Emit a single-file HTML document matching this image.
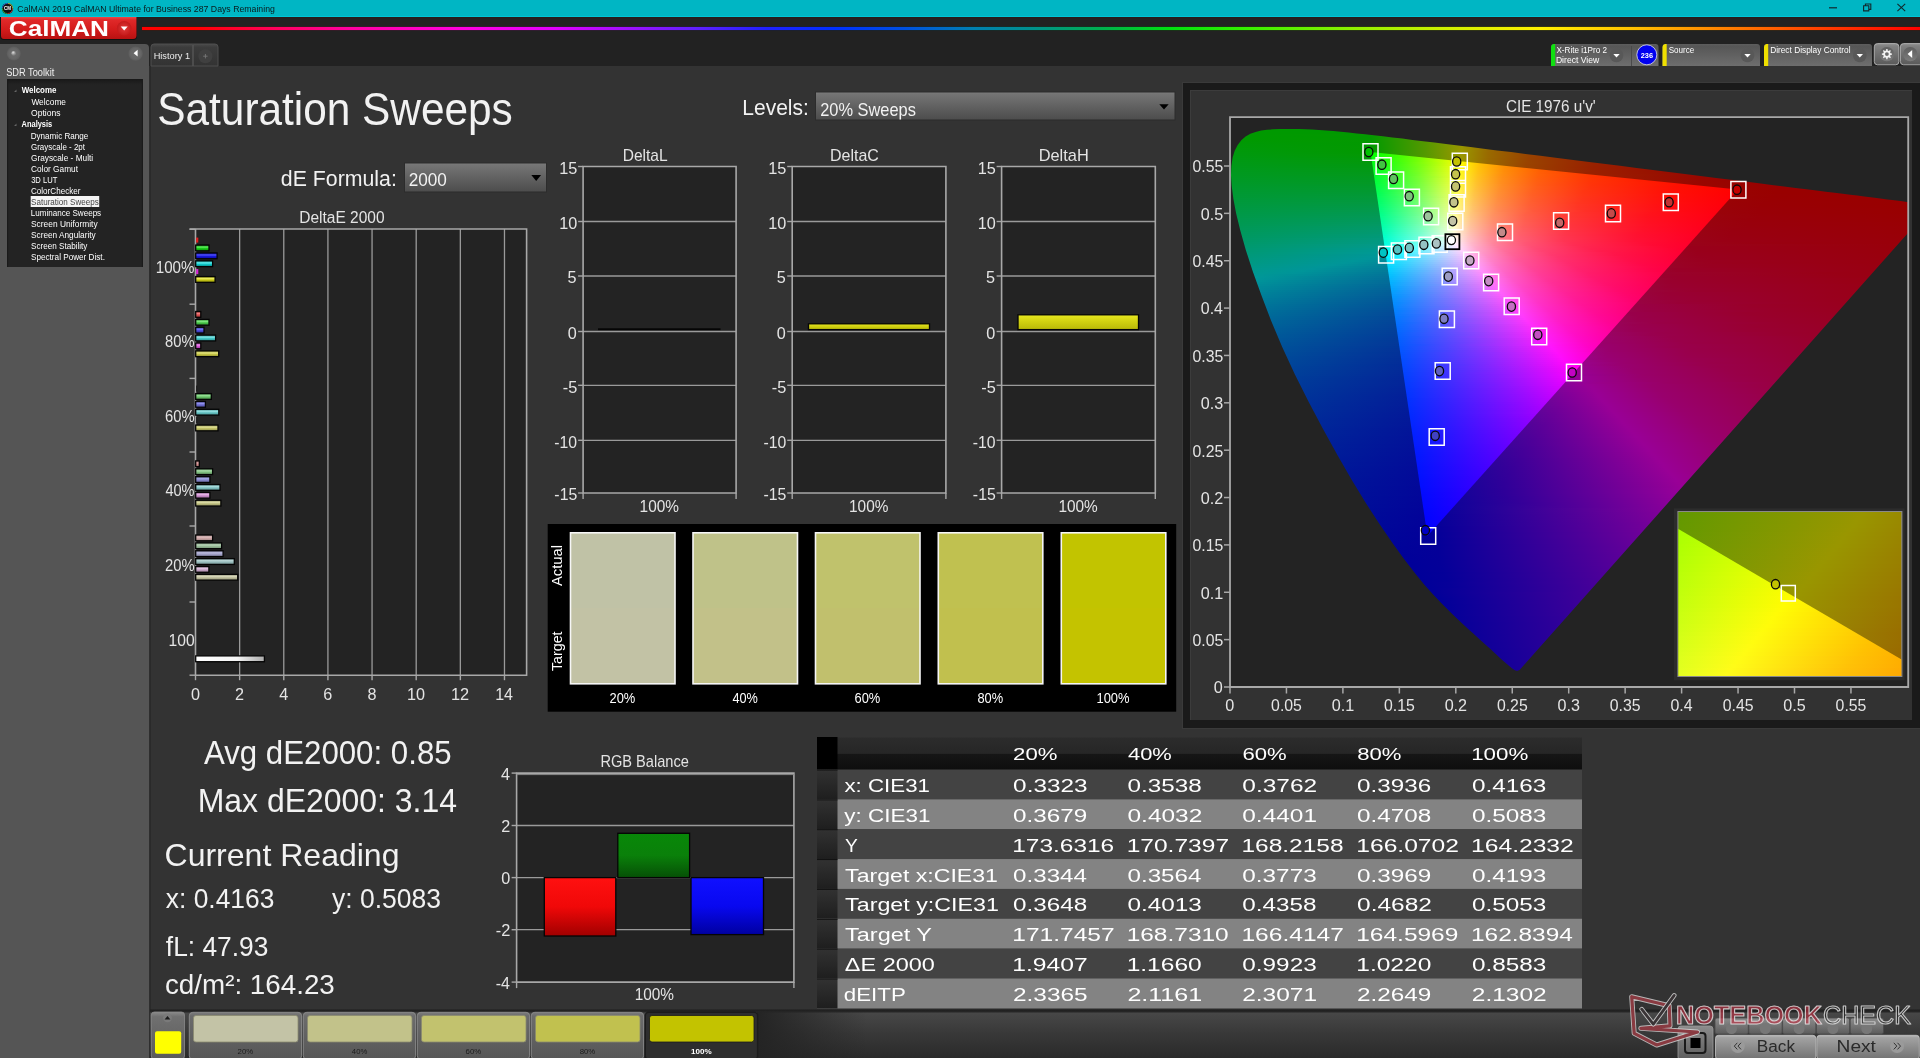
<!DOCTYPE html>
<html lang="en"><head><meta charset="utf-8"><title>CalMAN 2019 - Saturation Sweeps</title>
<style>html,body{margin:0;padding:0;background:#333;overflow:hidden}svg{display:block;will-change:transform}text{font-family:'Liberation Sans',sans-serif;white-space:pre}</style></head>
<body>
<svg width="1920" height="1058" viewBox="0 0 1920 1058">
<defs>
<linearGradient id="rb"><stop offset="0" stop-color="#ff0000"/><stop offset="0.03" stop-color="#ff0000"/><stop offset="0.077" stop-color="#ff0060"/><stop offset="0.116" stop-color="#ff00a0"/><stop offset="0.181" stop-color="#ff00e0"/><stop offset="0.233" stop-color="#e000ff"/><stop offset="0.273" stop-color="#a010ff"/><stop offset="0.312" stop-color="#6020ff"/><stop offset="0.351" stop-color="#2020ff"/><stop offset="0.39" stop-color="#0030ff"/><stop offset="0.429" stop-color="#0050e0"/><stop offset="0.468" stop-color="#0080b0"/><stop offset="0.499" stop-color="#009090"/><stop offset="0.539" stop-color="#00b050"/><stop offset="0.578" stop-color="#00e010"/><stop offset="0.617" stop-color="#30f000"/><stop offset="0.682" stop-color="#90f000"/><stop offset="0.734" stop-color="#d0f000"/><stop offset="0.786" stop-color="#fff000"/><stop offset="0.839" stop-color="#ffc000"/><stop offset="0.89" stop-color="#ff8000"/><stop offset="0.943" stop-color="#ff4000"/><stop offset="1" stop-color="#ff0000"/></linearGradient>
<linearGradient id="cb" x1="0" y1="0" x2="0" y2="1"><stop offset="0" stop-color="#e84a4a"/><stop offset="0.12" stop-color="#e02a2a"/><stop offset="0.55" stop-color="#d41c1c"/><stop offset="1" stop-color="#b81212"/></linearGradient>
<radialGradient id="cbd"><stop offset="0" stop-color="#e23a3a"/><stop offset="1" stop-color="#c41a1a"/></radialGradient>
<radialGradient id="lb"><stop offset="0" stop-color="#6c6c6c"/><stop offset=".7" stop-color="#676767"/><stop offset="1" stop-color="#5c5c5c"/></radialGradient>
<radialGradient id="lbk" cx=".4" cy=".35"><stop offset="0" stop-color="#ddd"/><stop offset="1" stop-color="#888"/></radialGradient>
<linearGradient id="tb" x1="0" y1="0" x2="0" y2="1"><stop offset="0" stop-color="#181818"/><stop offset="0.03" stop-color="#232323"/><stop offset="1" stop-color="#232323"/></linearGradient>
<linearGradient id="ht" x1="0" y1="0" x2="0" y2="1"><stop offset="0" stop-color="#4a4a4a"/><stop offset="0.15" stop-color="#3c3c3c"/><stop offset="1" stop-color="#333"/></linearGradient>
<linearGradient id="tt" x1="0" y1="0" x2="0" y2="1"><stop offset="0" stop-color="#5e5e5e"/><stop offset="0.1" stop-color="#565656"/><stop offset="1" stop-color="#6e6e6e"/></linearGradient>
<radialGradient id="dd"><stop offset="0" stop-color="#555"/><stop offset="1" stop-color="#5f5f5f"/></radialGradient>
<linearGradient id="gb" x1="0" y1="0" x2="0" y2="1"><stop offset="0" stop-color="#909090"/><stop offset="0.12" stop-color="#808080"/><stop offset="1" stop-color="#5a5a5a"/></linearGradient>
<linearGradient id="gc" x1="0" y1="0" x2="0" y2="1"><stop offset="0" stop-color="#5e5e5e"/><stop offset="1" stop-color="#7c7c7c"/></linearGradient>
<linearGradient id="dd1" x1="0" y1="0" x2="0" y2="1"><stop offset="0" stop-color="#7c7c7c"/><stop offset="0.08" stop-color="#747474"/><stop offset="1" stop-color="#4c4c4c"/></linearGradient>
<clipPath id="lvc"><rect x="816" y="92" width="358" height="27.5"/></clipPath>
<linearGradient id="bg0" x1="0" y1="0" x2="0" y2="1"><stop offset="0" stop-color="#0a8a0a"/><stop offset="0.35" stop-color="#60f060"/><stop offset="0.6" stop-color="#18c818"/><stop offset="1" stop-color="#0a8a0a"/></linearGradient>
<linearGradient id="bg1" x1="0" y1="0" x2="0" y2="1"><stop offset="0" stop-color="#0808a0"/><stop offset="0.35" stop-color="#5050ff"/><stop offset="0.6" stop-color="#1818d8"/><stop offset="1" stop-color="#0808a0"/></linearGradient>
<linearGradient id="bg2" x1="0" y1="0" x2="0" y2="1"><stop offset="0" stop-color="#089090"/><stop offset="0.35" stop-color="#60f0f0"/><stop offset="0.6" stop-color="#10c8c8"/><stop offset="1" stop-color="#089090"/></linearGradient>
<linearGradient id="bg3" x1="0" y1="0" x2="0" y2="1"><stop offset="0" stop-color="#8a8a08"/><stop offset="0.35" stop-color="#f0f060"/><stop offset="0.6" stop-color="#c8c818"/><stop offset="1" stop-color="#8a8a08"/></linearGradient>
<linearGradient id="bg4" x1="0" y1="0" x2="0" y2="1"><stop offset="0" stop-color="#a03838"/><stop offset="0.35" stop-color="#f48181"/><stop offset="0.6" stop-color="#d94f4f"/><stop offset="1" stop-color="#a03838"/></linearGradient>
<linearGradient id="bg5" x1="0" y1="0" x2="0" y2="1"><stop offset="0" stop-color="#308c30"/><stop offset="0.35" stop-color="#80e780"/><stop offset="0.6" stop-color="#45c445"/><stop offset="1" stop-color="#308c30"/></linearGradient>
<linearGradient id="bg6" x1="0" y1="0" x2="0" y2="1"><stop offset="0" stop-color="#3232a0"/><stop offset="0.35" stop-color="#7676f4"/><stop offset="0.6" stop-color="#4848d2"/><stop offset="1" stop-color="#3232a0"/></linearGradient>
<linearGradient id="bg7" x1="0" y1="0" x2="0" y2="1"><stop offset="0" stop-color="#309191"/><stop offset="0.35" stop-color="#80e7e7"/><stop offset="0.6" stop-color="#3fc4c4"/><stop offset="1" stop-color="#309191"/></linearGradient>
<linearGradient id="bg8" x1="0" y1="0" x2="0" y2="1"><stop offset="0" stop-color="#913591"/><stop offset="0.35" stop-color="#f48df4"/><stop offset="0.6" stop-color="#d253d2"/><stop offset="1" stop-color="#913591"/></linearGradient>
<linearGradient id="bg9" x1="0" y1="0" x2="0" y2="1"><stop offset="0" stop-color="#8c8c2f"/><stop offset="0.35" stop-color="#e7e780"/><stop offset="0.6" stop-color="#c4c445"/><stop offset="1" stop-color="#8c8c2f"/></linearGradient>
<linearGradient id="bg10" x1="0" y1="0" x2="0" y2="1"><stop offset="0" stop-color="#4b8e4b"/><stop offset="0.35" stop-color="#96e196"/><stop offset="0.6" stop-color="#65c065"/><stop offset="1" stop-color="#4b8e4b"/></linearGradient>
<linearGradient id="bg11" x1="0" y1="0" x2="0" y2="1"><stop offset="0" stop-color="#5151a0"/><stop offset="0.35" stop-color="#9191ec"/><stop offset="0.6" stop-color="#6a6acd"/><stop offset="1" stop-color="#5151a0"/></linearGradient>
<linearGradient id="bg12" x1="0" y1="0" x2="0" y2="1"><stop offset="0" stop-color="#4c9393"/><stop offset="0.35" stop-color="#96e1e1"/><stop offset="0.6" stop-color="#61c0c0"/><stop offset="1" stop-color="#4c9393"/></linearGradient>
<linearGradient id="bg13" x1="0" y1="0" x2="0" y2="1"><stop offset="0" stop-color="#8e8e4a"/><stop offset="0.35" stop-color="#e1e196"/><stop offset="0.6" stop-color="#c0c065"/><stop offset="1" stop-color="#8e8e4a"/></linearGradient>
<linearGradient id="bg14" x1="0" y1="0" x2="0" y2="1"><stop offset="0" stop-color="#9f6c6c"/><stop offset="0.35" stop-color="#e5acac"/><stop offset="0.6" stop-color="#d08b8b"/><stop offset="1" stop-color="#9f6c6c"/></linearGradient>
<linearGradient id="bg15" x1="0" y1="0" x2="0" y2="1"><stop offset="0" stop-color="#618f61"/><stop offset="0.35" stop-color="#a8dca8"/><stop offset="0.6" stop-color="#7ebe7e"/><stop offset="1" stop-color="#618f61"/></linearGradient>
<linearGradient id="bg16" x1="0" y1="0" x2="0" y2="1"><stop offset="0" stop-color="#69699f"/><stop offset="0.35" stop-color="#a6a6e5"/><stop offset="0.6" stop-color="#8585ca"/><stop offset="1" stop-color="#69699f"/></linearGradient>
<linearGradient id="bg17" x1="0" y1="0" x2="0" y2="1"><stop offset="0" stop-color="#629393"/><stop offset="0.35" stop-color="#a8dcdc"/><stop offset="0.6" stop-color="#7cbebe"/><stop offset="1" stop-color="#629393"/></linearGradient>
<linearGradient id="bg18" x1="0" y1="0" x2="0" y2="1"><stop offset="0" stop-color="#936593"/><stop offset="0.35" stop-color="#e5b2e5"/><stop offset="0.6" stop-color="#ca8bca"/><stop offset="1" stop-color="#936593"/></linearGradient>
<linearGradient id="bg19" x1="0" y1="0" x2="0" y2="1"><stop offset="0" stop-color="#8f8f60"/><stop offset="0.35" stop-color="#dcdca8"/><stop offset="0.6" stop-color="#bebe7e"/><stop offset="1" stop-color="#8f8f60"/></linearGradient>
<linearGradient id="bg20" x1="0" y1="0" x2="0" y2="1"><stop offset="0" stop-color="#9f8383"/><stop offset="0.35" stop-color="#dfbfbf"/><stop offset="0.6" stop-color="#cca6a6"/><stop offset="1" stop-color="#9f8383"/></linearGradient>
<linearGradient id="bg21" x1="0" y1="0" x2="0" y2="1"><stop offset="0" stop-color="#769076"/><stop offset="0.35" stop-color="#bad7ba"/><stop offset="0.6" stop-color="#98bb98"/><stop offset="1" stop-color="#769076"/></linearGradient>
<linearGradient id="bg22" x1="0" y1="0" x2="0" y2="1"><stop offset="0" stop-color="#81819f"/><stop offset="0.35" stop-color="#bcbcdf"/><stop offset="0.6" stop-color="#a0a0c6"/><stop offset="1" stop-color="#81819f"/></linearGradient>
<linearGradient id="bg23" x1="0" y1="0" x2="0" y2="1"><stop offset="0" stop-color="#799494"/><stop offset="0.35" stop-color="#bad7d7"/><stop offset="0.6" stop-color="#96bbbb"/><stop offset="1" stop-color="#799494"/></linearGradient>
<linearGradient id="bg24" x1="0" y1="0" x2="0" y2="1"><stop offset="0" stop-color="#947b94"/><stop offset="0.35" stop-color="#dfc2df"/><stop offset="0.6" stop-color="#c6a3c6"/><stop offset="1" stop-color="#947b94"/></linearGradient>
<linearGradient id="bg25" x1="0" y1="0" x2="0" y2="1"><stop offset="0" stop-color="#909076"/><stop offset="0.35" stop-color="#d7d7ba"/><stop offset="0.6" stop-color="#bbbb98"/><stop offset="1" stop-color="#909076"/></linearGradient>
<linearGradient id="wbar"><stop offset="0" stop-color="#fff"/><stop offset=".6" stop-color="#f4f4f4"/><stop offset="1" stop-color="#aaa"/></linearGradient>
<linearGradient id="ybar" x1="0" y1="0" x2="0" y2="1"><stop offset="0" stop-color="#e8e820"/><stop offset="0.5" stop-color="#cfcf10"/><stop offset="1" stop-color="#b8b808"/></linearGradient>
<linearGradient id="sw0" x1="0" y1="0" x2="0" y2="1"><stop offset="0" stop-color="#c0c2a6"/><stop offset="0.5" stop-color="#c0c2a6"/><stop offset="0.5" stop-color="#c2c2a5"/><stop offset="1" stop-color="#c2c2a5"/></linearGradient>
<linearGradient id="sw1" x1="0" y1="0" x2="0" y2="1"><stop offset="0" stop-color="#bfc289"/><stop offset="0.5" stop-color="#bfc289"/><stop offset="0.5" stop-color="#c2c189"/><stop offset="1" stop-color="#c2c189"/></linearGradient>
<linearGradient id="sw2" x1="0" y1="0" x2="0" y2="1"><stop offset="0" stop-color="#c0c26c"/><stop offset="0.5" stop-color="#c0c26c"/><stop offset="0.5" stop-color="#c1c06d"/><stop offset="1" stop-color="#c1c06d"/></linearGradient>
<linearGradient id="sw3" x1="0" y1="0" x2="0" y2="1"><stop offset="0" stop-color="#c0c150"/><stop offset="0.5" stop-color="#c0c150"/><stop offset="0.5" stop-color="#c1c04e"/><stop offset="1" stop-color="#c1c04e"/></linearGradient>
<linearGradient id="sw4" x1="0" y1="0" x2="0" y2="1"><stop offset="0" stop-color="#c2c400"/><stop offset="0.5" stop-color="#c2c400"/><stop offset="0.5" stop-color="#c4c300"/><stop offset="1" stop-color="#c4c300"/></linearGradient>
<linearGradient id="hd0"><stop offset="0" stop-color="#090"/><stop offset="1" stop-color="#090"/></linearGradient><linearGradient id="hd1"><stop offset="0" stop-color="#090"/><stop offset="1" stop-color="#090"/></linearGradient><linearGradient id="hd2"><stop offset="0" stop-color="#090"/><stop offset="1" stop-color="#090"/></linearGradient><linearGradient id="hd3"><stop offset="0" stop-color="#090"/><stop offset=".9191" stop-color="#039900"/><stop offset="1" stop-color="#190"/></linearGradient><linearGradient id="hd4"><stop offset="0" stop-color="#090"/><stop offset=".8153" stop-color="#029900"/><stop offset="1" stop-color="#2a9900"/></linearGradient><linearGradient id="hd5"><stop offset="0" stop-color="#090"/><stop offset=".7486" stop-color="#039900"/><stop offset="1" stop-color="#439900"/></linearGradient><linearGradient id="hd6"><stop offset="0" stop-color="#009902"/><stop offset=".6856" stop-color="#039900"/><stop offset=".9691" stop-color="#590"/><stop offset="1" stop-color="#609900"/></linearGradient><linearGradient id="hd7"><stop offset="0" stop-color="#009904"/><stop offset=".6351" stop-color="#029900"/><stop offset=".8957" stop-color="#590"/><stop offset="1" stop-color="#7e9900"/></linearGradient><linearGradient id="hd8"><stop offset="0" stop-color="#009906"/><stop offset=".5921" stop-color="#029900"/><stop offset=".8289" stop-color="#539900"/><stop offset=".9912" stop-color="#999700"/><stop offset="1" stop-color="#999300"/></linearGradient><linearGradient id="hd9"><stop offset="0" stop-color="#009907"/><stop offset=".561" stop-color="#039900"/><stop offset=".7805" stop-color="#590"/><stop offset=".9268" stop-color="#999600"/><stop offset="1" stop-color="#970"/></linearGradient><linearGradient id="hd10"><stop offset="0" stop-color="#009909"/><stop offset=".5267" stop-color="#039900"/><stop offset=".7328" stop-color="#590"/><stop offset=".8702" stop-color="#999600"/><stop offset=".9733" stop-color="#996a00"/><stop offset="1" stop-color="#996200"/></linearGradient><linearGradient id="hd11"><stop offset="0" stop-color="#00990b"/><stop offset=".4982" stop-color="#029900"/><stop offset=".6882" stop-color="#539900"/><stop offset=".8172" stop-color="#999800"/><stop offset=".914" stop-color="#996b00"/><stop offset="1" stop-color="#995100"/></linearGradient><linearGradient id="hd12"><stop offset="0" stop-color="#00990d"/><stop offset=".4746" stop-color="#029901"/><stop offset=".6542" stop-color="#539900"/><stop offset=".7763" stop-color="#999700"/><stop offset=".8678" stop-color="#996a00"/><stop offset="1" stop-color="#994500"/></linearGradient><linearGradient id="hd13"><stop offset="0" stop-color="#00990e"/><stop offset=".4534" stop-color="#039903"/><stop offset=".6238" stop-color="#590"/><stop offset=".7363" stop-color="#999700"/><stop offset=".8232" stop-color="#996a00"/><stop offset=".955" stop-color="#994300"/><stop offset="1" stop-color="#993a00"/></linearGradient><linearGradient id="hd14"><stop offset="0" stop-color="#009910"/><stop offset=".4329" stop-color="#029905"/><stop offset=".5945" stop-color="#590"/><stop offset=".7012" stop-color="#999700"/><stop offset=".7835" stop-color="#996a00"/><stop offset=".9085" stop-color="#994300"/><stop offset="1" stop-color="#993100"/></linearGradient><linearGradient id="hd15"><stop offset="0" stop-color="#009912"/><stop offset=".4128" stop-color="#029908"/><stop offset=".564" stop-color="#539902"/><stop offset=".6686" stop-color="#999600"/><stop offset=".7471" stop-color="#996900"/><stop offset=".8663" stop-color="#994200"/><stop offset="1" stop-color="#992900"/></linearGradient><linearGradient id="hd16"><stop offset="0" stop-color="#009914"/><stop offset=".3972" stop-color="#03990a"/><stop offset=".5417" stop-color="#559904"/><stop offset=".6389" stop-color="#999600"/><stop offset=".7139" stop-color="#996900"/><stop offset=".8278" stop-color="#994200"/><stop offset="1" stop-color="#992300"/></linearGradient><linearGradient id="hd17"><stop offset="0" stop-color="#009916"/><stop offset=".3803" stop-color="#03990c"/><stop offset=".5186" stop-color="#559907"/><stop offset=".609" stop-color="#999803"/><stop offset=".6782" stop-color="#996b00"/><stop offset=".7846" stop-color="#940"/><stop offset=".9601" stop-color="#920"/><stop offset="1" stop-color="#991d00"/></linearGradient><linearGradient id="hd18"><stop offset="0" stop-color="#009917"/><stop offset=".3648" stop-color="#02990f"/><stop offset=".4974" stop-color="#55990a"/><stop offset=".5842" stop-color="#999706"/><stop offset=".6505" stop-color="#996b01"/><stop offset=".7526" stop-color="#994300"/><stop offset=".9209" stop-color="#920"/><stop offset="1" stop-color="#991800"/></linearGradient><linearGradient id="hd19"><stop offset="0" stop-color="#009919"/><stop offset=".3505" stop-color="#029911"/><stop offset=".4755" stop-color="#53990d"/><stop offset=".5613" stop-color="#999709"/><stop offset=".625" stop-color="#996a04"/><stop offset=".723" stop-color="#994300"/><stop offset=".8848" stop-color="#992100"/><stop offset="1" stop-color="#991400"/></linearGradient><linearGradient id="hd20"><stop offset="0" stop-color="#00991b"/><stop offset=".3396" stop-color="#039914"/><stop offset=".4599" stop-color="#55990f"/><stop offset=".5401" stop-color="#99970c"/><stop offset=".6014" stop-color="#996a06"/><stop offset=".6958" stop-color="#994301"/><stop offset=".8514" stop-color="#992100"/><stop offset="1" stop-color="#991000"/></linearGradient><linearGradient id="hd21"><stop offset="0" stop-color="#00991d"/><stop offset=".3273" stop-color="#029916"/><stop offset=".4432" stop-color="#559912"/><stop offset=".5205" stop-color="#99960f"/><stop offset=".5795" stop-color="#996908"/><stop offset=".6705" stop-color="#994203"/><stop offset=".8205" stop-color="#992100"/><stop offset="1" stop-color="#990c00"/></linearGradient><linearGradient id="hd22"><stop offset="0" stop-color="#00991f"/><stop offset=".3158" stop-color="#029919"/><stop offset=".4254" stop-color="#539915"/><stop offset=".5" stop-color="#999812"/><stop offset=".5548" stop-color="#996c0b"/><stop offset=".6404" stop-color="#994405"/><stop offset=".7807" stop-color="#920"/><stop offset="1" stop-color="#990900"/></linearGradient><linearGradient id="hd23"><stop offset="0" stop-color="#009920"/><stop offset=".3079" stop-color="#03991b"/><stop offset=".414" stop-color="#559918"/><stop offset=".4841" stop-color="#999815"/><stop offset=".5372" stop-color="#996b0e"/><stop offset=".62" stop-color="#994406"/><stop offset=".7558" stop-color="#992201"/><stop offset="1" stop-color="#990700"/></linearGradient><linearGradient id="hd24"><stop offset="0" stop-color="#092"/><stop offset=".2977" stop-color="#02991e"/><stop offset=".4004" stop-color="#55991b"/><stop offset=".4682" stop-color="#999719"/><stop offset=".5195" stop-color="#996b10"/><stop offset=".5975" stop-color="#994408"/><stop offset=".7269" stop-color="#992202"/><stop offset=".961" stop-color="#990700"/><stop offset="1" stop-color="#990400"/></linearGradient><linearGradient id="hd25"><stop offset="0" stop-color="#009924"/><stop offset=".2883" stop-color="#029920"/><stop offset=".3877" stop-color="#55991e"/><stop offset=".4533" stop-color="#99971c"/><stop offset=".503" stop-color="#996a12"/><stop offset=".5785" stop-color="#99440a"/><stop offset=".7038" stop-color="#992203"/><stop offset=".9304" stop-color="#990700"/><stop offset="1" stop-color="#990200"/></linearGradient><linearGradient id="hd26"><stop offset="0" stop-color="#009926"/><stop offset=".2794" stop-color="#029923"/><stop offset=".3738" stop-color="#539921"/><stop offset=".4393" stop-color="#99961f"/><stop offset=".4875" stop-color="#996a15"/><stop offset=".5607" stop-color="#99430c"/><stop offset=".6821" stop-color="#992204"/><stop offset=".9037" stop-color="#990600"/><stop offset="1" stop-color="#900"/></linearGradient><linearGradient id="hd27"><stop offset="0" stop-color="#009928"/><stop offset=".2729" stop-color="#039925"/><stop offset=".3645" stop-color="#559924"/><stop offset=".4262" stop-color="#999622"/><stop offset=".4729" stop-color="#996917"/><stop offset=".5439" stop-color="#99430e"/><stop offset=".6617" stop-color="#992106"/><stop offset=".8766" stop-color="#990600"/><stop offset="1" stop-color="#900"/></linearGradient><linearGradient id="hd28"><stop offset="0" stop-color="#00992a"/><stop offset=".265" stop-color="#029928"/><stop offset=".3539" stop-color="#559927"/><stop offset=".412" stop-color="#999826"/><stop offset=".4555" stop-color="#996c1a"/><stop offset=".5227" stop-color="#994510"/><stop offset=".6334" stop-color="#992307"/><stop offset=".833" stop-color="#990700"/><stop offset=".9927" stop-color="#900"/><stop offset="1" stop-color="#900"/></linearGradient><linearGradient id="hd29"><stop offset="0" stop-color="#00992c"/><stop offset=".2575" stop-color="#02992b"/><stop offset=".3422" stop-color="#53992a"/><stop offset=".4004" stop-color="#999829"/><stop offset=".4427" stop-color="#996b1d"/><stop offset=".5079" stop-color="#994412"/><stop offset=".6155" stop-color="#992309"/><stop offset=".8113" stop-color="#990701"/><stop offset=".9647" stop-color="#900"/><stop offset="1" stop-color="#900"/></linearGradient><linearGradient id="hd30"><stop offset="0" stop-color="#00992e"/><stop offset=".2521" stop-color="#03992d"/><stop offset=".3345" stop-color="#55992d"/><stop offset=".3894" stop-color="#99972d"/><stop offset=".4305" stop-color="#996b1f"/><stop offset=".494" stop-color="#994414"/><stop offset=".5986" stop-color="#99220a"/><stop offset=".789" stop-color="#990702"/><stop offset=".9383" stop-color="#900"/><stop offset="1" stop-color="#900"/></linearGradient><linearGradient id="hd31"><stop offset="0" stop-color="#009930"/><stop offset=".2454" stop-color="#029930"/><stop offset=".3255" stop-color="#559930"/><stop offset=".379" stop-color="#999730"/><stop offset=".419" stop-color="#996a22"/><stop offset=".4808" stop-color="#994316"/><stop offset=".5826" stop-color="#99220b"/><stop offset=".7679" stop-color="#990603"/><stop offset=".9115" stop-color="#900"/><stop offset="1" stop-color="#900"/></linearGradient><linearGradient id="hd32"><stop offset="0" stop-color="#009932"/><stop offset=".239" stop-color="#029933"/><stop offset=".3171" stop-color="#559934"/><stop offset=".3691" stop-color="#999633"/><stop offset=".4081" stop-color="#996a25"/><stop offset=".4683" stop-color="#994318"/><stop offset=".5675" stop-color="#99220d"/><stop offset=".748" stop-color="#990603"/><stop offset=".8862" stop-color="#900"/><stop offset="1" stop-color="#900"/></linearGradient><linearGradient id="hd33"><stop offset="0" stop-color="#009934"/><stop offset=".233" stop-color="#029936"/><stop offset=".3074" stop-color="#539937"/><stop offset=".3597" stop-color="#999637"/><stop offset=".3978" stop-color="#996a27"/><stop offset=".4564" stop-color="#99431a"/><stop offset=".5531" stop-color="#99210e"/><stop offset=".729" stop-color="#990604"/><stop offset=".8637" stop-color="#990001"/><stop offset="1" stop-color="#900"/></linearGradient><linearGradient id="hd34"><stop offset="0" stop-color="#009935"/><stop offset=".2287" stop-color="#039939"/><stop offset=".3014" stop-color="#55993a"/><stop offset=".3493" stop-color="#99983b"/><stop offset=".3864" stop-color="#996b2a"/><stop offset=".442" stop-color="#99441c"/><stop offset=".5348" stop-color="#992210"/><stop offset=".7032" stop-color="#990605"/><stop offset=".8331" stop-color="#990001"/><stop offset="1" stop-color="#900"/></linearGradient><linearGradient id="hd35"><stop offset="0" stop-color="#009938"/><stop offset=".2221" stop-color="#02993b"/><stop offset=".2931" stop-color="#55993d"/><stop offset=".3399" stop-color="#99973f"/><stop offset=".3761" stop-color="#996a2d"/><stop offset=".4305" stop-color="#99431e"/><stop offset=".5211" stop-color="#921"/><stop offset=".6858" stop-color="#990606"/><stop offset=".8127" stop-color="#990002"/><stop offset="1" stop-color="#900"/></linearGradient><linearGradient id="hd36"><stop offset="0" stop-color="#00993a"/><stop offset=".2175" stop-color="#02993e"/><stop offset=".287" stop-color="#559941"/><stop offset=".3328" stop-color="#999742"/><stop offset=".3683" stop-color="#996a30"/><stop offset=".4216" stop-color="#994320"/><stop offset=".5104" stop-color="#992112"/><stop offset=".6716" stop-color="#990607"/><stop offset=".7959" stop-color="#990003"/><stop offset="1" stop-color="#900"/></linearGradient><linearGradient id="hd37"><stop offset="0" stop-color="#00993c"/><stop offset=".2189" stop-color="#039941"/><stop offset=".287" stop-color="#594"/><stop offset=".3328" stop-color="#999746"/><stop offset=".3669" stop-color="#996b33"/><stop offset=".4201" stop-color="#994322"/><stop offset=".5074" stop-color="#992214"/><stop offset=".6657" stop-color="#990608"/><stop offset=".787" stop-color="#990004"/><stop offset="1" stop-color="#900"/></linearGradient><linearGradient id="hd38"><stop offset="0" stop-color="#00993e"/><stop offset=".2178" stop-color="#029944"/><stop offset=".2859" stop-color="#559948"/><stop offset=".3319" stop-color="#999649"/><stop offset=".3659" stop-color="#996a36"/><stop offset=".4193" stop-color="#994324"/><stop offset=".5067" stop-color="#992215"/><stop offset=".6652" stop-color="#990609"/><stop offset=".7867" stop-color="#990004"/><stop offset="1" stop-color="#900"/></linearGradient><linearGradient id="hd39"><stop offset="0" stop-color="#009940"/><stop offset=".2178" stop-color="#029947"/><stop offset=".2859" stop-color="#55994b"/><stop offset=".3304" stop-color="#99984e"/><stop offset=".3644" stop-color="#996b39"/><stop offset=".4163" stop-color="#994427"/><stop offset=".5022" stop-color="#992217"/><stop offset=".6578" stop-color="#99070a"/><stop offset=".7793" stop-color="#990005"/><stop offset="1" stop-color="#900"/></linearGradient><linearGradient id="hd40"><stop offset="0" stop-color="#009942"/><stop offset=".2166" stop-color="#02994a"/><stop offset=".2834" stop-color="#53994f"/><stop offset=".3294" stop-color="#999852"/><stop offset=".3635" stop-color="#996b3c"/><stop offset=".4154" stop-color="#994429"/><stop offset=".5015" stop-color="#992219"/><stop offset=".6573" stop-color="#99060b"/><stop offset=".7789" stop-color="#990006"/><stop offset="1" stop-color="#990001"/></linearGradient><linearGradient id="hd41"><stop offset="0" stop-color="#094"/><stop offset=".2181" stop-color="#03994d"/><stop offset=".2849" stop-color="#559952"/><stop offset=".3294" stop-color="#999755"/><stop offset=".3635" stop-color="#996a3f"/><stop offset=".4154" stop-color="#99432b"/><stop offset=".5015" stop-color="#99221a"/><stop offset=".6573" stop-color="#99060c"/><stop offset=".7774" stop-color="#990007"/><stop offset="1" stop-color="#990001"/></linearGradient><linearGradient id="hd42"><stop offset="0" stop-color="#009946"/><stop offset=".2181" stop-color="#029951"/><stop offset=".2849" stop-color="#559956"/><stop offset=".3294" stop-color="#999759"/><stop offset=".3635" stop-color="#996a41"/><stop offset=".4154" stop-color="#99432d"/><stop offset=".5015" stop-color="#99211b"/><stop offset=".6573" stop-color="#99060d"/><stop offset=".776" stop-color="#990007"/><stop offset="1" stop-color="#990001"/></linearGradient><linearGradient id="hd43"><stop offset="0" stop-color="#009948"/><stop offset=".2169" stop-color="#029954"/><stop offset=".2838" stop-color="#55995a"/><stop offset=".3284" stop-color="#99965d"/><stop offset=".3626" stop-color="#996944"/><stop offset=".4146" stop-color="#99422f"/><stop offset=".5007" stop-color="#99211d"/><stop offset=".6582" stop-color="#99060e"/><stop offset=".7801" stop-color="#990008"/><stop offset="1" stop-color="#990002"/></linearGradient><linearGradient id="hd44"><stop offset="0" stop-color="#00994a"/><stop offset=".2184" stop-color="#039957"/><stop offset=".2838" stop-color="#55995d"/><stop offset=".3284" stop-color="#999661"/><stop offset=".3626" stop-color="#996947"/><stop offset=".4146" stop-color="#994231"/><stop offset=".5007" stop-color="#99211e"/><stop offset=".6582" stop-color="#99050f"/><stop offset=".7816" stop-color="#990009"/><stop offset="1" stop-color="#990002"/></linearGradient><linearGradient id="hd45"><stop offset="0" stop-color="#00994d"/><stop offset=".2173" stop-color="#02995a"/><stop offset=".2827" stop-color="#559961"/><stop offset=".3259" stop-color="#999866"/><stop offset=".3586" stop-color="#996b4c"/><stop offset=".4092" stop-color="#994435"/><stop offset=".4926" stop-color="#992221"/><stop offset=".6429" stop-color="#990711"/><stop offset=".7604" stop-color="#99000a"/><stop offset="1" stop-color="#990003"/></linearGradient><linearGradient id="hd46"><stop offset="0" stop-color="#00994f"/><stop offset=".2173" stop-color="#02995d"/><stop offset=".2827" stop-color="#549965"/><stop offset=".3259" stop-color="#99986a"/><stop offset=".3586" stop-color="#996b4f"/><stop offset=".4092" stop-color="#994337"/><stop offset=".4926" stop-color="#922"/><stop offset=".6429" stop-color="#990612"/><stop offset=".7589" stop-color="#99000b"/><stop offset="1" stop-color="#990003"/></linearGradient><linearGradient id="hd47"><stop offset="0" stop-color="#009951"/><stop offset=".2161" stop-color="#029961"/><stop offset=".2802" stop-color="#529968"/><stop offset=".3249" stop-color="#99976e"/><stop offset=".3577" stop-color="#996a52"/><stop offset=".4083" stop-color="#994339"/><stop offset=".4918" stop-color="#992124"/><stop offset=".6438" stop-color="#990612"/><stop offset=".7601" stop-color="#99000c"/><stop offset="1" stop-color="#990004"/></linearGradient><linearGradient id="hd48"><stop offset="0" stop-color="#009953"/><stop offset=".2176" stop-color="#039964"/><stop offset=".2817" stop-color="#54996c"/><stop offset=".3249" stop-color="#999772"/><stop offset=".3577" stop-color="#996a55"/><stop offset=".4083" stop-color="#99433b"/><stop offset=".4918" stop-color="#992125"/><stop offset=".6438" stop-color="#990613"/><stop offset=".7601" stop-color="#99000c"/><stop offset="1" stop-color="#990004"/></linearGradient><linearGradient id="hd49"><stop offset="0" stop-color="#009956"/><stop offset=".2164" stop-color="#029968"/><stop offset=".2806" stop-color="#549970"/><stop offset=".3239" stop-color="#999676"/><stop offset=".3567" stop-color="#996958"/><stop offset=".4075" stop-color="#99423d"/><stop offset=".491" stop-color="#992127"/><stop offset=".6433" stop-color="#990514"/><stop offset=".7612" stop-color="#99000d"/><stop offset="1" stop-color="#990005"/></linearGradient><linearGradient id="hd50"><stop offset="0" stop-color="#009958"/><stop offset=".2164" stop-color="#02996b"/><stop offset=".2806" stop-color="#549974"/><stop offset=".3224" stop-color="#99987c"/><stop offset=".3537" stop-color="#996c5d"/><stop offset=".4015" stop-color="#994542"/><stop offset=".4806" stop-color="#99232a"/><stop offset=".6239" stop-color="#990817"/><stop offset=".7403" stop-color="#99000f"/><stop offset="1" stop-color="#990005"/></linearGradient><linearGradient id="hd51"><stop offset="0" stop-color="#00995a"/><stop offset=".2167" stop-color="#03996f"/><stop offset=".2795" stop-color="#549978"/><stop offset=".3214" stop-color="#999880"/><stop offset=".3528" stop-color="#996c60"/><stop offset=".4006" stop-color="#994544"/><stop offset=".4798" stop-color="#99232c"/><stop offset=".6233" stop-color="#990718"/><stop offset=".7369" stop-color="#990010"/><stop offset="1" stop-color="#990006"/></linearGradient><linearGradient id="hd52"><stop offset="0" stop-color="#00995d"/><stop offset=".2167" stop-color="#029972"/><stop offset=".2795" stop-color="#54997d"/><stop offset=".3214" stop-color="#999784"/><stop offset=".3528" stop-color="#996b63"/><stop offset=".4006" stop-color="#994446"/><stop offset=".4798" stop-color="#99232d"/><stop offset=".6233" stop-color="#990719"/><stop offset=".7354" stop-color="#901"/><stop offset="1" stop-color="#990006"/></linearGradient><linearGradient id="hd53"><stop offset="0" stop-color="#00995f"/><stop offset=".2156" stop-color="#029976"/><stop offset=".2784" stop-color="#549981"/><stop offset=".3204" stop-color="#999788"/><stop offset=".3518" stop-color="#996b66"/><stop offset=".3997" stop-color="#994448"/><stop offset=".479" stop-color="#99222f"/><stop offset=".6228" stop-color="#99071a"/><stop offset=".735" stop-color="#901"/><stop offset="1" stop-color="#990007"/></linearGradient><linearGradient id="hd54"><stop offset="0" stop-color="#009961"/><stop offset=".2159" stop-color="#019979"/><stop offset=".2789" stop-color="#549985"/><stop offset=".3208" stop-color="#99968d"/><stop offset=".3523" stop-color="#996a69"/><stop offset=".4003" stop-color="#99434b"/><stop offset=".4798" stop-color="#992230"/><stop offset=".6237" stop-color="#99061b"/><stop offset=".7361" stop-color="#990012"/><stop offset="1" stop-color="#990007"/></linearGradient><linearGradient id="hd55"><stop offset="0" stop-color="#009964"/><stop offset=".2169" stop-color="#03997d"/><stop offset=".2786" stop-color="#549989"/><stop offset=".3208" stop-color="#999691"/><stop offset=".3524" stop-color="#99696d"/><stop offset=".4006" stop-color="#99434d"/><stop offset=".4804" stop-color="#992132"/><stop offset=".6265" stop-color="#99061b"/><stop offset=".738" stop-color="#990013"/><stop offset="1" stop-color="#990008"/></linearGradient><linearGradient id="hd56"><stop offset="0" stop-color="#096"/><stop offset=".2175" stop-color="#029981"/><stop offset=".2795" stop-color="#54998d"/><stop offset=".3202" stop-color="#999898"/><stop offset=".3505" stop-color="#996c73"/><stop offset=".3973" stop-color="#994552"/><stop offset=".4743" stop-color="#992335"/><stop offset=".6133" stop-color="#99081e"/><stop offset=".7251" stop-color="#990015"/><stop offset="1" stop-color="#990009"/></linearGradient><linearGradient id="hd57"><stop offset="0" stop-color="#009969"/><stop offset=".2167" stop-color="#029984"/><stop offset=".2788" stop-color="#549992"/><stop offset=".3212" stop-color="#989499"/><stop offset=".3545" stop-color="#996772"/><stop offset=".4045" stop-color="#994050"/><stop offset=".4864" stop-color="#991f34"/><stop offset=".6379" stop-color="#99041d"/><stop offset=".7742" stop-color="#990012"/><stop offset="1" stop-color="#990009"/></linearGradient><linearGradient id="hd58"><stop offset="0" stop-color="#00996c"/><stop offset=".2177" stop-color="#039989"/><stop offset=".2785" stop-color="#549996"/><stop offset=".3257" stop-color="#998d97"/><stop offset=".3592" stop-color="#996271"/><stop offset=".411" stop-color="#993c4f"/><stop offset=".4977" stop-color="#991c33"/><stop offset=".6606" stop-color="#99021b"/><stop offset="1" stop-color="#99000a"/></linearGradient><linearGradient id="hd59"><stop offset="0" stop-color="#00996e"/><stop offset=".2183" stop-color="#02998c"/><stop offset=".287" stop-color="#5e9599"/><stop offset=".3298" stop-color="#998797"/><stop offset=".3649" stop-color="#995d70"/><stop offset=".4198" stop-color="#99384e"/><stop offset=".513" stop-color="#991831"/><stop offset=".6809" stop-color="#99001b"/><stop offset="1" stop-color="#99000a"/></linearGradient><linearGradient id="hd60"><stop offset="0" stop-color="#009971"/><stop offset=".2147" stop-color="#009990"/><stop offset=".2715" stop-color="#479599"/><stop offset=".3328" stop-color="#998296"/><stop offset=".3696" stop-color="#99586f"/><stop offset=".4279" stop-color="#99344d"/><stop offset=".5276" stop-color="#991530"/><stop offset=".6902" stop-color="#99001b"/><stop offset="1" stop-color="#99000b"/></linearGradient><linearGradient id="hd61"><stop offset="0" stop-color="#009973"/><stop offset=".2123" stop-color="#009993"/><stop offset=".2231" stop-color="#079995"/><stop offset=".2846" stop-color="#558e99"/><stop offset=".3369" stop-color="#997d96"/><stop offset=".3754" stop-color="#99546e"/><stop offset=".4369" stop-color="#99304c"/><stop offset=".5431" stop-color="#99122f"/><stop offset=".6969" stop-color="#99001b"/><stop offset="1" stop-color="#99000c"/></linearGradient><linearGradient id="hd62"><stop offset="0" stop-color="#009976"/><stop offset=".2083" stop-color="#009996"/><stop offset=".2207" stop-color="#059999"/><stop offset=".338" stop-color="#997a98"/><stop offset=".3781" stop-color="#99516f"/><stop offset=".4414" stop-color="#992e4c"/><stop offset=".5525" stop-color="#99102e"/><stop offset=".6991" stop-color="#99001c"/><stop offset="1" stop-color="#99000c"/></linearGradient><linearGradient id="hd63"><stop offset="0" stop-color="#009979"/><stop offset=".2171" stop-color="#009699"/><stop offset=".3411" stop-color="#997598"/><stop offset=".3814" stop-color="#994e6f"/><stop offset=".4465" stop-color="#992b4c"/><stop offset=".5612" stop-color="#990e2e"/><stop offset=".7008" stop-color="#99001d"/><stop offset="1" stop-color="#99000d"/></linearGradient><linearGradient id="hd64"><stop offset="0" stop-color="#00997b"/><stop offset=".2006" stop-color="#009699"/><stop offset=".2208" stop-color="#039199"/><stop offset=".3453" stop-color="#997197"/><stop offset=".3872" stop-color="#994a6e"/><stop offset=".4541" stop-color="#99294b"/><stop offset=".5723" stop-color="#990c2e"/><stop offset=".703" stop-color="#99001e"/><stop offset="1" stop-color="#99000d"/></linearGradient><linearGradient id="hd65"><stop offset="0" stop-color="#00997e"/><stop offset=".1844" stop-color="#009699"/><stop offset=".2203" stop-color="#038e99"/><stop offset=".3438" stop-color="#956f99"/><stop offset=".3563" stop-color="#99648e"/><stop offset=".4031" stop-color="#994066"/><stop offset=".4797" stop-color="#992045"/><stop offset=".6172" stop-color="#990628"/><stop offset=".725" stop-color="#99001d"/><stop offset="1" stop-color="#99000e"/></linearGradient><linearGradient id="hd66"><stop offset="0" stop-color="#009981"/><stop offset=".1661" stop-color="#009699"/><stop offset=".2194" stop-color="#028a99"/><stop offset=".3511" stop-color="#996997"/><stop offset=".395" stop-color="#99446e"/><stop offset=".4655" stop-color="#99244b"/><stop offset=".5893" stop-color="#99092e"/><stop offset=".7038" stop-color="#990020"/><stop offset="1" stop-color="#99000f"/></linearGradient><linearGradient id="hd67"><stop offset="0" stop-color="#009983"/><stop offset=".1509" stop-color="#009699"/><stop offset=".2201" stop-color="#028799"/><stop offset=".3506" stop-color="#966899"/><stop offset=".4072" stop-color="#993d69"/><stop offset=".4843" stop-color="#991e47"/><stop offset=".6211" stop-color="#99052a"/><stop offset=".7343" stop-color="#99001e"/><stop offset="1" stop-color="#99000f"/></linearGradient><linearGradient id="hd68"><stop offset="0" stop-color="#009986"/><stop offset=".1327" stop-color="#009699"/><stop offset=".2212" stop-color="#038399"/><stop offset=".3586" stop-color="#996196"/><stop offset=".4044" stop-color="#993e6e"/><stop offset=".4787" stop-color="#99204b"/><stop offset=".6098" stop-color="#99062d"/><stop offset=".7172" stop-color="#990021"/><stop offset="1" stop-color="#990010"/></linearGradient><linearGradient id="hd69"><stop offset="0" stop-color="#009989"/><stop offset=".1159" stop-color="#009599"/><stop offset=".2206" stop-color="#028099"/><stop offset=".3603" stop-color="#995f98"/><stop offset=".4079" stop-color="#993c6e"/><stop offset=".4841" stop-color="#991e4b"/><stop offset=".6175" stop-color="#99052d"/><stop offset=".7286" stop-color="#990021"/><stop offset="1" stop-color="#901"/></linearGradient><linearGradient id="hd70"><stop offset="0" stop-color="#00998c"/><stop offset=".1003" stop-color="#009599"/><stop offset=".2213" stop-color="#027d99"/><stop offset=".3599" stop-color="#955d99"/><stop offset=".3774" stop-color="#99508a"/><stop offset=".4331" stop-color="#993063"/><stop offset=".5239" stop-color="#991441"/><stop offset=".6783" stop-color="#990027"/><stop offset="1" stop-color="#901"/></linearGradient><linearGradient id="hd71"><stop offset="0" stop-color="#00998f"/><stop offset=".0831" stop-color="#009599"/><stop offset=".222" stop-color="#037a99"/><stop offset=".3626" stop-color="#955a99"/><stop offset=".3802" stop-color="#994d8a"/><stop offset=".4361" stop-color="#992e63"/><stop offset=".5288" stop-color="#991341"/><stop offset=".6805" stop-color="#990028"/><stop offset="1" stop-color="#990012"/></linearGradient><linearGradient id="hd72"><stop offset="0" stop-color="#009992"/><stop offset=".0706" stop-color="#009499"/><stop offset=".2215" stop-color="#027799"/><stop offset=".3708" stop-color="#995497"/><stop offset=".4205" stop-color="#99346e"/><stop offset=".5008" stop-color="#99194b"/><stop offset=".6421" stop-color="#99022e"/><stop offset=".923" stop-color="#990016"/><stop offset="1" stop-color="#990013"/></linearGradient><linearGradient id="hd73"><stop offset="0" stop-color="#009995"/><stop offset=".0853" stop-color="#008e99"/><stop offset=".2222" stop-color="#027499"/><stop offset=".3752" stop-color="#995197"/><stop offset=".4267" stop-color="#99326e"/><stop offset=".5089" stop-color="#99174b"/><stop offset=".6538" stop-color="#99012d"/><stop offset=".9436" stop-color="#990016"/><stop offset="1" stop-color="#990013"/></linearGradient><linearGradient id="hd74"><stop offset="0" stop-color="#009998"/><stop offset=".2233" stop-color="#037199"/><stop offset=".3786" stop-color="#994e96"/><stop offset=".432" stop-color="#992f6d"/><stop offset=".5178" stop-color="#99154a"/><stop offset=".6683" stop-color="#99002d"/><stop offset=".9709" stop-color="#990015"/><stop offset="1" stop-color="#990014"/></linearGradient><linearGradient id="hd75"><stop offset="0" stop-color="#009799"/><stop offset=".2224" stop-color="#026f99"/><stop offset=".375" stop-color="#954e99"/><stop offset=".3945" stop-color="#99428a"/><stop offset=".4562" stop-color="#992563"/><stop offset=".5568" stop-color="#990d41"/><stop offset=".6851" stop-color="#99002c"/><stop offset="1" stop-color="#990015"/></linearGradient><linearGradient id="hd76"><stop offset="0" stop-color="#009499"/><stop offset=".2231" stop-color="#026c99"/><stop offset=".386" stop-color="#994896"/><stop offset=".4414" stop-color="#992b6d"/><stop offset=".5293" stop-color="#99124a"/><stop offset=".6743" stop-color="#99002e"/><stop offset=".9739" stop-color="#990016"/><stop offset="1" stop-color="#990015"/></linearGradient><linearGradient id="hd77"><stop offset="0" stop-color="#009199"/><stop offset=".2242" stop-color="#036a99"/><stop offset=".3879" stop-color="#994697"/><stop offset=".4435" stop-color="#992a6e"/><stop offset=".5319" stop-color="#99114b"/><stop offset=".6743" stop-color="#99002f"/><stop offset=".9705" stop-color="#990017"/><stop offset="1" stop-color="#990016"/></linearGradient><linearGradient id="hd78"><stop offset="0" stop-color="#008e99"/><stop offset=".2237" stop-color="#026799"/><stop offset=".3865" stop-color="#964599"/><stop offset=".4572" stop-color="#992469"/><stop offset=".5543" stop-color="#990d47"/><stop offset=".6809" stop-color="#990030"/><stop offset=".9803" stop-color="#990018"/><stop offset="1" stop-color="#990017"/></linearGradient><linearGradient id="hd79"><stop offset="0" stop-color="#008b99"/><stop offset=".2244" stop-color="#026599"/><stop offset=".396" stop-color="#994197"/><stop offset=".4538" stop-color="#99266e"/><stop offset=".5462" stop-color="#990e4b"/><stop offset=".6782" stop-color="#990031"/><stop offset=".9686" stop-color="#990019"/><stop offset="1" stop-color="#990017"/></linearGradient><linearGradient id="hd80"><stop offset="0" stop-color="#008999"/><stop offset=".2252" stop-color="#036299"/><stop offset=".399" stop-color="#993e97"/><stop offset=".4586" stop-color="#99236d"/><stop offset=".553" stop-color="#990d4b"/><stop offset=".6772" stop-color="#903"/><stop offset=".9636" stop-color="#99001a"/><stop offset="1" stop-color="#990018"/></linearGradient><linearGradient id="hd81"><stop offset="0" stop-color="#008699"/><stop offset=".2246" stop-color="#026099"/><stop offset=".396" stop-color="#953e99"/><stop offset=".421" stop-color="#993287"/><stop offset=".4908" stop-color="#991a61"/><stop offset=".6073" stop-color="#990540"/><stop offset=".7238" stop-color="#99002e"/><stop offset="1" stop-color="#990019"/></linearGradient><linearGradient id="hd82"><stop offset="0" stop-color="#008399"/><stop offset=".2241" stop-color="#025e99"/><stop offset=".4064" stop-color="#993996"/><stop offset=".4682" stop-color="#99206d"/><stop offset=".5669" stop-color="#990a4a"/><stop offset=".6789" stop-color="#990035"/><stop offset=".9599" stop-color="#99001c"/><stop offset="1" stop-color="#99001a"/></linearGradient><linearGradient id="hd83"><stop offset="0" stop-color="#008199"/><stop offset=".2265" stop-color="#035c99"/><stop offset=".4044" stop-color="#963999"/><stop offset=".4815" stop-color="#991c6a"/><stop offset=".5872" stop-color="#990747"/><stop offset=".6879" stop-color="#990035"/><stop offset=".9732" stop-color="#99001c"/><stop offset="1" stop-color="#99001a"/></linearGradient><linearGradient id="hd84"><stop offset="0" stop-color="#007f99"/><stop offset=".2256" stop-color="#025a99"/><stop offset=".4141" stop-color="#993596"/><stop offset=".4781" stop-color="#991c6d"/><stop offset=".5808" stop-color="#99084a"/><stop offset=".6835" stop-color="#990037"/><stop offset=".9613" stop-color="#99001d"/><stop offset="1" stop-color="#99001b"/></linearGradient><linearGradient id="hd85"><stop offset="0" stop-color="#007c99"/><stop offset=".225" stop-color="#025899"/><stop offset=".4162" stop-color="#993397"/><stop offset=".4805" stop-color="#991b6e"/><stop offset=".5838" stop-color="#99074b"/><stop offset=".6836" stop-color="#990038"/><stop offset=".9577" stop-color="#99001e"/><stop offset="1" stop-color="#99001c"/></linearGradient><linearGradient id="hd86"><stop offset="0" stop-color="#007a99"/><stop offset=".2262" stop-color="#035699"/><stop offset=".415" stop-color="#973399"/><stop offset=".4932" stop-color="#99186b"/><stop offset=".6037" stop-color="#990448"/><stop offset=".733" stop-color="#990032"/><stop offset="1" stop-color="#99001c"/></linearGradient><linearGradient id="hd87"><stop offset="0" stop-color="#007899"/><stop offset=".227" stop-color="#035499"/><stop offset=".4249" stop-color="#992f97"/><stop offset=".4915" stop-color="#99186e"/><stop offset=".599" stop-color="#99054b"/><stop offset=".7116" stop-color="#990036"/><stop offset="1" stop-color="#99001d"/></linearGradient><linearGradient id="hd88"><stop offset="0" stop-color="#007599"/><stop offset=".2264" stop-color="#025399"/><stop offset=".422" stop-color="#962f99"/><stop offset=".5077" stop-color="#991469"/><stop offset=".6244" stop-color="#990147"/><stop offset=".8319" stop-color="#99002a"/><stop offset="1" stop-color="#99001e"/></linearGradient><linearGradient id="hd89"><stop offset="0" stop-color="#007399"/><stop offset=".2272" stop-color="#035199"/><stop offset=".4251" stop-color="#962d99"/><stop offset=".5112" stop-color="#991369"/><stop offset=".6299" stop-color="#990147"/><stop offset=".8399" stop-color="#99002a"/><stop offset="1" stop-color="#99001f"/></linearGradient><linearGradient id="hd90"><stop offset="0" stop-color="#007199"/><stop offset=".2266" stop-color="#034f99"/><stop offset=".436" stop-color="#992996"/><stop offset=".5069" stop-color="#99146d"/><stop offset=".6211" stop-color="#99014a"/><stop offset=".8218" stop-color="#99002d"/><stop offset="1" stop-color="#990020"/></linearGradient><linearGradient id="hd91"><stop offset="0" stop-color="#006f99"/><stop offset=".2274" stop-color="#024d99"/><stop offset=".4323" stop-color="#952999"/><stop offset=".4566" stop-color="#99218b"/><stop offset=".5382" stop-color="#990d63"/><stop offset=".6597" stop-color="#904"/><stop offset=".8906" stop-color="#990028"/><stop offset="1" stop-color="#990020"/></linearGradient><linearGradient id="hd92"><stop offset="0" stop-color="#006d99"/><stop offset=".2286" stop-color="#034b99"/><stop offset=".4433" stop-color="#992697"/><stop offset=".5166" stop-color="#99116e"/><stop offset=".6335" stop-color="#99004b"/><stop offset=".8394" stop-color="#99002d"/><stop offset="1" stop-color="#990021"/></linearGradient><linearGradient id="hd93"><stop offset="0" stop-color="#006b99"/><stop offset=".2277" stop-color="#034a99"/><stop offset=".4466" stop-color="#992497"/><stop offset=".5201" stop-color="#99106e"/><stop offset=".6392" stop-color="#99004b"/><stop offset=".8476" stop-color="#99002d"/><stop offset="1" stop-color="#902"/></linearGradient><linearGradient id="hd94"><stop offset="0" stop-color="#006999"/><stop offset=".2271" stop-color="#024899"/><stop offset=".4437" stop-color="#962499"/><stop offset=".537" stop-color="#990d6a"/><stop offset=".6532" stop-color="#990049"/><stop offset=".8715" stop-color="#99002c"/><stop offset="1" stop-color="#990023"/></linearGradient><linearGradient id="hd95"><stop offset="0" stop-color="#006799"/><stop offset=".2283" stop-color="#034799"/><stop offset=".4549" stop-color="#992097"/><stop offset=".5327" stop-color="#990d6d"/><stop offset=".6513" stop-color="#99004b"/><stop offset=".8655" stop-color="#99002e"/><stop offset="1" stop-color="#990024"/></linearGradient><linearGradient id="hd96"><stop offset="0" stop-color="#006599"/><stop offset=".2291" stop-color="#034599"/><stop offset=".4529" stop-color="#962199"/><stop offset=".5471" stop-color="#990b6a"/><stop offset=".6536" stop-color="#99004d"/><stop offset=".8668" stop-color="#99002f"/><stop offset="1" stop-color="#990024"/></linearGradient><linearGradient id="hd97"><stop offset="0" stop-color="#006499"/><stop offset=".2286" stop-color="#024499"/><stop offset=".4554" stop-color="#951f99"/><stop offset=".4893" stop-color="#991687"/><stop offset=".5839" stop-color="#990560"/><stop offset=".6911" stop-color="#990047"/><stop offset=".9321" stop-color="#99002a"/><stop offset="1" stop-color="#990025"/></linearGradient><linearGradient id="hd98"><stop offset="0" stop-color="#006299"/><stop offset=".2294" stop-color="#034299"/><stop offset=".4677" stop-color="#991c96"/><stop offset=".5484" stop-color="#990a6d"/><stop offset=".6505" stop-color="#990050"/><stop offset=".8566" stop-color="#990032"/><stop offset="1" stop-color="#990026"/></linearGradient><linearGradient id="hd99"><stop offset="0" stop-color="#006099"/><stop offset=".2288" stop-color="#034199"/><stop offset=".4631" stop-color="#961c99"/><stop offset=".5658" stop-color="#990769"/><stop offset=".6595" stop-color="#990050"/><stop offset=".8703" stop-color="#990031"/><stop offset="1" stop-color="#990027"/></linearGradient><linearGradient id="hd100"><stop offset="0" stop-color="#005e99"/><stop offset=".2283" stop-color="#024099"/><stop offset=".4746" stop-color="#991997"/><stop offset=".558" stop-color="#99086e"/><stop offset=".6522" stop-color="#990053"/><stop offset=".8551" stop-color="#990034"/><stop offset="1" stop-color="#990028"/></linearGradient><linearGradient id="hd101"><stop offset="0" stop-color="#005d99"/><stop offset=".2309" stop-color="#033e99"/><stop offset=".48" stop-color="#991797"/><stop offset=".5655" stop-color="#99066e"/><stop offset=".6582" stop-color="#990053"/><stop offset=".8618" stop-color="#990034"/><stop offset="1" stop-color="#990029"/></linearGradient><linearGradient id="hd102"><stop offset="0" stop-color="#005b99"/><stop offset=".2299" stop-color="#033d99"/><stop offset=".4763" stop-color="#971899"/><stop offset=".5785" stop-color="#99046b"/><stop offset=".6989" stop-color="#99004c"/><stop offset=".9343" stop-color="#99002e"/><stop offset="1" stop-color="#990029"/></linearGradient><linearGradient id="hd103"><stop offset="0" stop-color="#005999"/><stop offset=".2294" stop-color="#023c99"/><stop offset=".4881" stop-color="#991597"/><stop offset=".5761" stop-color="#99046d"/><stop offset=".6899" stop-color="#99004f"/><stop offset=".9156" stop-color="#990031"/><stop offset="1" stop-color="#99002a"/></linearGradient><linearGradient id="hd104"><stop offset="0" stop-color="#005899"/><stop offset=".2306" stop-color="#033a99"/><stop offset=".4926" stop-color="#991396"/><stop offset=".5812" stop-color="#99036e"/><stop offset=".7251" stop-color="#99004a"/><stop offset=".9779" stop-color="#99002d"/><stop offset="1" stop-color="#99002b"/></linearGradient><linearGradient id="hd105"><stop offset="0" stop-color="#005699"/><stop offset=".2301" stop-color="#033999"/><stop offset=".4972" stop-color="#991296"/><stop offset=".5881" stop-color="#99026d"/><stop offset=".7347" stop-color="#99004a"/><stop offset=".9926" stop-color="#99002d"/><stop offset="1" stop-color="#99002c"/></linearGradient><linearGradient id="hd106"><stop offset="0" stop-color="#059"/><stop offset=".2295" stop-color="#023899"/><stop offset=".5019" stop-color="#991096"/><stop offset=".5951" stop-color="#99016d"/><stop offset=".7444" stop-color="#99004a"/><stop offset="1" stop-color="#99002d"/></linearGradient><linearGradient id="hd107"><stop offset="0" stop-color="#005399"/><stop offset=".2303" stop-color="#033799"/><stop offset=".4963" stop-color="#971199"/><stop offset=".6086" stop-color="#99006a"/><stop offset=".7659" stop-color="#990047"/><stop offset="1" stop-color="#99002e"/></linearGradient><linearGradient id="hd108"><stop offset="0" stop-color="#005299"/><stop offset=".2312" stop-color="#033699"/><stop offset=".5094" stop-color="#990e97"/><stop offset=".6034" stop-color="#99006e"/><stop offset=".7556" stop-color="#99004b"/><stop offset="1" stop-color="#99002f"/></linearGradient><linearGradient id="hd109"><stop offset="0" stop-color="#005099"/><stop offset=".2306" stop-color="#023599"/><stop offset=".5047" stop-color="#960f99"/><stop offset=".5992" stop-color="#990071"/><stop offset=".7467" stop-color="#99004d"/><stop offset="1" stop-color="#990030"/></linearGradient><linearGradient id="hd110"><stop offset="0" stop-color="#004f99"/><stop offset=".2319" stop-color="#033399"/><stop offset=".5114" stop-color="#970d99"/><stop offset=".6217" stop-color="#99006c"/><stop offset=".7814" stop-color="#990049"/><stop offset="1" stop-color="#990031"/></linearGradient><linearGradient id="hd111"><stop offset="0" stop-color="#004e99"/><stop offset=".2309" stop-color="#033299"/><stop offset=".5229" stop-color="#990b96"/><stop offset=".6221" stop-color="#99006d"/><stop offset=".7824" stop-color="#99004a"/><stop offset="1" stop-color="#990032"/></linearGradient><linearGradient id="hd112"><stop offset="0" stop-color="#004c99"/><stop offset=".2303" stop-color="#023199"/><stop offset=".5182" stop-color="#960b99"/><stop offset=".62" stop-color="#990070"/><stop offset=".7774" stop-color="#99004c"/><stop offset="1" stop-color="#903"/></linearGradient><linearGradient id="hd113"><stop offset="0" stop-color="#004b99"/><stop offset=".2317" stop-color="#033099"/><stop offset=".5232" stop-color="#970a99"/><stop offset=".6197" stop-color="#990072"/><stop offset=".7741" stop-color="#99004e"/><stop offset="1" stop-color="#990034"/></linearGradient><linearGradient id="hd114"><stop offset="0" stop-color="#004999"/><stop offset=".2311" stop-color="#032f99"/><stop offset=".5379" stop-color="#990796"/><stop offset=".6252" stop-color="#990072"/><stop offset=".7825" stop-color="#99004e"/><stop offset="1" stop-color="#990035"/></linearGradient><linearGradient id="hd115"><stop offset="0" stop-color="#004899"/><stop offset=".2305" stop-color="#022e99"/><stop offset=".5312" stop-color="#960899"/><stop offset=".6191" stop-color="#990076"/><stop offset=".7715" stop-color="#990052"/><stop offset="1" stop-color="#990036"/></linearGradient><linearGradient id="hd116"><stop offset="0" stop-color="#004799"/><stop offset=".2314" stop-color="#032d99"/><stop offset=".5451" stop-color="#990597"/><stop offset=".6353" stop-color="#990073"/><stop offset=".7961" stop-color="#99004f"/><stop offset="1" stop-color="#990036"/></linearGradient><linearGradient id="hd117"><stop offset="0" stop-color="#004699"/><stop offset=".2308" stop-color="#032c99"/><stop offset=".5503" stop-color="#990497"/><stop offset=".6588" stop-color="#99006e"/><stop offset=".8343" stop-color="#99004a"/><stop offset="1" stop-color="#990038"/></linearGradient><linearGradient id="hd118"><stop offset="0" stop-color="#004599"/><stop offset=".2317" stop-color="#022b99"/><stop offset=".5465" stop-color="#970499"/><stop offset=".6475" stop-color="#990073"/><stop offset=".8119" stop-color="#99004f"/><stop offset="1" stop-color="#990039"/></linearGradient><linearGradient id="hd119"><stop offset="0" stop-color="#004399"/><stop offset=".2331" stop-color="#032a99"/><stop offset=".5618" stop-color="#990296"/><stop offset=".6733" stop-color="#99006e"/><stop offset=".8526" stop-color="#99004a"/><stop offset="1" stop-color="#99003a"/></linearGradient><linearGradient id="hd120"><stop offset="0" stop-color="#004299"/><stop offset=".232" stop-color="#032a99"/><stop offset=".556" stop-color="#970299"/><stop offset=".688" stop-color="#99006b"/><stop offset=".876" stop-color="#990048"/><stop offset="1" stop-color="#99003b"/></linearGradient><linearGradient id="hd121"><stop offset="0" stop-color="#004199"/><stop offset=".2314" stop-color="#032999"/><stop offset=".5714" stop-color="#990096"/><stop offset=".6881" stop-color="#99006d"/><stop offset=".8753" stop-color="#99004a"/><stop offset="1" stop-color="#99003c"/></linearGradient><linearGradient id="hd122"><stop offset="0" stop-color="#004099"/><stop offset=".2328" stop-color="#032899"/><stop offset=".5769" stop-color="#990096"/><stop offset=".6943" stop-color="#99006d"/><stop offset=".8846" stop-color="#99004a"/><stop offset="1" stop-color="#99003d"/></linearGradient><linearGradient id="hd123"><stop offset="0" stop-color="#003f99"/><stop offset=".2322" stop-color="#032799"/><stop offset=".5703" stop-color="#960099"/><stop offset=".7128" stop-color="#99006a"/><stop offset=".9124" stop-color="#990047"/><stop offset="1" stop-color="#99003e"/></linearGradient><linearGradient id="hd124"><stop offset="0" stop-color="#003d99"/><stop offset=".2316" stop-color="#032699"/><stop offset=".5861" stop-color="#990097"/><stop offset=".707" stop-color="#99006d"/><stop offset=".9016" stop-color="#99004a"/><stop offset="1" stop-color="#99003f"/></linearGradient><linearGradient id="hd125"><stop offset="0" stop-color="#003c99"/><stop offset=".2325" stop-color="#032599"/><stop offset=".5905" stop-color="#990096"/><stop offset=".714" stop-color="#99006d"/><stop offset=".9115" stop-color="#99004a"/><stop offset="1" stop-color="#990040"/></linearGradient><linearGradient id="hd126"><stop offset="0" stop-color="#003b99"/><stop offset=".2319" stop-color="#032499"/><stop offset=".5859" stop-color="#970099"/><stop offset=".7288" stop-color="#99006b"/><stop offset=".9337" stop-color="#990048"/><stop offset="1" stop-color="#990041"/></linearGradient><linearGradient id="hd127"><stop offset="0" stop-color="#003a99"/><stop offset=".2313" stop-color="#032499"/><stop offset=".5875" stop-color="#950099"/><stop offset=".6292" stop-color="#99008b"/><stop offset=".7708" stop-color="#990064"/><stop offset="1" stop-color="#990042"/></linearGradient><linearGradient id="hd128"><stop offset="0" stop-color="#003999"/><stop offset=".2327" stop-color="#032399"/><stop offset=".5849" stop-color="#920099"/><stop offset=".6122" stop-color="#990094"/><stop offset=".7421" stop-color="#99006c"/><stop offset=".9518" stop-color="#990049"/><stop offset="1" stop-color="#990043"/></linearGradient><linearGradient id="hd129"><stop offset="0" stop-color="#003899"/><stop offset=".2316" stop-color="#032299"/><stop offset=".5811" stop-color="#8e0099"/><stop offset=".6147" stop-color="#990095"/><stop offset=".7453" stop-color="#99006c"/><stop offset=".9558" stop-color="#990049"/><stop offset="1" stop-color="#904"/></linearGradient><linearGradient id="hd130"><stop offset="0" stop-color="#003799"/><stop offset=".2309" stop-color="#032199"/><stop offset=".5805" stop-color="#8c0099"/><stop offset=".6208" stop-color="#990095"/><stop offset=".7542" stop-color="#99006c"/><stop offset=".9703" stop-color="#990049"/><stop offset="1" stop-color="#990046"/></linearGradient><linearGradient id="hd131"><stop offset="0" stop-color="#003699"/><stop offset=".2324" stop-color="#032199"/><stop offset=".5778" stop-color="#890099"/><stop offset=".6247" stop-color="#990096"/><stop offset=".7591" stop-color="#99006d"/><stop offset=".9744" stop-color="#99004a"/><stop offset="1" stop-color="#990047"/></linearGradient><linearGradient id="hd132"><stop offset="0" stop-color="#003599"/><stop offset=".2318" stop-color="#032099"/><stop offset=".5751" stop-color="#850099"/><stop offset=".6309" stop-color="#990096"/><stop offset=".7682" stop-color="#99006d"/><stop offset=".9893" stop-color="#990049"/><stop offset="1" stop-color="#990048"/></linearGradient><linearGradient id="hd133"><stop offset="0" stop-color="#003499"/><stop offset=".2311" stop-color="#031f99"/><stop offset=".5745" stop-color="#830099"/><stop offset=".6371" stop-color="#990096"/><stop offset=".7754" stop-color="#99006d"/><stop offset=".9978" stop-color="#99004a"/><stop offset="1" stop-color="#990049"/></linearGradient><linearGradient id="hd134"><stop offset="0" stop-color="#039"/><stop offset=".2321" stop-color="#031e99"/><stop offset=".5705" stop-color="#800099"/><stop offset=".6399" stop-color="#990096"/><stop offset=".7787" stop-color="#99006d"/><stop offset="1" stop-color="#99004a"/></linearGradient><linearGradient id="hd135"><stop offset="0" stop-color="#003299"/><stop offset=".2314" stop-color="#031e99"/><stop offset=".5677" stop-color="#7d0099"/><stop offset=".6463" stop-color="#990096"/><stop offset=".7882" stop-color="#99006d"/><stop offset="1" stop-color="#99004c"/></linearGradient><linearGradient id="hd136"><stop offset="0" stop-color="#003199"/><stop offset=".2308" stop-color="#031d99"/><stop offset=".567" stop-color="#7b0099"/><stop offset=".6527" stop-color="#990096"/><stop offset=".7978" stop-color="#99006d"/><stop offset="1" stop-color="#99004d"/></linearGradient><linearGradient id="hd137"><stop offset="0" stop-color="#003099"/><stop offset=".2323" stop-color="#031c99"/><stop offset=".5642" stop-color="#780099"/><stop offset=".6593" stop-color="#990096"/><stop offset=".8053" stop-color="#99006d"/><stop offset="1" stop-color="#99004e"/></linearGradient><linearGradient id="hd138"><stop offset="0" stop-color="#002f99"/><stop offset=".2311" stop-color="#031c99"/><stop offset=".5622" stop-color="#760099"/><stop offset=".6644" stop-color="#990096"/><stop offset=".8133" stop-color="#99006d"/><stop offset="1" stop-color="#99004f"/></linearGradient><linearGradient id="hd139"><stop offset="0" stop-color="#002e99"/><stop offset=".2304" stop-color="#031b99"/><stop offset=".5593" stop-color="#730099"/><stop offset=".6711" stop-color="#990096"/><stop offset=".821" stop-color="#99006d"/><stop offset="1" stop-color="#990051"/></linearGradient><linearGradient id="hd140"><stop offset="0" stop-color="#002e99"/><stop offset=".232" stop-color="#031a99"/><stop offset=".5563" stop-color="#700099"/><stop offset=".6757" stop-color="#990096"/><stop offset=".8266" stop-color="#99006e"/><stop offset="1" stop-color="#990052"/></linearGradient><linearGradient id="hd141"><stop offset="0" stop-color="#002d99"/><stop offset=".2313" stop-color="#031a99"/><stop offset=".5556" stop-color="#6e0099"/><stop offset=".6825" stop-color="#990096"/><stop offset=".8367" stop-color="#99006d"/><stop offset="1" stop-color="#990054"/></linearGradient><linearGradient id="hd142"><stop offset="0" stop-color="#002c99"/><stop offset=".2306" stop-color="#031999"/><stop offset=".5525" stop-color="#6b0099"/><stop offset=".6895" stop-color="#990096"/><stop offset=".847" stop-color="#99006d"/><stop offset="1" stop-color="#905"/></linearGradient><linearGradient id="hd143"><stop offset="0" stop-color="#002b99"/><stop offset=".2299" stop-color="#031899"/><stop offset=".5494" stop-color="#690099"/><stop offset=".6943" stop-color="#990096"/><stop offset=".8529" stop-color="#99006d"/><stop offset="1" stop-color="#990056"/></linearGradient><linearGradient id="hd144"><stop offset="0" stop-color="#002a99"/><stop offset=".2292" stop-color="#031899"/><stop offset=".5463" stop-color="#670099"/><stop offset=".7014" stop-color="#990096"/><stop offset=".8634" stop-color="#99006d"/><stop offset="1" stop-color="#990058"/></linearGradient><linearGradient id="hd145"><stop offset="0" stop-color="#002999"/><stop offset=".2284" stop-color="#031799"/><stop offset=".5431" stop-color="#640099"/><stop offset=".7086" stop-color="#990096"/><stop offset=".8718" stop-color="#99006d"/><stop offset="1" stop-color="#990059"/></linearGradient><linearGradient id="hd146"><stop offset="0" stop-color="#002899"/><stop offset=".23" stop-color="#031799"/><stop offset=".5423" stop-color="#630099"/><stop offset=".716" stop-color="#990096"/><stop offset=".8826" stop-color="#99006d"/><stop offset="1" stop-color="#99005a"/></linearGradient><linearGradient id="hd147"><stop offset="0" stop-color="#002899"/><stop offset=".2293" stop-color="#031699"/><stop offset=".539" stop-color="#600099"/><stop offset=".721" stop-color="#990096"/><stop offset=".8889" stop-color="#99006d"/><stop offset="1" stop-color="#99005c"/></linearGradient><linearGradient id="hd148"><stop offset="0" stop-color="#002799"/><stop offset=".228" stop-color="#031699"/><stop offset=".5368" stop-color="#5e0099"/><stop offset=".7268" stop-color="#990096"/><stop offset=".8979" stop-color="#99006d"/><stop offset="1" stop-color="#99005d"/></linearGradient><linearGradient id="hd149"><stop offset="0" stop-color="#002699"/><stop offset=".2297" stop-color="#031599"/><stop offset=".5335" stop-color="#5c0099"/><stop offset=".7344" stop-color="#990096"/><stop offset=".9067" stop-color="#99006d"/><stop offset="1" stop-color="#99005f"/></linearGradient><linearGradient id="hd150"><stop offset="0" stop-color="#002599"/><stop offset=".2289" stop-color="#031499"/><stop offset=".5301" stop-color="#5a0099"/><stop offset=".7422" stop-color="#990096"/><stop offset=".9181" stop-color="#99006d"/><stop offset="1" stop-color="#990060"/></linearGradient><linearGradient id="hd151"><stop offset="0" stop-color="#002499"/><stop offset=".2282" stop-color="#031499"/><stop offset=".5291" stop-color="#580099"/><stop offset=".75" stop-color="#990096"/><stop offset=".9296" stop-color="#99006d"/><stop offset="1" stop-color="#990062"/></linearGradient><linearGradient id="hd152"><stop offset="0" stop-color="#002499"/><stop offset=".2293" stop-color="#031399"/><stop offset=".5244" stop-color="#560099"/><stop offset=".7561" stop-color="#990096"/><stop offset=".9366" stop-color="#99006d"/><stop offset="1" stop-color="#990063"/></linearGradient><linearGradient id="hd153"><stop offset="0" stop-color="#002399"/><stop offset=".2285" stop-color="#031399"/><stop offset=".5233" stop-color="#540099"/><stop offset=".7641" stop-color="#990096"/><stop offset=".9484" stop-color="#99006d"/><stop offset="1" stop-color="#990065"/></linearGradient><linearGradient id="hd154"><stop offset="0" stop-color="#029"/><stop offset=".2277" stop-color="#031299"/><stop offset=".5198" stop-color="#520099"/><stop offset=".7698" stop-color="#990097"/><stop offset=".9554" stop-color="#99006d"/><stop offset="1" stop-color="#906"/></linearGradient><linearGradient id="hd155"><stop offset="0" stop-color="#002199"/><stop offset=".2294" stop-color="#031299"/><stop offset=".5187" stop-color="#500099"/><stop offset=".7781" stop-color="#990096"/><stop offset=".9651" stop-color="#99006d"/><stop offset="1" stop-color="#990068"/></linearGradient><linearGradient id="hd156"><stop offset="0" stop-color="#002199"/><stop offset=".2267" stop-color="#031199"/><stop offset=".5139" stop-color="#4e0099"/><stop offset=".7859" stop-color="#990096"/><stop offset=".9773" stop-color="#99006d"/><stop offset="1" stop-color="#99006a"/></linearGradient><linearGradient id="hd157"><stop offset="0" stop-color="#002099"/><stop offset=".2253" stop-color="#031199"/><stop offset=".5114" stop-color="#4d0099"/><stop offset=".7924" stop-color="#990096"/><stop offset=".9873" stop-color="#99006d"/><stop offset="1" stop-color="#99006b"/></linearGradient><linearGradient id="hd158"><stop offset="0" stop-color="#001f99"/><stop offset=".227" stop-color="#031099"/><stop offset=".5077" stop-color="#4b0099"/><stop offset=".801" stop-color="#990096"/><stop offset=".9974" stop-color="#99006d"/><stop offset="1" stop-color="#99006d"/></linearGradient><linearGradient id="hd159"><stop offset="0" stop-color="#001f99"/><stop offset=".2262" stop-color="#031099"/><stop offset=".5064" stop-color="#490099"/><stop offset=".8098" stop-color="#990096"/><stop offset="1" stop-color="#99006e"/></linearGradient><linearGradient id="hd160"><stop offset="0" stop-color="#001e99"/><stop offset=".2254" stop-color="#030f99"/><stop offset=".5026" stop-color="#470099"/><stop offset=".8187" stop-color="#990096"/><stop offset="1" stop-color="#990070"/></linearGradient><linearGradient id="hd161"><stop offset="0" stop-color="#001d99"/><stop offset=".2266" stop-color="#030f99"/><stop offset=".5" stop-color="#460099"/><stop offset=".8229" stop-color="#990097"/><stop offset="1" stop-color="#990072"/></linearGradient><linearGradient id="hd162"><stop offset="0" stop-color="#001d99"/><stop offset=".2257" stop-color="#030e99"/><stop offset=".4961" stop-color="#409"/><stop offset=".832" stop-color="#990096"/><stop offset="1" stop-color="#990073"/></linearGradient><linearGradient id="hd163"><stop offset="0" stop-color="#001c99"/><stop offset=".2249" stop-color="#030e99"/><stop offset=".4947" stop-color="#430099"/><stop offset=".8413" stop-color="#990096"/><stop offset="1" stop-color="#990075"/></linearGradient><linearGradient id="hd164"><stop offset="0" stop-color="#001b99"/><stop offset=".2267" stop-color="#030d99"/><stop offset=".4907" stop-color="#410099"/><stop offset=".8507" stop-color="#990096"/><stop offset="1" stop-color="#907"/></linearGradient><linearGradient id="hd165"><stop offset="0" stop-color="#001a99"/><stop offset=".2237" stop-color="#030d99"/><stop offset=".4879" stop-color="#3f0099"/><stop offset=".8598" stop-color="#990096"/><stop offset="1" stop-color="#990079"/></linearGradient><linearGradient id="hd166"><stop offset="0" stop-color="#001a99"/><stop offset=".2222" stop-color="#030d99"/><stop offset=".4851" stop-color="#3e0099"/><stop offset=".8672" stop-color="#990096"/><stop offset="1" stop-color="#99007b"/></linearGradient><linearGradient id="hd167"><stop offset="0" stop-color="#001999"/><stop offset=".224" stop-color="#030c99"/><stop offset=".4809" stop-color="#3c0099"/><stop offset=".877" stop-color="#990096"/><stop offset="1" stop-color="#99007d"/></linearGradient><linearGradient id="hd168"><stop offset="0" stop-color="#001999"/><stop offset=".2231" stop-color="#030c99"/><stop offset=".4793" stop-color="#3b0099"/><stop offset=".8871" stop-color="#990096"/><stop offset="1" stop-color="#99007f"/></linearGradient><linearGradient id="hd169"><stop offset="0" stop-color="#001899"/><stop offset=".2222" stop-color="#030b99"/><stop offset=".475" stop-color="#390099"/><stop offset=".8944" stop-color="#990096"/><stop offset="1" stop-color="#990081"/></linearGradient><linearGradient id="hd170"><stop offset="0" stop-color="#001799"/><stop offset=".2235" stop-color="#030b99"/><stop offset=".4721" stop-color="#380099"/><stop offset=".9022" stop-color="#990096"/><stop offset="1" stop-color="#990082"/></linearGradient><linearGradient id="hd171"><stop offset="0" stop-color="#001799"/><stop offset=".2225" stop-color="#030a99"/><stop offset=".4704" stop-color="#370099"/><stop offset=".9127" stop-color="#990096"/><stop offset="1" stop-color="#990084"/></linearGradient><linearGradient id="hd172"><stop offset="0" stop-color="#001699"/><stop offset=".2194" stop-color="#030a99"/><stop offset=".4672" stop-color="#360099"/><stop offset=".9231" stop-color="#990096"/><stop offset="1" stop-color="#990086"/></linearGradient><linearGradient id="hd173"><stop offset="0" stop-color="#001699"/><stop offset=".2213" stop-color="#030999"/><stop offset=".4655" stop-color="#350099"/><stop offset=".9339" stop-color="#990096"/><stop offset="1" stop-color="#990089"/></linearGradient><linearGradient id="hd174"><stop offset="0" stop-color="#001599"/><stop offset=".2203" stop-color="#030999"/><stop offset=".4638" stop-color="#340099"/><stop offset=".9449" stop-color="#990096"/><stop offset="1" stop-color="#99008b"/></linearGradient><linearGradient id="hd175"><stop offset="0" stop-color="#001499"/><stop offset=".2187" stop-color="#030999"/><stop offset=".4606" stop-color="#309"/><stop offset=".9534" stop-color="#990096"/><stop offset="1" stop-color="#99008c"/></linearGradient><linearGradient id="hd176"><stop offset="0" stop-color="#001499"/><stop offset=".2206" stop-color="#030899"/><stop offset=".4588" stop-color="#310099"/><stop offset=".9618" stop-color="#990097"/><stop offset="1" stop-color="#99008f"/></linearGradient><linearGradient id="hd177"><stop offset="0" stop-color="#001399"/><stop offset=".2173" stop-color="#030899"/><stop offset=".4554" stop-color="#300099"/><stop offset=".9732" stop-color="#990096"/><stop offset="1" stop-color="#990091"/></linearGradient><linearGradient id="hd178"><stop offset="0" stop-color="#001399"/><stop offset=".2162" stop-color="#030899"/><stop offset=".4535" stop-color="#2f0099"/><stop offset=".985" stop-color="#990096"/><stop offset="1" stop-color="#990093"/></linearGradient><linearGradient id="hd179"><stop offset="0" stop-color="#001299"/><stop offset=".2175" stop-color="#030799"/><stop offset=".4532" stop-color="#2f0099"/><stop offset=".994" stop-color="#990096"/><stop offset="1" stop-color="#990095"/></linearGradient><linearGradient id="hd180"><stop offset="0" stop-color="#001299"/><stop offset=".2165" stop-color="#030799"/><stop offset=".4543" stop-color="#2e0099"/><stop offset="1" stop-color="#990097"/></linearGradient><linearGradient id="hd181"><stop offset="0" stop-color="#019"/><stop offset=".2154" stop-color="#030699"/><stop offset=".4554" stop-color="#2e0099"/><stop offset="1" stop-color="#980099"/></linearGradient><linearGradient id="hd182"><stop offset="0" stop-color="#001099"/><stop offset=".215" stop-color="#030699"/><stop offset=".4548" stop-color="#2e0099"/><stop offset="1" stop-color="#960099"/></linearGradient><linearGradient id="hd183"><stop offset="0" stop-color="#001099"/><stop offset=".2138" stop-color="#030699"/><stop offset=".4591" stop-color="#2e0099"/><stop offset="1" stop-color="#930099"/></linearGradient><linearGradient id="hd184"><stop offset="0" stop-color="#000f99"/><stop offset=".212" stop-color="#030599"/><stop offset=".4652" stop-color="#2e0099"/><stop offset="1" stop-color="#920099"/></linearGradient><linearGradient id="hd185"><stop offset="0" stop-color="#000f99"/><stop offset=".2141" stop-color="#030599"/><stop offset=".4792" stop-color="#300099"/><stop offset="1" stop-color="#8f0099"/></linearGradient><linearGradient id="hd186"><stop offset="0" stop-color="#000e99"/><stop offset=".2129" stop-color="#030599"/><stop offset=".4935" stop-color="#320099"/><stop offset="1" stop-color="#8d0099"/></linearGradient><linearGradient id="hd187"><stop offset="0" stop-color="#000e99"/><stop offset=".2124" stop-color="#030499"/><stop offset=".5294" stop-color="#370099"/><stop offset="1" stop-color="#8b0099"/></linearGradient><linearGradient id="hd188"><stop offset="0" stop-color="#000d99"/><stop offset=".2105" stop-color="#030499"/><stop offset=".5888" stop-color="#410099"/><stop offset="1" stop-color="#890099"/></linearGradient><linearGradient id="hd189"><stop offset="0" stop-color="#000d99"/><stop offset=".2093" stop-color="#030499"/><stop offset=".6877" stop-color="#510099"/><stop offset="1" stop-color="#870099"/></linearGradient><linearGradient id="hd190"><stop offset="0" stop-color="#000c99"/><stop offset=".2088" stop-color="#030399"/><stop offset="1" stop-color="#850099"/></linearGradient><linearGradient id="hd191"><stop offset="0" stop-color="#000c99"/><stop offset=".2075" stop-color="#030399"/><stop offset="1" stop-color="#830099"/></linearGradient><linearGradient id="hd192"><stop offset="0" stop-color="#000b99"/><stop offset=".2062" stop-color="#030399"/><stop offset="1" stop-color="#800099"/></linearGradient><linearGradient id="hd193"><stop offset="0" stop-color="#000b99"/><stop offset=".2076" stop-color="#030299"/><stop offset="1" stop-color="#7f0099"/></linearGradient><linearGradient id="hd194"><stop offset="0" stop-color="#000a99"/><stop offset=".2035" stop-color="#030299"/><stop offset="1" stop-color="#7d0099"/></linearGradient><linearGradient id="hd195"><stop offset="0" stop-color="#000a99"/><stop offset=".2021" stop-color="#030299"/><stop offset="1" stop-color="#7b0099"/></linearGradient><linearGradient id="hd196"><stop offset="0" stop-color="#000999"/><stop offset=".2043" stop-color="#030199"/><stop offset="1" stop-color="#790099"/></linearGradient><linearGradient id="hd197"><stop offset="0" stop-color="#000999"/><stop offset=".1993" stop-color="#030199"/><stop offset="1" stop-color="#709"/></linearGradient><linearGradient id="hd198"><stop offset="0" stop-color="#000899"/><stop offset=".1978" stop-color="#030199"/><stop offset="1" stop-color="#750099"/></linearGradient><linearGradient id="hd199"><stop offset="0" stop-color="#000899"/><stop offset=".2" stop-color="#030099"/><stop offset="1" stop-color="#740099"/></linearGradient><linearGradient id="hd200"><stop offset="0" stop-color="#000799"/><stop offset=".1955" stop-color="#030099"/><stop offset="1" stop-color="#720099"/></linearGradient><linearGradient id="hd201"><stop offset="0" stop-color="#000799"/><stop offset=".1977" stop-color="#040099"/><stop offset="1" stop-color="#700099"/></linearGradient><linearGradient id="hd202"><stop offset="0" stop-color="#000699"/><stop offset=".1954" stop-color="#030099"/><stop offset="1" stop-color="#6e0099"/></linearGradient><linearGradient id="hd203"><stop offset="0" stop-color="#000699"/><stop offset=".1907" stop-color="#030099"/><stop offset="1" stop-color="#6d0099"/></linearGradient><linearGradient id="hd204"><stop offset="0" stop-color="#000599"/><stop offset=".1929" stop-color="#040099"/><stop offset="1" stop-color="#6b0099"/></linearGradient><linearGradient id="hd205"><stop offset="0" stop-color="#000599"/><stop offset=".1912" stop-color="#030099"/><stop offset="1" stop-color="#690099"/></linearGradient><linearGradient id="hd206"><stop offset="0" stop-color="#000599"/><stop offset=".1855" stop-color="#030099"/><stop offset="1" stop-color="#680099"/></linearGradient><linearGradient id="hd207"><stop offset="0" stop-color="#000499"/><stop offset=".1878" stop-color="#040099"/><stop offset="1" stop-color="#609"/></linearGradient><linearGradient id="hd208"><stop offset="0" stop-color="#000499"/><stop offset=".1826" stop-color="#030099"/><stop offset="1" stop-color="#640099"/></linearGradient><linearGradient id="hd209"><stop offset="0" stop-color="#000399"/><stop offset=".1849" stop-color="#040099"/><stop offset="1" stop-color="#620099"/></linearGradient><linearGradient id="hd210"><stop offset="0" stop-color="#000399"/><stop offset=".1795" stop-color="#040099"/><stop offset="1" stop-color="#610099"/></linearGradient><linearGradient id="hd211"><stop offset="0" stop-color="#000299"/><stop offset=".181" stop-color="#040099"/><stop offset="1" stop-color="#600099"/></linearGradient><linearGradient id="hd212"><stop offset="0" stop-color="#000299"/><stop offset=".179" stop-color="#040099"/><stop offset="1" stop-color="#5e0099"/></linearGradient><linearGradient id="hd213"><stop offset="0" stop-color="#000199"/><stop offset=".1733" stop-color="#040099"/><stop offset="1" stop-color="#5c0099"/></linearGradient><linearGradient id="hd214"><stop offset="0" stop-color="#000199"/><stop offset=".1757" stop-color="#040099"/><stop offset="1" stop-color="#5b0099"/></linearGradient><linearGradient id="hd215"><stop offset="0" stop-color="#000199"/><stop offset=".1689" stop-color="#040099"/><stop offset="1" stop-color="#5a0099"/></linearGradient><linearGradient id="hd216"><stop offset="0" stop-color="#009"/><stop offset=".1713" stop-color="#040099"/><stop offset="1" stop-color="#580099"/></linearGradient><linearGradient id="hd217"><stop offset="0" stop-color="#009"/><stop offset=".1651" stop-color="#040099"/><stop offset="1" stop-color="#560099"/></linearGradient><linearGradient id="hd218"><stop offset="0" stop-color="#009"/><stop offset=".1675" stop-color="#040099"/><stop offset="1" stop-color="#509"/></linearGradient><linearGradient id="hd219"><stop offset="0" stop-color="#009"/><stop offset=".161" stop-color="#040099"/><stop offset="1" stop-color="#530099"/></linearGradient><linearGradient id="hd220"><stop offset="0" stop-color="#009"/><stop offset=".1626" stop-color="#040099"/><stop offset="1" stop-color="#520099"/></linearGradient><linearGradient id="hd221"><stop offset="0" stop-color="#009"/><stop offset=".1608" stop-color="#050099"/><stop offset="1" stop-color="#510099"/></linearGradient><linearGradient id="hd222"><stop offset="0" stop-color="#009"/><stop offset=".1538" stop-color="#040099"/><stop offset="1" stop-color="#4f0099"/></linearGradient><linearGradient id="hd223"><stop offset="0" stop-color="#009"/><stop offset=".1562" stop-color="#050099"/><stop offset="1" stop-color="#4e0099"/></linearGradient><linearGradient id="hd224"><stop offset="0" stop-color="#009"/><stop offset=".1534" stop-color="#050099"/><stop offset="1" stop-color="#4d0099"/></linearGradient><linearGradient id="hd225"><stop offset="0" stop-color="#009"/><stop offset=".1559" stop-color="#050099"/><stop offset="1" stop-color="#4b0099"/></linearGradient><linearGradient id="hd226"><stop offset="0" stop-color="#009"/><stop offset=".1538" stop-color="#050099"/><stop offset="1" stop-color="#4a0099"/></linearGradient><linearGradient id="hd227"><stop offset="0" stop-color="#009"/><stop offset=".1629" stop-color="#070099"/><stop offset="1" stop-color="#490099"/></linearGradient><linearGradient id="hd228"><stop offset="0" stop-color="#009"/><stop offset=".1657" stop-color="#070099"/><stop offset="1" stop-color="#470099"/></linearGradient><linearGradient id="hd229"><stop offset="0" stop-color="#009"/><stop offset=".1802" stop-color="#080099"/><stop offset="1" stop-color="#460099"/></linearGradient><linearGradient id="hd230"><stop offset="0" stop-color="#009"/><stop offset=".25" stop-color="#0e0099"/><stop offset="1" stop-color="#450099"/></linearGradient><linearGradient id="hd231"><stop offset="0" stop-color="#009"/><stop offset=".6524" stop-color="#2a0099"/><stop offset="1" stop-color="#430099"/></linearGradient><linearGradient id="hd232"><stop offset="0" stop-color="#009"/><stop offset="1" stop-color="#420099"/></linearGradient><linearGradient id="hd233"><stop offset="0" stop-color="#009"/><stop offset="1" stop-color="#410099"/></linearGradient><linearGradient id="hd234"><stop offset="0" stop-color="#009"/><stop offset="1" stop-color="#400099"/></linearGradient><linearGradient id="hd235"><stop offset="0" stop-color="#009"/><stop offset="1" stop-color="#3f0099"/></linearGradient><linearGradient id="hd236"><stop offset="0" stop-color="#009"/><stop offset="1" stop-color="#3d0099"/></linearGradient><linearGradient id="hd237"><stop offset="0" stop-color="#010099"/><stop offset="1" stop-color="#3c0099"/></linearGradient><linearGradient id="hd238"><stop offset="0" stop-color="#010099"/><stop offset="1" stop-color="#3b0099"/></linearGradient><linearGradient id="hd239"><stop offset="0" stop-color="#020099"/><stop offset="1" stop-color="#3a0099"/></linearGradient><linearGradient id="hd240"><stop offset="0" stop-color="#030099"/><stop offset="1" stop-color="#390099"/></linearGradient><linearGradient id="hd241"><stop offset="0" stop-color="#030099"/><stop offset="1" stop-color="#380099"/></linearGradient><linearGradient id="hd242"><stop offset="0" stop-color="#040099"/><stop offset="1" stop-color="#370099"/></linearGradient><linearGradient id="hd243"><stop offset="0" stop-color="#050099"/><stop offset="1" stop-color="#360099"/></linearGradient><linearGradient id="hd244"><stop offset="0" stop-color="#050099"/><stop offset="1" stop-color="#340099"/></linearGradient><linearGradient id="hd245"><stop offset="0" stop-color="#060099"/><stop offset="1" stop-color="#309"/></linearGradient><linearGradient id="hd246"><stop offset="0" stop-color="#070099"/><stop offset="1" stop-color="#320099"/></linearGradient><linearGradient id="hd247"><stop offset="0" stop-color="#070099"/><stop offset="1" stop-color="#310099"/></linearGradient><linearGradient id="hd248"><stop offset="0" stop-color="#080099"/><stop offset="1" stop-color="#300099"/></linearGradient><linearGradient id="hd249"><stop offset="0" stop-color="#090099"/><stop offset="1" stop-color="#2f0099"/></linearGradient><linearGradient id="hd250"><stop offset="0" stop-color="#0a0099"/><stop offset="1" stop-color="#2e0099"/></linearGradient><linearGradient id="hd251"><stop offset="0" stop-color="#0a0099"/><stop offset="1" stop-color="#2d0099"/></linearGradient><linearGradient id="hd252"><stop offset="0" stop-color="#0b0099"/><stop offset="1" stop-color="#2c0099"/></linearGradient><linearGradient id="hd253"><stop offset="0" stop-color="#0b0099"/><stop offset="1" stop-color="#2b0099"/></linearGradient><linearGradient id="hd254"><stop offset="0" stop-color="#0c0099"/><stop offset="1" stop-color="#2a0099"/></linearGradient><linearGradient id="hd255"><stop offset="0" stop-color="#0d0099"/><stop offset="1" stop-color="#290099"/></linearGradient><linearGradient id="hd256"><stop offset="0" stop-color="#0e0099"/><stop offset="1" stop-color="#280099"/></linearGradient><linearGradient id="hd257"><stop offset="0" stop-color="#0e0099"/><stop offset="1" stop-color="#270099"/></linearGradient><linearGradient id="hd258"><stop offset="0" stop-color="#0f0099"/><stop offset="1" stop-color="#260099"/></linearGradient><linearGradient id="hd259"><stop offset="0" stop-color="#100099"/><stop offset="1" stop-color="#250099"/></linearGradient><linearGradient id="hd260"><stop offset="0" stop-color="#100099"/><stop offset="1" stop-color="#240099"/></linearGradient><linearGradient id="hd261"><stop offset="0" stop-color="#109"/><stop offset="1" stop-color="#230099"/></linearGradient><linearGradient id="hd262"><stop offset="0" stop-color="#109"/><stop offset="1" stop-color="#209"/></linearGradient><linearGradient id="hd263"><stop offset="0" stop-color="#120099"/><stop offset="1" stop-color="#210099"/></linearGradient><linearGradient id="hd264"><stop offset="0" stop-color="#120099"/><stop offset="1" stop-color="#200099"/></linearGradient><linearGradient id="hd265"><stop offset="0" stop-color="#130099"/><stop offset="1" stop-color="#200099"/></linearGradient><linearGradient id="hd266"><stop offset="0" stop-color="#140099"/><stop offset="1" stop-color="#1f0099"/></linearGradient><linearGradient id="hd267"><stop offset="0" stop-color="#140099"/><stop offset="1" stop-color="#1e0099"/></linearGradient><linearGradient id="hd268"><stop offset="0" stop-color="#150099"/><stop offset="1" stop-color="#1d0099"/></linearGradient><linearGradient id="hd269"><stop offset="0" stop-color="#160099"/><stop offset="1" stop-color="#1c0099"/></linearGradient><linearGradient id="hd270"><stop offset="0" stop-color="#160099"/><stop offset="1" stop-color="#1b0099"/></linearGradient><linearGradient id="hd271"><stop offset="0" stop-color="#170099"/><stop offset="1" stop-color="#1a0099"/></linearGradient><linearGradient id="hb0"><stop offset="0" stop-color="#0f0"/><stop offset="1" stop-color="#04ff00"/></linearGradient><linearGradient id="hb1"><stop offset="0" stop-color="#00ff02"/><stop offset=".3913" stop-color="#10ff00"/><stop offset="1" stop-color="#32ff00"/></linearGradient><linearGradient id="hb2"><stop offset="0" stop-color="#00ff06"/><stop offset=".1429" stop-color="#09ff05"/><stop offset="1" stop-color="#63ff00"/></linearGradient><linearGradient id="hb3"><stop offset="0" stop-color="#00ff0a"/><stop offset=".4426" stop-color="#3dff05"/><stop offset="1" stop-color="#9dff00"/></linearGradient><linearGradient id="hb4"><stop offset="0" stop-color="#00ff0d"/><stop offset=".1375" stop-color="#16ff0c"/><stop offset=".6375" stop-color="#7fff04"/><stop offset="1" stop-color="#dcff00"/></linearGradient><linearGradient id="hb5"><stop offset="0" stop-color="#0f1"/><stop offset=".06" stop-color="#09ff10"/><stop offset=".47" stop-color="#73ff09"/><stop offset=".82" stop-color="#e3ff02"/><stop offset=".9" stop-color="#fffe00"/><stop offset="1" stop-color="#ffdc00"/></linearGradient><linearGradient id="hb6"><stop offset="0" stop-color="#00ff15"/><stop offset=".2458" stop-color="#4f1"/><stop offset=".5593" stop-color="#b0ff0a"/><stop offset=".7542" stop-color="#fffd05"/><stop offset=".9153" stop-color="#ffc300"/><stop offset="1" stop-color="#ffac00"/></linearGradient><linearGradient id="hb7"><stop offset="0" stop-color="#00ff19"/><stop offset=".1014" stop-color="#1eff17"/><stop offset=".3841" stop-color="#87ff11"/><stop offset=".6449" stop-color="#fffc0a"/><stop offset=".7826" stop-color="#ffc204"/><stop offset=".971" stop-color="#ff8e00"/><stop offset="1" stop-color="#ff8700"/></linearGradient><linearGradient id="hb8"><stop offset="0" stop-color="#00ff1d"/><stop offset=".0443" stop-color="#0cff1c"/><stop offset=".2975" stop-color="#75ff16"/><stop offset=".5127" stop-color="#e5ff10"/><stop offset=".5633" stop-color="#fffc0f"/><stop offset=".6835" stop-color="#ffc108"/><stop offset=".8481" stop-color="#ff8d02"/><stop offset="1" stop-color="#ff6c00"/></linearGradient><linearGradient id="hb9"><stop offset="0" stop-color="#00ff21"/><stop offset=".0282" stop-color="#07ff21"/><stop offset=".2542" stop-color="#6fff1b"/><stop offset=".4463" stop-color="#deff16"/><stop offset=".4972" stop-color="#ffff14"/><stop offset=".6045" stop-color="#ffc30c"/><stop offset=".7514" stop-color="#ff8e06"/><stop offset=".9605" stop-color="#ff5e00"/><stop offset="1" stop-color="#ff5800"/></linearGradient><linearGradient id="hb10"><stop offset="0" stop-color="#00ff25"/><stop offset=".0918" stop-color="#28ff23"/><stop offset=".2857" stop-color="#94ff1e"/><stop offset=".4439" stop-color="#fffe19"/><stop offset=".5408" stop-color="#ffc311"/><stop offset=".6735" stop-color="#ff8d09"/><stop offset=".8622" stop-color="#ff5e02"/><stop offset="1" stop-color="#ff4700"/></linearGradient><linearGradient id="hb11"><stop offset="0" stop-color="#00ff29"/><stop offset=".0372" stop-color="#0fff28"/><stop offset=".2186" stop-color="#78ff24"/><stop offset=".3721" stop-color="#e6ff20"/><stop offset=".4047" stop-color="#fffd1e"/><stop offset=".493" stop-color="#ffc215"/><stop offset=".614" stop-color="#ff8d0c"/><stop offset=".786" stop-color="#ff5d05"/><stop offset="1" stop-color="#ff3900"/></linearGradient><linearGradient id="hb12"><stop offset="0" stop-color="#00ff2d"/><stop offset=".0213" stop-color="#07ff2d"/><stop offset=".1872" stop-color="#6fff29"/><stop offset=".3277" stop-color="#dcff25"/><stop offset=".3702" stop-color="#fffd24"/><stop offset=".4468" stop-color="#ffc41a"/><stop offset=".5532" stop-color="#ff8f10"/><stop offset=".7064" stop-color="#ff6008"/><stop offset=".9362" stop-color="#ff3600"/><stop offset="1" stop-color="#ff2e00"/></linearGradient><linearGradient id="hb13"><stop offset="0" stop-color="#00ff32"/><stop offset=".0949" stop-color="#39ff30"/><stop offset=".2372" stop-color="#a4ff2c"/><stop offset=".3399" stop-color="#fffc29"/><stop offset=".4111" stop-color="#ffc31e"/><stop offset=".5099" stop-color="#ff8e14"/><stop offset=".6522" stop-color="#ff5f0a"/><stop offset=".8656" stop-color="#ff3502"/><stop offset="1" stop-color="#ff2400"/></linearGradient><linearGradient id="hb14"><stop offset="0" stop-color="#00ff36"/><stop offset=".033" stop-color="#12ff35"/><stop offset=".1722" stop-color="#7bff32"/><stop offset=".293" stop-color="#ebff2f"/><stop offset=".3114" stop-color="#ffff2f"/><stop offset=".381" stop-color="#ffc222"/><stop offset=".4725" stop-color="#ff8e17"/><stop offset=".6044" stop-color="#ff5e0d"/><stop offset=".8022" stop-color="#ff3504"/><stop offset="1" stop-color="#ff1c00"/></linearGradient><linearGradient id="hb15"><stop offset="0" stop-color="#00ff3a"/><stop offset=".0205" stop-color="#0aff3a"/><stop offset=".1541" stop-color="#74ff37"/><stop offset=".2671" stop-color="#e4ff35"/><stop offset=".2911" stop-color="#ffff34"/><stop offset=".3527" stop-color="#ffc427"/><stop offset=".4384" stop-color="#ff8f1b"/><stop offset=".5582" stop-color="#ff6010"/><stop offset=".7397" stop-color="#ff3607"/><stop offset="1" stop-color="#ff1400"/></linearGradient><linearGradient id="hb16"><stop offset="0" stop-color="#00ff3e"/><stop offset=".016" stop-color="#07ff3e"/><stop offset=".141" stop-color="#71ff3c"/><stop offset=".2468" stop-color="#e1ff3b"/><stop offset=".2724" stop-color="#fffe3a"/><stop offset=".3301" stop-color="#ffc32c"/><stop offset=".4103" stop-color="#ff8e1e"/><stop offset=".5224" stop-color="#ff5f13"/><stop offset=".6923" stop-color="#ff3509"/><stop offset=".9615" stop-color="#ff1200"/><stop offset="1" stop-color="#ff0e00"/></linearGradient><linearGradient id="hb17"><stop offset="0" stop-color="#00ff43"/><stop offset=".0363" stop-color="#1aff42"/><stop offset=".148" stop-color="#84ff41"/><stop offset=".2447" stop-color="#f5ff40"/><stop offset=".2568" stop-color="#fff93e"/><stop offset=".3112" stop-color="#ffc02f"/><stop offset=".3867" stop-color="#ff8c22"/><stop offset=".4955" stop-color="#ff5c15"/><stop offset=".6586" stop-color="#ff330a"/><stop offset=".9184" stop-color="#ff1001"/><stop offset="1" stop-color="#ff0800"/></linearGradient><linearGradient id="hb18"><stop offset="0" stop-color="#00ff47"/><stop offset=".0171" stop-color="#0aff47"/><stop offset=".1257" stop-color="#74ff46"/><stop offset=".2171" stop-color="#e2ff46"/><stop offset=".24" stop-color="#fffd45"/><stop offset=".2914" stop-color="#ffc234"/><stop offset=".3629" stop-color="#ff8d26"/><stop offset=".4629" stop-color="#ff5e19"/><stop offset=".6143" stop-color="#ff340d"/><stop offset=".8571" stop-color="#ff1003"/><stop offset="1" stop-color="#ff0300"/></linearGradient><linearGradient id="hb19"><stop offset="0" stop-color="#00ff4c"/><stop offset=".0137" stop-color="#07ff4c"/><stop offset=".1175" stop-color="#71ff4b"/><stop offset=".2049" stop-color="#dfff4b"/><stop offset=".2295" stop-color="#fffc4a"/><stop offset=".2787" stop-color="#ffc139"/><stop offset=".347" stop-color="#ff8c29"/><stop offset=".4426" stop-color="#ff5d1b"/><stop offset=".5874" stop-color="#ff340f"/><stop offset=".8197" stop-color="#ff1004"/><stop offset="1" stop-color="#f00"/></linearGradient><linearGradient id="hb20"><stop offset="0" stop-color="#00ff50"/><stop offset=".0412" stop-color="#23ff50"/><stop offset=".1401" stop-color="#8dff51"/><stop offset=".2253" stop-color="#ffff51"/><stop offset=".2747" stop-color="#ffc33e"/><stop offset=".3407" stop-color="#ff8f2e"/><stop offset=".4341" stop-color="#ff601f"/><stop offset=".5742" stop-color="#ff3612"/><stop offset=".7967" stop-color="#ff1207"/><stop offset="1" stop-color="#ff0001"/></linearGradient><linearGradient id="hb21"><stop offset="0" stop-color="#0f5"/><stop offset=".0193" stop-color="#0dff55"/><stop offset=".1215" stop-color="#77ff56"/><stop offset=".2072" stop-color="#e4ff57"/><stop offset=".2265" stop-color="#fffe57"/><stop offset=".2735" stop-color="#ffc544"/><stop offset=".3398" stop-color="#ff9032"/><stop offset=".4337" stop-color="#ff6022"/><stop offset=".5746" stop-color="#ff3614"/><stop offset=".7983" stop-color="#ff1208"/><stop offset="1" stop-color="#ff0002"/></linearGradient><linearGradient id="hb22"><stop offset="0" stop-color="#00ff59"/><stop offset=".0139" stop-color="#08ff5a"/><stop offset=".1163" stop-color="#70ff5b"/><stop offset=".205" stop-color="#e0ff5d"/><stop offset=".2271" stop-color="#fffe5d"/><stop offset=".2742" stop-color="#ffc449"/><stop offset=".3407" stop-color="#ff8f36"/><stop offset=".4349" stop-color="#ff5f25"/><stop offset=".5762" stop-color="#ff3616"/><stop offset=".8006" stop-color="#ff120a"/><stop offset="1" stop-color="#ff0003"/></linearGradient><linearGradient id="hb23"><stop offset="0" stop-color="#00ff5e"/><stop offset=".0559" stop-color="#32ff5f"/><stop offset=".1536" stop-color="#9eff61"/><stop offset=".2263" stop-color="#fffd62"/><stop offset=".2737" stop-color="#ffc44d"/><stop offset=".3408" stop-color="#ff8e39"/><stop offset=".4358" stop-color="#ff5f28"/><stop offset=".5782" stop-color="#ff3519"/><stop offset=".8045" stop-color="#ff110b"/><stop offset="1" stop-color="#ff0005"/></linearGradient><linearGradient id="hb24"><stop offset="0" stop-color="#00ff63"/><stop offset=".0225" stop-color="#11ff63"/><stop offset=".1236" stop-color="#79ff66"/><stop offset=".2107" stop-color="#e9ff69"/><stop offset=".2275" stop-color="#fffc68"/><stop offset=".2753" stop-color="#ffc352"/><stop offset=".3427" stop-color="#ff8d3d"/><stop offset=".4382" stop-color="#ff5e2b"/><stop offset=".5815" stop-color="#ff341b"/><stop offset=".809" stop-color="#ff110d"/><stop offset="1" stop-color="#ff0006"/></linearGradient><linearGradient id="hb25"><stop offset="0" stop-color="#00ff68"/><stop offset=".0141" stop-color="#08ff68"/><stop offset=".1158" stop-color="#6fff6b"/><stop offset=".2034" stop-color="#deff6f"/><stop offset=".226" stop-color="#feff6f"/><stop offset=".2768" stop-color="#ffc257"/><stop offset=".3446" stop-color="#ff8d41"/><stop offset=".4407" stop-color="#ff5d2e"/><stop offset=".5847" stop-color="#ff341d"/><stop offset=".8136" stop-color="#ff100e"/><stop offset="1" stop-color="#ff0008"/></linearGradient><linearGradient id="hb26"><stop offset="0" stop-color="#00ff6c"/><stop offset=".0142" stop-color="#07ff6d"/><stop offset=".1165" stop-color="#6fff71"/><stop offset=".2045" stop-color="#deff75"/><stop offset=".2273" stop-color="#ffff76"/><stop offset=".2756" stop-color="#ffc45d"/><stop offset=".3409" stop-color="#ff9046"/><stop offset=".4347" stop-color="#ff6032"/><stop offset=".5739" stop-color="#ff3620"/><stop offset=".7955" stop-color="#ff1311"/><stop offset="1" stop-color="#ff0009"/></linearGradient><linearGradient id="hb27"><stop offset="0" stop-color="#00ff71"/><stop offset=".0286" stop-color="#17ff73"/><stop offset=".1286" stop-color="#7fff77"/><stop offset=".2143" stop-color="#efff7c"/><stop offset=".2257" stop-color="#fffe7c"/><stop offset=".2743" stop-color="#ffc362"/><stop offset=".34" stop-color="#ff8f4a"/><stop offset=".4343" stop-color="#ff5f35"/><stop offset=".5743" stop-color="#ff3623"/><stop offset=".7971" stop-color="#ff1213"/><stop offset="1" stop-color="#ff000a"/></linearGradient><linearGradient id="hb28"><stop offset="0" stop-color="#00ff76"/><stop offset=".0172" stop-color="#0bff77"/><stop offset=".1207" stop-color="#75ff7c"/><stop offset=".2069" stop-color="#e3ff81"/><stop offset=".227" stop-color="#fffe82"/><stop offset=".2759" stop-color="#ffc367"/><stop offset=".342" stop-color="#ff8e4e"/><stop offset=".4368" stop-color="#ff5f38"/><stop offset=".5776" stop-color="#ff3525"/><stop offset=".8046" stop-color="#ff1114"/><stop offset="1" stop-color="#ff000c"/></linearGradient><linearGradient id="hb29"><stop offset="0" stop-color="#00ff7b"/><stop offset=".0116" stop-color="#05ff7c"/><stop offset=".1156" stop-color="#6fff82"/><stop offset=".2023" stop-color="#dcff87"/><stop offset=".2283" stop-color="#fffd88"/><stop offset=".2775" stop-color="#ffc26b"/><stop offset=".3439" stop-color="#ff8d52"/><stop offset=".4393" stop-color="#ff5e3b"/><stop offset=".5809" stop-color="#ff3527"/><stop offset=".8092" stop-color="#ff1116"/><stop offset="1" stop-color="#ff000d"/></linearGradient><linearGradient id="hb30"><stop offset="0" stop-color="#00ff81"/><stop offset=".0379" stop-color="#20ff83"/><stop offset=".137" stop-color="#89ff89"/><stop offset=".2216" stop-color="#f9ff8f"/><stop offset=".2332" stop-color="#fff48a"/><stop offset=".2828" stop-color="#ffbb6e"/><stop offset=".3528" stop-color="#ff8753"/><stop offset=".4519" stop-color="#ff593c"/><stop offset=".6035" stop-color="#ff3027"/><stop offset=".8455" stop-color="#ff0d15"/><stop offset="1" stop-color="#ff000f"/></linearGradient><linearGradient id="hb31"><stop offset="0" stop-color="#00ff86"/><stop offset=".0176" stop-color="#0cff87"/><stop offset=".1202" stop-color="#75ff8e"/><stop offset=".2082" stop-color="#e5ff95"/><stop offset=".2258" stop-color="#feff96"/><stop offset=".2757" stop-color="#ffc377"/><stop offset=".3431" stop-color="#ff8e5b"/><stop offset=".437" stop-color="#ff5f42"/><stop offset=".5777" stop-color="#ff352d"/><stop offset=".8035" stop-color="#ff121a"/><stop offset="1" stop-color="#ff0010"/></linearGradient><linearGradient id="hb32"><stop offset="0" stop-color="#00ff8b"/><stop offset=".0147" stop-color="#08ff8c"/><stop offset=".1176" stop-color="#71ff93"/><stop offset=".2059" stop-color="#e1ff9b"/><stop offset=".2265" stop-color="#ffff9d"/><stop offset=".2735" stop-color="#ffc57e"/><stop offset=".3382" stop-color="#ff9161"/><stop offset=".4324" stop-color="#ff6047"/><stop offset=".5706" stop-color="#ff3730"/><stop offset=".7912" stop-color="#ff131c"/><stop offset="1" stop-color="#ff0012"/></linearGradient><linearGradient id="hb33"><stop offset="0" stop-color="#00ff90"/><stop offset=".0504" stop-color="#2cff94"/><stop offset=".1484" stop-color="#98ff9c"/><stop offset=".2255" stop-color="#fffea4"/><stop offset=".273" stop-color="#ffc483"/><stop offset=".3383" stop-color="#ff9065"/><stop offset=".4332" stop-color="#ff604a"/><stop offset=".5727" stop-color="#ff3632"/><stop offset=".7953" stop-color="#ff121e"/><stop offset="1" stop-color="#ff0013"/></linearGradient><linearGradient id="hb34"><stop offset="0" stop-color="#00ff96"/><stop offset=".0209" stop-color="#0fff97"/><stop offset=".1224" stop-color="#78ffa0"/><stop offset=".209" stop-color="#e7ffa9"/><stop offset=".2269" stop-color="#fffdaa"/><stop offset=".2746" stop-color="#ffc488"/><stop offset=".3403" stop-color="#ff8f69"/><stop offset=".4358" stop-color="#ff5f4d"/><stop offset=".5761" stop-color="#ff3635"/><stop offset=".8" stop-color="#ff1220"/><stop offset="1" stop-color="#ff0015"/></linearGradient><linearGradient id="hb35"><stop offset="0" stop-color="#00ff9b"/><stop offset=".015" stop-color="#09ff9c"/><stop offset=".1171" stop-color="#71ffa5"/><stop offset=".2042" stop-color="#dfffaf"/><stop offset=".2282" stop-color="#fffdb1"/><stop offset=".2763" stop-color="#ffc38d"/><stop offset=".3423" stop-color="#ff8e6d"/><stop offset=".4384" stop-color="#ff5e50"/><stop offset=".5796" stop-color="#ff3537"/><stop offset=".8048" stop-color="#ff1121"/><stop offset="1" stop-color="#ff0016"/></linearGradient><linearGradient id="hb36"><stop offset="0" stop-color="#00ffa0"/><stop offset=".0121" stop-color="#05ffa1"/><stop offset=".1148" stop-color="#6dffab"/><stop offset=".2024" stop-color="#dbffb6"/><stop offset=".2296" stop-color="#fffcb7"/><stop offset=".2779" stop-color="#ffc293"/><stop offset=".3444" stop-color="#ff8d71"/><stop offset=".4381" stop-color="#ff5f54"/><stop offset=".5801" stop-color="#ff353a"/><stop offset=".8066" stop-color="#ff1123"/><stop offset="1" stop-color="#ff0018"/></linearGradient><linearGradient id="hb37"><stop offset="0" stop-color="#00ffa6"/><stop offset=".0274" stop-color="#15ffa9"/><stop offset=".1277" stop-color="#7effb3"/><stop offset=".2128" stop-color="#edffbf"/><stop offset=".2249" stop-color="#feffc0"/><stop offset=".2766" stop-color="#ffc198"/><stop offset=".3435" stop-color="#ff8d76"/><stop offset=".4377" stop-color="#ff5e57"/><stop offset=".5805" stop-color="#ff343c"/><stop offset=".8085" stop-color="#ff1125"/><stop offset="1" stop-color="#ff0019"/></linearGradient><linearGradient id="hb38"><stop offset="0" stop-color="#00ffac"/><stop offset=".0153" stop-color="#09ffad"/><stop offset=".1193" stop-color="#74ffb9"/><stop offset=".2049" stop-color="#e0ffc4"/><stop offset=".2263" stop-color="#ffffc8"/><stop offset=".2752" stop-color="#ffc39f"/><stop offset=".3425" stop-color="#ff8e7b"/><stop offset=".4373" stop-color="#ff5e5b"/><stop offset=".578" stop-color="#ff353f"/><stop offset=".8043" stop-color="#ff1127"/><stop offset="1" stop-color="#ff001b"/></linearGradient><linearGradient id="hb39"><stop offset="0" stop-color="#00ffb1"/><stop offset=".0123" stop-color="#06ffb3"/><stop offset=".1169" stop-color="#70ffbf"/><stop offset=".2031" stop-color="#dcffcb"/><stop offset=".2277" stop-color="#fffece"/><stop offset=".2769" stop-color="#ffc2a5"/><stop offset=".3446" stop-color="#ff8d7f"/><stop offset=".44" stop-color="#ff5e5f"/><stop offset=".5815" stop-color="#ff3542"/><stop offset=".8092" stop-color="#ff1129"/><stop offset="1" stop-color="#ff001d"/></linearGradient><linearGradient id="hb40"><stop offset="0" stop-color="#00ffb7"/><stop offset=".0342" stop-color="#1cffbb"/><stop offset=".1335" stop-color="#85ffc8"/><stop offset=".2174" stop-color="#f3ffd5"/><stop offset=".2267" stop-color="#fffdd5"/><stop offset=".2764" stop-color="#ffc2aa"/><stop offset=".3447" stop-color="#ff8c84"/><stop offset=".441" stop-color="#ff5d62"/><stop offset=".587" stop-color="#f34"/><stop offset=".8199" stop-color="#ff102a"/><stop offset="1" stop-color="#ff001e"/></linearGradient><linearGradient id="hb41"><stop offset="0" stop-color="#00ffbd"/><stop offset=".0187" stop-color="#0dffbf"/><stop offset=".1219" stop-color="#77ffcd"/><stop offset=".2094" stop-color="#e6ffdb"/><stop offset=".2281" stop-color="#fffcdc"/><stop offset=".275" stop-color="#ffc4b2"/><stop offset=".3406" stop-color="#ff8f8b"/><stop offset=".4344" stop-color="#ff6068"/><stop offset=".575" stop-color="#ff3649"/><stop offset=".8" stop-color="#ff122e"/><stop offset="1" stop-color="#ff0020"/></linearGradient><linearGradient id="hb42"><stop offset="0" stop-color="#00ffc3"/><stop offset=".0125" stop-color="#06ffc4"/><stop offset=".116" stop-color="#6fffd3"/><stop offset=".2038" stop-color="#deffe1"/><stop offset=".2288" stop-color="#fffce3"/><stop offset=".2759" stop-color="#ffc3b8"/><stop offset=".3417" stop-color="#ff8e8f"/><stop offset=".4357" stop-color="#ff5f6b"/><stop offset=".5768" stop-color="#ff354b"/><stop offset=".8025" stop-color="#ff1130"/><stop offset="1" stop-color="#f02"/></linearGradient><linearGradient id="hb43"><stop offset="0" stop-color="#00ffc9"/><stop offset=".0126" stop-color="#05ffca"/><stop offset=".1167" stop-color="#6fffd9"/><stop offset=".205" stop-color="#dfffe9"/><stop offset=".2271" stop-color="#ffe"/><stop offset=".2776" stop-color="#ffc2be"/><stop offset=".3438" stop-color="#ff8e94"/><stop offset=".4385" stop-color="#ff5e6f"/><stop offset=".5804" stop-color="#ff354e"/><stop offset=".8076" stop-color="#ff1131"/><stop offset="1" stop-color="#ff0024"/></linearGradient><linearGradient id="hb44"><stop offset="0" stop-color="#00ffcf"/><stop offset=".0223" stop-color="#10ffd2"/><stop offset=".1242" stop-color="#7affe2"/><stop offset=".2102" stop-color="#e8fff2"/><stop offset=".2261" stop-color="#fffff5"/><stop offset=".2739" stop-color="#ffc4c6"/><stop offset=".3408" stop-color="#ff8f9a"/><stop offset=".4363" stop-color="#ff5f73"/><stop offset=".5764" stop-color="#ff3651"/><stop offset=".8025" stop-color="#ff1234"/><stop offset="1" stop-color="#ff0025"/></linearGradient><linearGradient id="hb45"><stop offset="0" stop-color="#00ffd5"/><stop offset=".0128" stop-color="#07ffd7"/><stop offset=".1154" stop-color="#6fffe7"/><stop offset=".2019" stop-color="#dbfff8"/><stop offset=".2276" stop-color="#fffefd"/><stop offset=".2756" stop-color="#ffc4cc"/><stop offset=".3429" stop-color="#ff8e9f"/><stop offset=".4391" stop-color="#ff5e77"/><stop offset=".5833" stop-color="#ff3453"/><stop offset=".8109" stop-color="#ff1136"/><stop offset="1" stop-color="#ff0027"/></linearGradient><linearGradient id="hb46"><stop offset="0" stop-color="#00ffdb"/><stop offset=".0129" stop-color="#06ffdd"/><stop offset=".1158" stop-color="#6effee"/><stop offset=".2122" stop-color="#e7fcff"/><stop offset=".2347" stop-color="#fff4fc"/><stop offset=".2862" stop-color="#ffb9ca"/><stop offset=".3569" stop-color="#ff859c"/><stop offset=".4566" stop-color="#ff5775"/><stop offset=".6077" stop-color="#ff2f52"/><stop offset=".8521" stop-color="#ff0c34"/><stop offset="1" stop-color="#ff0029"/></linearGradient><linearGradient id="hb47"><stop offset="0" stop-color="#00ffe2"/><stop offset=".026" stop-color="#14ffe6"/><stop offset=".1266" stop-color="#7dfff8"/><stop offset=".1851" stop-color="#c2faff"/><stop offset=".237" stop-color="#fef"/><stop offset=".289" stop-color="#ffb6cd"/><stop offset=".3604" stop-color="#ff829f"/><stop offset=".4643" stop-color="#ff5476"/><stop offset=".6201" stop-color="#ff2c53"/><stop offset=".8734" stop-color="#ff0a34"/><stop offset="1" stop-color="#ff002b"/></linearGradient><linearGradient id="hb48"><stop offset="0" stop-color="#00ffe8"/><stop offset=".0163" stop-color="#0affeb"/><stop offset=".1176" stop-color="#72fffd"/><stop offset=".2451" stop-color="#ffe5ff"/><stop offset=".3007" stop-color="#ffaccb"/><stop offset=".3758" stop-color="#ff7a9d"/><stop offset=".4869" stop-color="#ff4d74"/><stop offset=".6569" stop-color="#ff2650"/><stop offset=".9346" stop-color="#ff0531"/><stop offset="1" stop-color="#ff002d"/></linearGradient><linearGradient id="hb49"><stop offset="0" stop-color="#00ffef"/><stop offset=".0132" stop-color="#06fff1"/><stop offset=".1086" stop-color="#65fbff"/><stop offset=".2533" stop-color="#ffdcfe"/><stop offset=".3092" stop-color="#ffa6cb"/><stop offset=".3882" stop-color="#ff749d"/><stop offset=".5033" stop-color="#ff4873"/><stop offset=".6809" stop-color="#ff224f"/><stop offset=".977" stop-color="#ff0130"/><stop offset="1" stop-color="#ff002e"/></linearGradient><linearGradient id="hb50"><stop offset="0" stop-color="#00fff6"/><stop offset=".0299" stop-color="#18fffb"/><stop offset=".1096" stop-color="#65f4ff"/><stop offset=".2591" stop-color="#ffd4fe"/><stop offset=".3189" stop-color="#ff9ec9"/><stop offset=".402" stop-color="#ff6d9b"/><stop offset=".5249" stop-color="#ff4271"/><stop offset=".7176" stop-color="#ff1c4c"/><stop offset="1" stop-color="#ff0030"/></linearGradient><linearGradient id="hb51"><stop offset="0" stop-color="#00fffc"/><stop offset=".0167" stop-color="#0bffff"/><stop offset=".2133" stop-color="#c9d8ff"/><stop offset=".2667" stop-color="#ffccfd"/><stop offset=".33" stop-color="#ff96c7"/><stop offset=".42" stop-color="#ff6597"/><stop offset=".5533" stop-color="#ff3b6d"/><stop offset=".7633" stop-color="#ff1649"/><stop offset="1" stop-color="#ff0032"/></linearGradient><linearGradient id="hb52"><stop offset="0" stop-color="#00fbff"/><stop offset=".0134" stop-color="#06f9ff"/><stop offset=".2148" stop-color="#c4d2ff"/><stop offset=".2752" stop-color="#ffc4fd"/><stop offset=".3389" stop-color="#ff90c8"/><stop offset=".4295" stop-color="#ff6298"/><stop offset=".5638" stop-color="#ff386e"/><stop offset=".7785" stop-color="#ff1449"/><stop offset="1" stop-color="#ff0034"/></linearGradient><linearGradient id="hb53"><stop offset="0" stop-color="#00f5ff"/><stop offset=".0135" stop-color="#06f2ff"/><stop offset=".2196" stop-color="#c2ccff"/><stop offset=".2838" stop-color="#ffbcfc"/><stop offset=".3514" stop-color="#ff89c6"/><stop offset=".4459" stop-color="#ff5c97"/><stop offset=".5878" stop-color="#ff336c"/><stop offset=".8108" stop-color="#ff1148"/><stop offset="1" stop-color="#ff0036"/></linearGradient><linearGradient id="hb54"><stop offset="0" stop-color="#0ef"/><stop offset=".0239" stop-color="#10eaff"/><stop offset=".2355" stop-color="#cec3ff"/><stop offset=".2867" stop-color="#ffb8ff"/><stop offset=".3549" stop-color="#ff86c9"/><stop offset=".4505" stop-color="#ff5999"/><stop offset=".5939" stop-color="#ff326e"/><stop offset=".8191" stop-color="#ff104a"/><stop offset="1" stop-color="#ff0038"/></linearGradient><linearGradient id="hb55"><stop offset="0" stop-color="#00e8ff"/><stop offset=".0172" stop-color="#09e5ff"/><stop offset=".2337" stop-color="#c5beff"/><stop offset=".2955" stop-color="#ffb1fe"/><stop offset=".3643" stop-color="#ff81c9"/><stop offset=".4639" stop-color="#f59"/><stop offset=".6117" stop-color="#ff2e6e"/><stop offset=".8454" stop-color="#ff0d49"/><stop offset="1" stop-color="#ff003a"/></linearGradient><linearGradient id="hb56"><stop offset="0" stop-color="#00e3ff"/><stop offset=".0138" stop-color="#06e0ff"/><stop offset=".2379" stop-color="#c4b8ff"/><stop offset=".3034" stop-color="#ffaafe"/><stop offset=".3759" stop-color="#ff7bc8"/><stop offset=".4793" stop-color="#ff5097"/><stop offset=".631" stop-color="#ff2a6d"/><stop offset=".8724" stop-color="#ff0a48"/><stop offset="1" stop-color="#ff003c"/></linearGradient><linearGradient id="hb57"><stop offset="0" stop-color="#0df"/><stop offset=".0453" stop-color="#20d5ff"/><stop offset=".2718" stop-color="#deacff"/><stop offset=".3101" stop-color="#ffa4fd"/><stop offset=".3833" stop-color="#ff76c8"/><stop offset=".4878" stop-color="#ff4d98"/><stop offset=".6446" stop-color="#ff286d"/><stop offset=".892" stop-color="#ff0849"/><stop offset="1" stop-color="#ff003e"/></linearGradient><linearGradient id="hb58"><stop offset="0" stop-color="#00d7ff"/><stop offset=".0211" stop-color="#0cd4ff"/><stop offset=".2561" stop-color="#caabff"/><stop offset=".3193" stop-color="#ff9efd"/><stop offset=".3965" stop-color="#ff70c7"/><stop offset=".5053" stop-color="#ff4896"/><stop offset=".6667" stop-color="#ff246c"/><stop offset=".9228" stop-color="#ff0648"/><stop offset="1" stop-color="#ff0041"/></linearGradient><linearGradient id="hb59"><stop offset="0" stop-color="#00d2ff"/><stop offset=".0177" stop-color="#08cfff"/><stop offset=".258" stop-color="#c5a6ff"/><stop offset=".3286" stop-color="#ff98fc"/><stop offset=".4064" stop-color="#ff6cc7"/><stop offset=".5159" stop-color="#ff4597"/><stop offset=".6784" stop-color="#ff226d"/><stop offset=".9364" stop-color="#ff0449"/><stop offset="1" stop-color="#ff0043"/></linearGradient><linearGradient id="hb60"><stop offset="0" stop-color="#00cdff"/><stop offset=".1286" stop-color="#5cb8ff"/><stop offset=".3357" stop-color="#ff92fc"/><stop offset=".4143" stop-color="#ff68c7"/><stop offset=".5286" stop-color="#ff4197"/><stop offset=".6964" stop-color="#ff206d"/><stop offset=".9643" stop-color="#ff0248"/><stop offset="1" stop-color="#ff0045"/></linearGradient><linearGradient id="hb61"><stop offset="0" stop-color="#00c8ff"/><stop offset=".0358" stop-color="#16c2ff"/><stop offset=".2867" stop-color="#d499ff"/><stop offset=".3441" stop-color="#ff8cfc"/><stop offset=".4265" stop-color="#ff62c6"/><stop offset=".5448" stop-color="#ff3d96"/><stop offset=".7204" stop-color="#ff1c6b"/><stop offset=".9964" stop-color="#ff0047"/><stop offset="1" stop-color="#ff0047"/></linearGradient><linearGradient id="hb62"><stop offset="0" stop-color="#00c3ff"/><stop offset=".0217" stop-color="#0ac0ff"/><stop offset=".278" stop-color="#c796ff"/><stop offset=".3502" stop-color="#ff89fe"/><stop offset=".4332" stop-color="#ff60c8"/><stop offset=".5523" stop-color="#ff3b98"/><stop offset=".7292" stop-color="#ff1b6d"/><stop offset="1" stop-color="#ff0049"/></linearGradient><linearGradient id="hb63"><stop offset="0" stop-color="#00bfff"/><stop offset=".0182" stop-color="#07bcff"/><stop offset=".2836" stop-color="#c592ff"/><stop offset=".36" stop-color="#ff84fe"/><stop offset=".4436" stop-color="#ff5cc9"/><stop offset=".5636" stop-color="#ff3999"/><stop offset=".7418" stop-color="#ff196e"/><stop offset="1" stop-color="#ff004c"/></linearGradient><linearGradient id="hb64"><stop offset="0" stop-color="#00baff"/><stop offset=".0699" stop-color="#2bb0ff"/><stop offset=".3382" stop-color="#ea85ff"/><stop offset=".3676" stop-color="#ff7ffd"/><stop offset=".4559" stop-color="#ff58c7"/><stop offset=".5809" stop-color="#ff3597"/><stop offset=".7684" stop-color="#ff166d"/><stop offset="1" stop-color="#ff004e"/></linearGradient><linearGradient id="hb65"><stop offset="0" stop-color="#00b6ff"/><stop offset=".0296" stop-color="#0fb2ff"/><stop offset=".3074" stop-color="#cd87ff"/><stop offset=".3778" stop-color="#ff7afd"/><stop offset=".4667" stop-color="#ff54c8"/><stop offset=".5926" stop-color="#ff3298"/><stop offset=".7815" stop-color="#ff146e"/><stop offset="1" stop-color="#ff0051"/></linearGradient><linearGradient id="hb66"><stop offset="0" stop-color="#00b2ff"/><stop offset=".0186" stop-color="#07afff"/><stop offset=".3011" stop-color="#c484ff"/><stop offset=".3866" stop-color="#ff75fc"/><stop offset=".4796" stop-color="#ff50c6"/><stop offset=".6097" stop-color="#ff2e97"/><stop offset=".803" stop-color="#ff116d"/><stop offset="1" stop-color="#ff0053"/></linearGradient><linearGradient id="hb67"><stop offset="0" stop-color="#00aeff"/><stop offset=".1805" stop-color="#6f94ff"/><stop offset=".3947" stop-color="#ff70fc"/><stop offset=".4887" stop-color="#ff4cc7"/><stop offset=".6241" stop-color="#ff2c96"/><stop offset=".8233" stop-color="#ff0f6c"/><stop offset="1" stop-color="#f05"/></linearGradient><linearGradient id="hb68"><stop offset="0" stop-color="#0af"/><stop offset=".0492" stop-color="#1aa3ff"/><stop offset=".3447" stop-color="#d877ff"/><stop offset=".4053" stop-color="#ff6cfc"/><stop offset=".5038" stop-color="#ff48c5"/><stop offset=".6439" stop-color="#ff2895"/><stop offset=".8523" stop-color="#ff0c6b"/><stop offset="1" stop-color="#ff0058"/></linearGradient><linearGradient id="hb69"><stop offset="0" stop-color="#00a6ff"/><stop offset=".0267" stop-color="#0ba3ff"/><stop offset=".3321" stop-color="#ca76ff"/><stop offset=".4122" stop-color="#ff69fe"/><stop offset=".5115" stop-color="#ff46c8"/><stop offset=".6527" stop-color="#ff2797"/><stop offset=".8626" stop-color="#ff0b6d"/><stop offset="1" stop-color="#ff005a"/></linearGradient><linearGradient id="hb70"><stop offset="0" stop-color="#00a3ff"/><stop offset=".0231" stop-color="#08a0ff"/><stop offset=".3346" stop-color="#c673ff"/><stop offset=".4231" stop-color="#ff65fd"/><stop offset=".5231" stop-color="#ff43c8"/><stop offset=".6654" stop-color="#ff2598"/><stop offset=".8769" stop-color="#ff0a6d"/><stop offset="1" stop-color="#ff005d"/></linearGradient><linearGradient id="hb71"><stop offset="0" stop-color="#009fff"/><stop offset=".1202" stop-color="#418fff"/><stop offset=".4302" stop-color="#ff61fd"/><stop offset=".5349" stop-color="#ff3fc7"/><stop offset=".6822" stop-color="#ff2197"/><stop offset=".9031" stop-color="#ff076c"/><stop offset="1" stop-color="#ff005f"/></linearGradient><linearGradient id="hb72"><stop offset="0" stop-color="#009bff"/><stop offset=".0391" stop-color="#1296ff"/><stop offset=".3633" stop-color="#d069ff"/><stop offset=".4414" stop-color="#ff5dfd"/><stop offset=".5469" stop-color="#ff3cc7"/><stop offset=".6953" stop-color="#ff2097"/><stop offset=".918" stop-color="#ff066d"/><stop offset="1" stop-color="#ff0062"/></linearGradient><linearGradient id="hb73"><stop offset="0" stop-color="#0098ff"/><stop offset=".0276" stop-color="#0a95ff"/><stop offset=".3583" stop-color="#c768ff"/><stop offset=".4528" stop-color="#ff59fc"/><stop offset=".5591" stop-color="#ff3ac7"/><stop offset=".7126" stop-color="#ff1d97"/><stop offset=".9409" stop-color="#ff046d"/><stop offset="1" stop-color="#ff0065"/></linearGradient><linearGradient id="hb74"><stop offset="0" stop-color="#0094ff"/><stop offset=".2271" stop-color="#7877ff"/><stop offset=".4622" stop-color="#ff55fc"/><stop offset=".5737" stop-color="#ff36c6"/><stop offset=".7331" stop-color="#ff1a96"/><stop offset=".9681" stop-color="#ff026c"/><stop offset="1" stop-color="#ff0068"/></linearGradient><linearGradient id="hb75"><stop offset="0" stop-color="#0091ff"/><stop offset=".072" stop-color="#28f"/><stop offset=".416" stop-color="#e15bff"/><stop offset=".472" stop-color="#ff52fc"/><stop offset=".584" stop-color="#ff34c7"/><stop offset=".744" stop-color="#ff1897"/><stop offset=".984" stop-color="#ff006c"/><stop offset="1" stop-color="#ff006a"/></linearGradient><linearGradient id="hb76"><stop offset="0" stop-color="#008eff"/><stop offset=".0323" stop-color="#0c8aff"/><stop offset=".3871" stop-color="#cb5dff"/><stop offset=".4798" stop-color="#ff4ffe"/><stop offset=".5927" stop-color="#ff32c8"/><stop offset=".754" stop-color="#ff1798"/><stop offset=".996" stop-color="#ff006e"/><stop offset="1" stop-color="#ff006d"/></linearGradient><linearGradient id="hb77"><stop offset="0" stop-color="#008bff"/><stop offset=".2694" stop-color="#876aff"/><stop offset=".4898" stop-color="#ff4cfd"/><stop offset=".6082" stop-color="#ff2fc7"/><stop offset=".7755" stop-color="#ff1497"/><stop offset="1" stop-color="#ff0070"/></linearGradient><linearGradient id="hb78"><stop offset="0" stop-color="#08f"/><stop offset=".214" stop-color="#666fff"/><stop offset=".5021" stop-color="#ff49fd"/><stop offset=".6214" stop-color="#ff2cc8"/><stop offset=".7901" stop-color="#ff1398"/><stop offset="1" stop-color="#ff0073"/></linearGradient><linearGradient id="hb79"><stop offset="0" stop-color="#0085ff"/><stop offset=".0539" stop-color="#167fff"/><stop offset=".4315" stop-color="#d451ff"/><stop offset=".5145" stop-color="#ff45fd"/><stop offset=".639" stop-color="#ff29c6"/><stop offset=".8133" stop-color="#ff1097"/><stop offset="1" stop-color="#ff0076"/></linearGradient><linearGradient id="hb80"><stop offset="0" stop-color="#0083ff"/><stop offset=".0375" stop-color="#0d7eff"/><stop offset=".4208" stop-color="#ca50ff"/><stop offset=".525" stop-color="#ff42fc"/><stop offset=".65" stop-color="#ff27c7"/><stop offset=".8292" stop-color="#ff0e97"/><stop offset="1" stop-color="#ff0079"/></linearGradient><linearGradient id="hb81"><stop offset="0" stop-color="#0080ff"/><stop offset=".2743" stop-color="#7d60ff"/><stop offset=".5359" stop-color="#ff3ffc"/><stop offset=".6667" stop-color="#ff24c6"/><stop offset=".8523" stop-color="#ff0c95"/><stop offset="1" stop-color="#ff007c"/></linearGradient><linearGradient id="hb82"><stop offset="0" stop-color="#007dff"/><stop offset=".1149" stop-color="#3070ff"/><stop offset=".5106" stop-color="#ef42ff"/><stop offset=".5489" stop-color="#ff3cfc"/><stop offset=".6809" stop-color="#ff22c6"/><stop offset=".8681" stop-color="#ff0a96"/><stop offset="1" stop-color="#ff007f"/></linearGradient><linearGradient id="hb83"><stop offset="0" stop-color="#007bff"/><stop offset=".0429" stop-color="#0f76ff"/><stop offset=".4549" stop-color="#cd47ff"/><stop offset=".5579" stop-color="#ff3afd"/><stop offset=".691" stop-color="#ff20c8"/><stop offset=".8798" stop-color="#ff0998"/><stop offset="1" stop-color="#ff0083"/></linearGradient><linearGradient id="hb84"><stop offset="0" stop-color="#0078ff"/><stop offset=".3174" stop-color="#8955ff"/><stop offset=".5696" stop-color="#ff37fd"/><stop offset=".7043" stop-color="#ff1ec8"/><stop offset=".9" stop-color="#ff0897"/><stop offset="1" stop-color="#ff0086"/></linearGradient><linearGradient id="hb85"><stop offset="0" stop-color="#0075ff"/><stop offset=".2707" stop-color="#7159ff"/><stop offset=".5808" stop-color="#ff34fd"/><stop offset=".7205" stop-color="#ff1cc7"/><stop offset=".917" stop-color="#ff0697"/><stop offset="1" stop-color="#ff0089"/></linearGradient><linearGradient id="hb86"><stop offset="0" stop-color="#0073ff"/><stop offset=".0749" stop-color="#1b6bff"/><stop offset=".511" stop-color="#da3cff"/><stop offset=".5947" stop-color="#ff31fd"/><stop offset=".7357" stop-color="#ff1ac7"/><stop offset=".9383" stop-color="#ff0497"/><stop offset="1" stop-color="#ff008c"/></linearGradient><linearGradient id="hb87"><stop offset="0" stop-color="#0070ff"/><stop offset=".3571" stop-color="#914bff"/><stop offset=".6071" stop-color="#ff2ffc"/><stop offset=".7545" stop-color="#ff17c6"/><stop offset=".9643" stop-color="#ff0296"/><stop offset="1" stop-color="#ff0090"/></linearGradient><linearGradient id="hb88"><stop offset="0" stop-color="#006eff"/><stop offset=".3243" stop-color="#804dff"/><stop offset=".6216" stop-color="#ff2cfc"/><stop offset=".7703" stop-color="#ff15c7"/><stop offset=".982" stop-color="#ff0197"/><stop offset="1" stop-color="#ff0094"/></linearGradient><linearGradient id="hb89"><stop offset="0" stop-color="#006cff"/><stop offset=".2045" stop-color="#4c58ff"/><stop offset=".6318" stop-color="#ff2afe"/><stop offset=".7818" stop-color="#ff14c8"/><stop offset=".9955" stop-color="#ff0098"/><stop offset="1" stop-color="#ff0097"/></linearGradient><linearGradient id="hb90"><stop offset="0" stop-color="#006aff"/><stop offset=".0731" stop-color="#1863ff"/><stop offset=".5479" stop-color="#d733ff"/><stop offset=".6438" stop-color="#ff28fd"/><stop offset=".7991" stop-color="#ff12c7"/><stop offset="1" stop-color="#ff009a"/></linearGradient><linearGradient id="hb91"><stop offset="0" stop-color="#0067ff"/><stop offset=".3704" stop-color="#8a44ff"/><stop offset=".6574" stop-color="#ff25fd"/><stop offset=".8148" stop-color="#ff10c7"/><stop offset="1" stop-color="#ff009e"/></linearGradient><linearGradient id="hb92"><stop offset="0" stop-color="#0065ff"/><stop offset=".3271" stop-color="#7647ff"/><stop offset=".6729" stop-color="#ff23fd"/><stop offset=".8364" stop-color="#ff0ec6"/><stop offset="1" stop-color="#ff00a2"/></linearGradient><linearGradient id="hb93"><stop offset="0" stop-color="#0063ff"/><stop offset=".1132" stop-color="#2559ff"/><stop offset=".6132" stop-color="#e329ff"/><stop offset=".6887" stop-color="#ff21fc"/><stop offset=".8538" stop-color="#ff0cc7"/><stop offset="1" stop-color="#ff00a6"/></linearGradient><linearGradient id="hb94"><stop offset="0" stop-color="#0061ff"/><stop offset=".4163" stop-color="#923bff"/><stop offset=".7033" stop-color="#ff1efc"/><stop offset=".8756" stop-color="#ff0ac6"/><stop offset="1" stop-color="#f0a"/></linearGradient><linearGradient id="hb95"><stop offset="0" stop-color="#005fff"/><stop offset=".3798" stop-color="#823dff"/><stop offset=".7163" stop-color="#ff1cfc"/><stop offset=".8894" stop-color="#ff08c6"/><stop offset="1" stop-color="#ff00ae"/></linearGradient><linearGradient id="hb96"><stop offset="0" stop-color="#005dff"/><stop offset=".3204" stop-color="#6a41ff"/><stop offset=".7282" stop-color="#ff1bfe"/><stop offset=".9029" stop-color="#ff07c8"/><stop offset="1" stop-color="#ff00b2"/></linearGradient><linearGradient id="hb97"><stop offset="0" stop-color="#005cff"/><stop offset=".1127" stop-color="#2152ff"/><stop offset=".6569" stop-color="#e021ff"/><stop offset=".7451" stop-color="#ff18fd"/><stop offset=".9216" stop-color="#ff05c8"/><stop offset="1" stop-color="#ff00b6"/></linearGradient><linearGradient id="hb98"><stop offset="0" stop-color="#0059ff"/><stop offset=".4328" stop-color="#8c35ff"/><stop offset=".7612" stop-color="#ff16fd"/><stop offset=".9453" stop-color="#ff03c7"/><stop offset="1" stop-color="#f0b"/></linearGradient><linearGradient id="hb99"><stop offset="0" stop-color="#0058ff"/><stop offset=".392" stop-color="#7b37ff"/><stop offset=".7789" stop-color="#ff14fd"/><stop offset=".9648" stop-color="#ff02c7"/><stop offset="1" stop-color="#ff00bf"/></linearGradient><linearGradient id="hb100"><stop offset="0" stop-color="#0056ff"/><stop offset=".2273" stop-color="#4344ff"/><stop offset=".7929" stop-color="#ff12fc"/><stop offset=".9848" stop-color="#ff00c6"/><stop offset="1" stop-color="#ff00c3"/></linearGradient><linearGradient id="hb101"><stop offset="0" stop-color="#0054ff"/><stop offset=".4821" stop-color="#932dff"/><stop offset=".8103" stop-color="#ff10fc"/><stop offset="1" stop-color="#ff00c8"/></linearGradient><linearGradient id="hb102"><stop offset="0" stop-color="#0052ff"/><stop offset=".4508" stop-color="#862fff"/><stop offset=".829" stop-color="#ff0efc"/><stop offset="1" stop-color="#ff00cd"/></linearGradient><linearGradient id="hb103"><stop offset="0" stop-color="#0051ff"/><stop offset=".3927" stop-color="#7133ff"/><stop offset=".8429" stop-color="#ff0dfd"/><stop offset="1" stop-color="#ff00d2"/></linearGradient><linearGradient id="hb104"><stop offset="0" stop-color="#004fff"/><stop offset=".5291" stop-color="#9926ff"/><stop offset=".8571" stop-color="#ff0bfd"/><stop offset="1" stop-color="#ff00d6"/></linearGradient><linearGradient id="hb105"><stop offset="0" stop-color="#004dff"/><stop offset=".5027" stop-color="#8d28ff"/><stop offset=".877" stop-color="#ff09fd"/><stop offset="1" stop-color="#ff00db"/></linearGradient><linearGradient id="hb106"><stop offset="0" stop-color="#004cff"/><stop offset=".4649" stop-color="#7f2aff"/><stop offset=".8973" stop-color="#ff07fd"/><stop offset="1" stop-color="#ff00e0"/></linearGradient><linearGradient id="hb107"><stop offset="0" stop-color="#004aff"/><stop offset=".3497" stop-color="#5b32ff"/><stop offset=".918" stop-color="#ff06fc"/><stop offset="1" stop-color="#ff00e6"/></linearGradient><linearGradient id="hb108"><stop offset="0" stop-color="#0049ff"/><stop offset=".5611" stop-color="#9421ff"/><stop offset=".9389" stop-color="#ff04fc"/><stop offset="1" stop-color="#ff00eb"/></linearGradient><linearGradient id="hb109"><stop offset="0" stop-color="#0047ff"/><stop offset=".5251" stop-color="#8723ff"/><stop offset=".9553" stop-color="#ff02fc"/><stop offset="1" stop-color="#ff00f0"/></linearGradient><linearGradient id="hb110"><stop offset="0" stop-color="#0046ff"/><stop offset=".4746" stop-color="#7626ff"/><stop offset=".9718" stop-color="#ff01fd"/><stop offset="1" stop-color="#ff00f5"/></linearGradient><linearGradient id="hb111"><stop offset="0" stop-color="#04f"/><stop offset=".6149" stop-color="#991bff"/><stop offset=".9943" stop-color="#ff00fd"/><stop offset="1" stop-color="#ff00fb"/></linearGradient><linearGradient id="hb112"><stop offset="0" stop-color="#0043ff"/><stop offset=".5872" stop-color="#8e1cff"/><stop offset="1" stop-color="#fc00ff"/></linearGradient><linearGradient id="hb113"><stop offset="0" stop-color="#0041ff"/><stop offset=".5471" stop-color="#811fff"/><stop offset="1" stop-color="#f600ff"/></linearGradient><linearGradient id="hb114"><stop offset="0" stop-color="#0040ff"/><stop offset=".6726" stop-color="#9e15ff"/><stop offset="1" stop-color="#f200ff"/></linearGradient><linearGradient id="hb115"><stop offset="0" stop-color="#003fff"/><stop offset=".6506" stop-color="#9516ff"/><stop offset="1" stop-color="#ec00ff"/></linearGradient><linearGradient id="hb116"><stop offset="0" stop-color="#003dff"/><stop offset=".6159" stop-color="#8918ff"/><stop offset="1" stop-color="#e600ff"/></linearGradient><linearGradient id="hb117"><stop offset="0" stop-color="#003cff"/><stop offset=".5679" stop-color="#7a1bff"/><stop offset="1" stop-color="#e100ff"/></linearGradient><linearGradient id="hb118"><stop offset="0" stop-color="#003bff"/><stop offset=".717" stop-color="#91f"/><stop offset="1" stop-color="#db00ff"/></linearGradient><linearGradient id="hb119"><stop offset="0" stop-color="#0039ff"/><stop offset=".6835" stop-color="#8f12ff"/><stop offset="1" stop-color="#d700ff"/></linearGradient><linearGradient id="hb120"><stop offset="0" stop-color="#0038ff"/><stop offset=".6474" stop-color="#8414ff"/><stop offset="1" stop-color="#d200ff"/></linearGradient><linearGradient id="hb121"><stop offset="0" stop-color="#0037ff"/><stop offset=".7843" stop-color="#9e0cff"/><stop offset="1" stop-color="#cd00ff"/></linearGradient><linearGradient id="hb122"><stop offset="0" stop-color="#0036ff"/><stop offset=".7616" stop-color="#950dff"/><stop offset="1" stop-color="#c800ff"/></linearGradient><linearGradient id="hb123"><stop offset="0" stop-color="#0035ff"/><stop offset=".7248" stop-color="#8a0fff"/><stop offset="1" stop-color="#c300ff"/></linearGradient><linearGradient id="hb124"><stop offset="0" stop-color="#03f"/><stop offset=".8571" stop-color="#a207ff"/><stop offset="1" stop-color="#bf00ff"/></linearGradient><linearGradient id="hb125"><stop offset="0" stop-color="#0032ff"/><stop offset=".8345" stop-color="#9a08ff"/><stop offset="1" stop-color="#ba00ff"/></linearGradient><linearGradient id="hb126"><stop offset="0" stop-color="#0031ff"/><stop offset=".8042" stop-color="#9009ff"/><stop offset="1" stop-color="#b600ff"/></linearGradient><linearGradient id="hb127"><stop offset="0" stop-color="#0030ff"/><stop offset=".766" stop-color="#850bff"/><stop offset="1" stop-color="#b100ff"/></linearGradient><linearGradient id="hb128"><stop offset="0" stop-color="#002fff"/><stop offset=".9203" stop-color="#9e03ff"/><stop offset="1" stop-color="#ad00ff"/></linearGradient><linearGradient id="hb129"><stop offset="0" stop-color="#002eff"/><stop offset=".8905" stop-color="#9604ff"/><stop offset="1" stop-color="#a900ff"/></linearGradient><linearGradient id="hb130"><stop offset="0" stop-color="#002dff"/><stop offset=".8519" stop-color="#8b06ff"/><stop offset="1" stop-color="#a500ff"/></linearGradient><linearGradient id="hb131"><stop offset="0" stop-color="#002cff"/><stop offset="1" stop-color="#a100ff"/></linearGradient><linearGradient id="hb132"><stop offset="0" stop-color="#002bff"/><stop offset=".9846" stop-color="#9a00ff"/><stop offset="1" stop-color="#9c00ff"/></linearGradient><linearGradient id="hb133"><stop offset="0" stop-color="#002aff"/><stop offset=".9457" stop-color="#9101ff"/><stop offset="1" stop-color="#9a00ff"/></linearGradient><linearGradient id="hb134"><stop offset="0" stop-color="#0029ff"/><stop offset=".9055" stop-color="#8603ff"/><stop offset="1" stop-color="#9500ff"/></linearGradient><linearGradient id="hb135"><stop offset="0" stop-color="#0028ff"/><stop offset="1" stop-color="#9100ff"/></linearGradient><linearGradient id="hb136"><stop offset="0" stop-color="#0027ff"/><stop offset="1" stop-color="#8d00ff"/></linearGradient><linearGradient id="hb137"><stop offset="0" stop-color="#0026ff"/><stop offset="1" stop-color="#8a00ff"/></linearGradient><linearGradient id="hb138"><stop offset="0" stop-color="#0025ff"/><stop offset="1" stop-color="#8700ff"/></linearGradient><linearGradient id="hb139"><stop offset="0" stop-color="#0024ff"/><stop offset="1" stop-color="#8300ff"/></linearGradient><linearGradient id="hb140"><stop offset="0" stop-color="#0023ff"/><stop offset="1" stop-color="#7f00ff"/></linearGradient><linearGradient id="hb141"><stop offset="0" stop-color="#02f"/><stop offset="1" stop-color="#7c00ff"/></linearGradient><linearGradient id="hb142"><stop offset="0" stop-color="#0021ff"/><stop offset="1" stop-color="#7800ff"/></linearGradient><linearGradient id="hb143"><stop offset="0" stop-color="#0020ff"/><stop offset="1" stop-color="#7600ff"/></linearGradient><linearGradient id="hb144"><stop offset="0" stop-color="#0020ff"/><stop offset="1" stop-color="#7200ff"/></linearGradient><linearGradient id="hb145"><stop offset="0" stop-color="#001fff"/><stop offset="1" stop-color="#6f00ff"/></linearGradient><linearGradient id="hb146"><stop offset="0" stop-color="#001eff"/><stop offset="1" stop-color="#6c00ff"/></linearGradient><linearGradient id="hb147"><stop offset="0" stop-color="#001dff"/><stop offset="1" stop-color="#6800ff"/></linearGradient><linearGradient id="hb148"><stop offset="0" stop-color="#001cff"/><stop offset="1" stop-color="#60f"/></linearGradient><linearGradient id="hb149"><stop offset="0" stop-color="#001bff"/><stop offset="1" stop-color="#6300ff"/></linearGradient><linearGradient id="hb150"><stop offset="0" stop-color="#001bff"/><stop offset="1" stop-color="#6000ff"/></linearGradient><linearGradient id="hb151"><stop offset="0" stop-color="#001aff"/><stop offset="1" stop-color="#5d00ff"/></linearGradient><linearGradient id="hb152"><stop offset="0" stop-color="#0019ff"/><stop offset="1" stop-color="#5a00ff"/></linearGradient><linearGradient id="hb153"><stop offset="0" stop-color="#0018ff"/><stop offset="1" stop-color="#5800ff"/></linearGradient><linearGradient id="hb154"><stop offset="0" stop-color="#0018ff"/><stop offset="1" stop-color="#50f"/></linearGradient><linearGradient id="hb155"><stop offset="0" stop-color="#0017ff"/><stop offset="1" stop-color="#5200ff"/></linearGradient><linearGradient id="hb156"><stop offset="0" stop-color="#0016ff"/><stop offset="1" stop-color="#4f00ff"/></linearGradient><linearGradient id="hb157"><stop offset="0" stop-color="#0015ff"/><stop offset="1" stop-color="#4c00ff"/></linearGradient><linearGradient id="hb158"><stop offset="0" stop-color="#0014ff"/><stop offset="1" stop-color="#4a00ff"/></linearGradient><linearGradient id="hb159"><stop offset="0" stop-color="#0014ff"/><stop offset="1" stop-color="#4700ff"/></linearGradient><linearGradient id="hb160"><stop offset="0" stop-color="#0013ff"/><stop offset="1" stop-color="#40f"/></linearGradient><linearGradient id="hb161"><stop offset="0" stop-color="#0013ff"/><stop offset="1" stop-color="#4200ff"/></linearGradient><linearGradient id="hb162"><stop offset="0" stop-color="#0012ff"/><stop offset="1" stop-color="#4000ff"/></linearGradient><linearGradient id="hb163"><stop offset="0" stop-color="#01f"/><stop offset="1" stop-color="#3d00ff"/></linearGradient><linearGradient id="hb164"><stop offset="0" stop-color="#0010ff"/><stop offset="1" stop-color="#3b00ff"/></linearGradient><linearGradient id="hb165"><stop offset="0" stop-color="#0010ff"/><stop offset="1" stop-color="#3800ff"/></linearGradient><linearGradient id="hb166"><stop offset="0" stop-color="#000fff"/><stop offset="1" stop-color="#3600ff"/></linearGradient><linearGradient id="hb167"><stop offset="0" stop-color="#000fff"/><stop offset="1" stop-color="#3400ff"/></linearGradient><linearGradient id="hb168"><stop offset="0" stop-color="#000eff"/><stop offset="1" stop-color="#3200ff"/></linearGradient><linearGradient id="hb169"><stop offset="0" stop-color="#000dff"/><stop offset="1" stop-color="#2f00ff"/></linearGradient><linearGradient id="hb170"><stop offset="0" stop-color="#000dff"/><stop offset="1" stop-color="#2d00ff"/></linearGradient><linearGradient id="hb171"><stop offset="0" stop-color="#000cff"/><stop offset="1" stop-color="#2a00ff"/></linearGradient><linearGradient id="hb172"><stop offset="0" stop-color="#000bff"/><stop offset="1" stop-color="#2900ff"/></linearGradient><linearGradient id="hb173"><stop offset="0" stop-color="#000bff"/><stop offset="1" stop-color="#2700ff"/></linearGradient><linearGradient id="hb174"><stop offset="0" stop-color="#000aff"/><stop offset="1" stop-color="#2400ff"/></linearGradient><linearGradient id="hb175"><stop offset="0" stop-color="#0009ff"/><stop offset="1" stop-color="#20f"/></linearGradient><linearGradient id="hb176"><stop offset="0" stop-color="#0009ff"/><stop offset="1" stop-color="#2000ff"/></linearGradient><linearGradient id="hb177"><stop offset="0" stop-color="#0008ff"/><stop offset="1" stop-color="#1f00ff"/></linearGradient><linearGradient id="hb178"><stop offset="0" stop-color="#0008ff"/><stop offset="1" stop-color="#1c00ff"/></linearGradient><linearGradient id="hb179"><stop offset="0" stop-color="#0007ff"/><stop offset="1" stop-color="#1a00ff"/></linearGradient><linearGradient id="hb180"><stop offset="0" stop-color="#0007ff"/><stop offset="1" stop-color="#1800ff"/></linearGradient><linearGradient id="hb181"><stop offset="0" stop-color="#0006ff"/><stop offset="1" stop-color="#1600ff"/></linearGradient><linearGradient id="hb182"><stop offset="0" stop-color="#0006ff"/><stop offset="1" stop-color="#1500ff"/></linearGradient><linearGradient id="hb183"><stop offset="0" stop-color="#0005ff"/><stop offset="1" stop-color="#1300ff"/></linearGradient><linearGradient id="hb184"><stop offset="0" stop-color="#0005ff"/><stop offset="1" stop-color="#10f"/></linearGradient><linearGradient id="hb185"><stop offset="0" stop-color="#0004ff"/><stop offset="1" stop-color="#0f00ff"/></linearGradient><linearGradient id="hb186"><stop offset="0" stop-color="#0004ff"/><stop offset="1" stop-color="#0d00ff"/></linearGradient><linearGradient id="hb187"><stop offset="0" stop-color="#0003ff"/><stop offset="1" stop-color="#0c00ff"/></linearGradient><linearGradient id="hb188"><stop offset="0" stop-color="#0003ff"/><stop offset="1" stop-color="#0a00ff"/></linearGradient><linearGradient id="hb189"><stop offset="0" stop-color="#0002ff"/><stop offset="1" stop-color="#0800ff"/></linearGradient><linearGradient id="hb190"><stop offset="0" stop-color="#0002ff"/><stop offset="1" stop-color="#0600ff"/></linearGradient><linearGradient id="hb191"><stop offset="0" stop-color="#0001ff"/><stop offset="1" stop-color="#0400ff"/></linearGradient><linearGradient id="hb192"><stop offset="0" stop-color="#0001ff"/><stop offset="1" stop-color="#0300ff"/></linearGradient><clipPath id="hs"><path d="M1519.3 670.2L1519.2 670.1L1519.1 670.1L1519.1 670.2L1519.0 670.3L1518.8 670.3L1518.6 670.3L1518.4 670.2L1518.3 670.4L1518.2 670.6L1518.1 670.7L1517.9 670.7L1517.7 670.8L1517.3 670.7L1517.0 670.7L1516.6 670.7L1516.3 670.7L1515.9 670.6L1515.5 670.5L1514.9 670.3L1514.1 669.8L1513.0 669.1L1511.8 668.2L1510.5 667.1L1508.9 665.8L1507.2 664.3L1505.1 662.6L1502.8 660.5L1500.2 658.2L1497.4 655.6L1494.4 652.7L1491.0 649.6L1487.3 646.2L1483.1 642.4L1478.4 638.2L1473.3 633.6L1467.9 628.7L1462.0 623.3L1455.6 617.3L1448.7 610.6L1441.2 603.1L1433.4 594.8L1424.8 585.2L1415.2 573.4L1404.2 559.2L1392.1 542.5L1379.3 523.8L1365.8 503.0L1351.8 480.0L1337.4 455.0L1322.9 428.8L1308.6 401.8L1294.8 374.3L1282.2 347.0L1271.0 320.4L1261.3 295.1L1252.8 271.5L1245.8 249.9L1240.3 230.6L1236.2 213.7L1233.4 198.9L1231.7 186.1L1231.0 175.2L1231.4 165.8L1232.6 157.6L1234.7 150.7L1237.7 144.9L1241.3 140.2L1245.6 136.6L1250.4 133.8L1255.6 131.9L1261.2 130.6L1267.1 129.8L1273.2 129.3L1279.6 129.1L1286.0 129.0L1292.4 129.0L1298.8 129.1L1305.4 129.3L1312.0 129.6L1318.9 130.0L1326.0 130.6L1333.2 131.1L1340.8 131.8L1348.6 132.6L1356.7 133.4L1365.1 134.3L1373.8 135.3L1382.9 136.3L1392.4 137.4L1402.3 138.6L1412.5 139.9L1423.2 141.2L1434.4 142.5L1446.0 144.0L1458.1 145.5L1470.6 147.0L1483.6 148.7L1497.1 150.4L1511.1 152.1L1525.5 153.9L1540.4 155.8L1555.6 157.7L1571.3 159.7L1587.2 161.7L1603.5 163.7L1620.0 165.8L1636.6 167.9L1652.9 170.0L1668.9 172.0L1684.8 174.0L1700.6 176.0L1716.1 177.9L1731.0 179.8L1745.2 181.6L1758.8 183.2L1771.8 184.9L1784.1 186.4L1795.6 187.9L1806.4 189.2L1816.5 190.5L1825.8 191.7L1834.6 192.8L1842.7 193.8L1850.3 194.7L1857.4 195.6L1864.2 196.5L1870.6 197.3L1876.6 198.0L1882.1 198.8L1887.3 199.4L1892.1 200.0L1896.5 200.6L1900.5 201.1L1903.9 201.5L1907.0 201.9L1909.9 202.2L1912.5 202.6L1914.8 202.9L1916.9 203.1L1918.7 203.3L1920.2 203.5L1921.4 203.7L1922.6 203.8L1923.7 204.0L1924.7 204.1L1925.6 204.2L1926.5 204.3L1927.3 204.4L1928.1 204.5L1929.0 204.6L1929.8 204.8L1930.6 204.8L1931.2 204.9L1931.6 205.0L1931.9 205.0L1932.2 205.1L1932.4 205.1L1932.6 205.1L1932.8 205.1L1932.8 205.1L1932.8 205.1Z"/></clipPath><clipPath id="pr"><rect x="1231" y="118" width="677" height="568"/></clipPath><clipPath id="tri"><path d="M1738.0 189.6L1370.5 152.0L1427.4 536.0Z"/></clipPath>
<linearGradient id="id0"><stop offset="0" stop-color="#629900"/><stop offset=".8259" stop-color="#999600"/><stop offset="1" stop-color="#998a00"/></linearGradient><linearGradient id="id1"><stop offset="0" stop-color="#639900"/><stop offset=".8125" stop-color="#999600"/><stop offset="1" stop-color="#998900"/></linearGradient><linearGradient id="id2"><stop offset="0" stop-color="#649900"/><stop offset=".7946" stop-color="#999600"/><stop offset="1" stop-color="#980"/></linearGradient><linearGradient id="id3"><stop offset="0" stop-color="#659900"/><stop offset=".7812" stop-color="#999600"/><stop offset="1" stop-color="#998700"/></linearGradient><linearGradient id="id4"><stop offset="0" stop-color="#659900"/><stop offset=".7679" stop-color="#999600"/><stop offset="1" stop-color="#998600"/></linearGradient><linearGradient id="id5"><stop offset="0" stop-color="#669901"/><stop offset=".75" stop-color="#999600"/><stop offset="1" stop-color="#998500"/></linearGradient><linearGradient id="id6"><stop offset="0" stop-color="#679901"/><stop offset=".7366" stop-color="#999600"/><stop offset="1" stop-color="#998400"/></linearGradient><linearGradient id="id7"><stop offset="0" stop-color="#689902"/><stop offset=".7232" stop-color="#999600"/><stop offset="1" stop-color="#998300"/></linearGradient><linearGradient id="id8"><stop offset="0" stop-color="#699902"/><stop offset=".7098" stop-color="#999600"/><stop offset="1" stop-color="#998200"/></linearGradient><linearGradient id="id9"><stop offset="0" stop-color="#6a9902"/><stop offset=".692" stop-color="#999600"/><stop offset="1" stop-color="#998100"/></linearGradient><linearGradient id="id10"><stop offset="0" stop-color="#6a9903"/><stop offset=".6786" stop-color="#999600"/><stop offset="1" stop-color="#998000"/></linearGradient><linearGradient id="id11"><stop offset="0" stop-color="#6b9903"/><stop offset=".6652" stop-color="#999600"/><stop offset="1" stop-color="#997f00"/></linearGradient><linearGradient id="id12"><stop offset="0" stop-color="#6c9904"/><stop offset=".6473" stop-color="#999600"/><stop offset="1" stop-color="#997f00"/></linearGradient><linearGradient id="id13"><stop offset="0" stop-color="#6d9904"/><stop offset=".6339" stop-color="#999600"/><stop offset="1" stop-color="#997e00"/></linearGradient><linearGradient id="id14"><stop offset="0" stop-color="#6e9905"/><stop offset=".6205" stop-color="#999600"/><stop offset="1" stop-color="#997d00"/></linearGradient><linearGradient id="id15"><stop offset="0" stop-color="#6f9905"/><stop offset=".6027" stop-color="#999600"/><stop offset="1" stop-color="#997c00"/></linearGradient><linearGradient id="id16"><stop offset="0" stop-color="#709906"/><stop offset=".5893" stop-color="#999600"/><stop offset="1" stop-color="#997b00"/></linearGradient><linearGradient id="id17"><stop offset="0" stop-color="#719906"/><stop offset=".5759" stop-color="#999600"/><stop offset="1" stop-color="#997a00"/></linearGradient><linearGradient id="id18"><stop offset="0" stop-color="#729907"/><stop offset=".558" stop-color="#999600"/><stop offset="1" stop-color="#997900"/></linearGradient><linearGradient id="id19"><stop offset="0" stop-color="#739907"/><stop offset=".5446" stop-color="#999600"/><stop offset="1" stop-color="#997800"/></linearGradient><linearGradient id="id20"><stop offset="0" stop-color="#739908"/><stop offset=".5312" stop-color="#999600"/><stop offset="1" stop-color="#970"/></linearGradient><linearGradient id="id21"><stop offset="0" stop-color="#749909"/><stop offset=".5179" stop-color="#999600"/><stop offset="1" stop-color="#997600"/></linearGradient><linearGradient id="id22"><stop offset="0" stop-color="#759909"/><stop offset=".5" stop-color="#999601"/><stop offset="1" stop-color="#997500"/></linearGradient><linearGradient id="id23"><stop offset="0" stop-color="#76990a"/><stop offset=".4866" stop-color="#999602"/><stop offset="1" stop-color="#997500"/></linearGradient><linearGradient id="id24"><stop offset="0" stop-color="#77990a"/><stop offset=".4732" stop-color="#999602"/><stop offset="1" stop-color="#997400"/></linearGradient><linearGradient id="id25"><stop offset="0" stop-color="#78990b"/><stop offset=".4554" stop-color="#999603"/><stop offset="1" stop-color="#997300"/></linearGradient><linearGradient id="id26"><stop offset="0" stop-color="#79990b"/><stop offset=".442" stop-color="#999604"/><stop offset="1" stop-color="#997200"/></linearGradient><linearGradient id="id27"><stop offset="0" stop-color="#7a990c"/><stop offset=".4286" stop-color="#999605"/><stop offset="1" stop-color="#997100"/></linearGradient><linearGradient id="id28"><stop offset="0" stop-color="#7b990c"/><stop offset=".4152" stop-color="#999606"/><stop offset="1" stop-color="#997000"/></linearGradient><linearGradient id="id29"><stop offset="0" stop-color="#7c990d"/><stop offset=".3973" stop-color="#999606"/><stop offset="1" stop-color="#996f00"/></linearGradient><linearGradient id="id30"><stop offset="0" stop-color="#7d990e"/><stop offset=".3839" stop-color="#999607"/><stop offset="1" stop-color="#996e00"/></linearGradient><linearGradient id="id31"><stop offset="0" stop-color="#7e990e"/><stop offset=".3705" stop-color="#999608"/><stop offset="1" stop-color="#996e00"/></linearGradient><linearGradient id="id32"><stop offset="0" stop-color="#80990f"/><stop offset=".3527" stop-color="#999609"/><stop offset="1" stop-color="#996d00"/></linearGradient><linearGradient id="id33"><stop offset="0" stop-color="#81990f"/><stop offset=".3393" stop-color="#99960a"/><stop offset="1" stop-color="#996c00"/></linearGradient><linearGradient id="id34"><stop offset="0" stop-color="#829910"/><stop offset=".3259" stop-color="#99960a"/><stop offset="1" stop-color="#996b00"/></linearGradient><linearGradient id="id35"><stop offset="0" stop-color="#839911"/><stop offset=".3125" stop-color="#99960b"/><stop offset="1" stop-color="#996a00"/></linearGradient><linearGradient id="id36"><stop offset="0" stop-color="#849911"/><stop offset=".2946" stop-color="#99960c"/><stop offset="1" stop-color="#996900"/></linearGradient><linearGradient id="id37"><stop offset="0" stop-color="#859912"/><stop offset=".2812" stop-color="#99960d"/><stop offset=".9911" stop-color="#996900"/><stop offset="1" stop-color="#996800"/></linearGradient><linearGradient id="id38"><stop offset="0" stop-color="#869912"/><stop offset=".2679" stop-color="#99960e"/><stop offset=".9777" stop-color="#996901"/><stop offset="1" stop-color="#996801"/></linearGradient><linearGradient id="id39"><stop offset="0" stop-color="#879913"/><stop offset=".2545" stop-color="#99950f"/><stop offset=".9598" stop-color="#996902"/><stop offset="1" stop-color="#996701"/></linearGradient><linearGradient id="id40"><stop offset="0" stop-color="#889914"/><stop offset=".2411" stop-color="#99950f"/><stop offset=".9464" stop-color="#996902"/><stop offset="1" stop-color="#996601"/></linearGradient><linearGradient id="ib0"><stop offset="0" stop-color="#a4ff00"/><stop offset=".808" stop-color="#fffc00"/><stop offset="1" stop-color="#ffe600"/></linearGradient><linearGradient id="ib1"><stop offset="0" stop-color="#a5ff00"/><stop offset=".7946" stop-color="#fffc00"/><stop offset="1" stop-color="#ffe400"/></linearGradient><linearGradient id="ib2"><stop offset="0" stop-color="#a6ff00"/><stop offset=".7768" stop-color="#fffc00"/><stop offset="1" stop-color="#ffe300"/></linearGradient><linearGradient id="ib3"><stop offset="0" stop-color="#a8ff00"/><stop offset=".7634" stop-color="#fffc00"/><stop offset="1" stop-color="#ffe100"/></linearGradient><linearGradient id="ib4"><stop offset="0" stop-color="#a9ff00"/><stop offset=".75" stop-color="#fffc00"/><stop offset="1" stop-color="#ffe000"/></linearGradient><linearGradient id="ib5"><stop offset="0" stop-color="#aaff01"/><stop offset=".7321" stop-color="#fffc00"/><stop offset="1" stop-color="#ffde00"/></linearGradient><linearGradient id="ib6"><stop offset="0" stop-color="#acff02"/><stop offset=".7188" stop-color="#fffc00"/><stop offset="1" stop-color="#ffdc00"/></linearGradient><linearGradient id="ib7"><stop offset="0" stop-color="#adff03"/><stop offset=".7054" stop-color="#fffc00"/><stop offset="1" stop-color="#ffdb00"/></linearGradient><linearGradient id="ib8"><stop offset="0" stop-color="#afff03"/><stop offset=".692" stop-color="#fffc00"/><stop offset="1" stop-color="#ffd900"/></linearGradient><linearGradient id="ib9"><stop offset="0" stop-color="#b0ff04"/><stop offset=".6027" stop-color="#f9ff00"/><stop offset=".6964" stop-color="#fff900"/><stop offset="1" stop-color="#ffd800"/></linearGradient><linearGradient id="ib10"><stop offset="0" stop-color="#b1ff05"/><stop offset=".4911" stop-color="#ecff00"/><stop offset=".6652" stop-color="#fffc00"/><stop offset="1" stop-color="#ffd600"/></linearGradient><linearGradient id="ib11"><stop offset="0" stop-color="#b3ff06"/><stop offset=".4643" stop-color="#ebff00"/><stop offset=".6473" stop-color="#fffc00"/><stop offset="1" stop-color="#ffd400"/></linearGradient><linearGradient id="ib12"><stop offset="0" stop-color="#b4ff07"/><stop offset=".4688" stop-color="#edff00"/><stop offset=".6339" stop-color="#fffc00"/><stop offset="1" stop-color="#ffd300"/></linearGradient><linearGradient id="ib13"><stop offset="0" stop-color="#b6ff07"/><stop offset=".4777" stop-color="#f0ff00"/><stop offset=".6205" stop-color="#fffc00"/><stop offset="1" stop-color="#ffd100"/></linearGradient><linearGradient id="ib14"><stop offset="0" stop-color="#b7ff08"/><stop offset=".4955" stop-color="#f4ff00"/><stop offset=".6116" stop-color="#fffb00"/><stop offset="1" stop-color="#ffd000"/></linearGradient><linearGradient id="ib15"><stop offset="0" stop-color="#b9ff09"/><stop offset=".5134" stop-color="#f8ff00"/><stop offset=".6071" stop-color="#fffa00"/><stop offset="1" stop-color="#ffce00"/></linearGradient><linearGradient id="ib16"><stop offset="0" stop-color="#baff0a"/><stop offset=".5357" stop-color="#fdff00"/><stop offset="1" stop-color="#ffcd00"/></linearGradient><linearGradient id="ib17"><stop offset="0" stop-color="#bcff0b"/><stop offset=".558" stop-color="#fffc00"/><stop offset="1" stop-color="#ffcb00"/></linearGradient><linearGradient id="ib18"><stop offset="0" stop-color="#bdff0c"/><stop offset=".5446" stop-color="#fffc00"/><stop offset="1" stop-color="#ffca00"/></linearGradient><linearGradient id="ib19"><stop offset="0" stop-color="#bfff0c"/><stop offset=".5268" stop-color="#fffc00"/><stop offset="1" stop-color="#ffc800"/></linearGradient><linearGradient id="ib20"><stop offset="0" stop-color="#c0ff0d"/><stop offset=".5134" stop-color="#fffc00"/><stop offset="1" stop-color="#ffc700"/></linearGradient><linearGradient id="ib21"><stop offset="0" stop-color="#c2ff0e"/><stop offset=".5" stop-color="#fffc01"/><stop offset="1" stop-color="#ffc500"/></linearGradient><linearGradient id="ib22"><stop offset="0" stop-color="#c4ff0f"/><stop offset=".4821" stop-color="#fffc02"/><stop offset="1" stop-color="#ffc400"/></linearGradient><linearGradient id="ib23"><stop offset="0" stop-color="#c5ff10"/><stop offset=".4688" stop-color="#fffc03"/><stop offset="1" stop-color="#ffc200"/></linearGradient><linearGradient id="ib24"><stop offset="0" stop-color="#c7ff11"/><stop offset=".4554" stop-color="#fffc05"/><stop offset=".9152" stop-color="#ffc800"/><stop offset="1" stop-color="#ffc100"/></linearGradient><linearGradient id="ib25"><stop offset="0" stop-color="#c9ff12"/><stop offset=".4375" stop-color="#fffc06"/><stop offset=".8571" stop-color="#fc0"/><stop offset="1" stop-color="#ffbf00"/></linearGradient><linearGradient id="ib26"><stop offset="0" stop-color="#caff13"/><stop offset=".4241" stop-color="#fffc07"/><stop offset=".8571" stop-color="#ffcb00"/><stop offset="1" stop-color="#ffbe00"/></linearGradient><linearGradient id="ib27"><stop offset="0" stop-color="#ccff14"/><stop offset=".4107" stop-color="#fffc09"/><stop offset=".8705" stop-color="#ffc800"/><stop offset="1" stop-color="#ffbc00"/></linearGradient><linearGradient id="ib28"><stop offset="0" stop-color="#ceff15"/><stop offset=".3973" stop-color="#fffc0a"/><stop offset=".8884" stop-color="#ffc500"/><stop offset="1" stop-color="#fb0"/></linearGradient><linearGradient id="ib29"><stop offset="0" stop-color="#cfff16"/><stop offset=".3795" stop-color="#fffc0b"/><stop offset=".9107" stop-color="#ffc100"/><stop offset="1" stop-color="#ffb900"/></linearGradient><linearGradient id="ib30"><stop offset="0" stop-color="#d1ff17"/><stop offset=".3661" stop-color="#fffc0d"/><stop offset=".8973" stop-color="#ffc100"/><stop offset="1" stop-color="#ffb800"/></linearGradient><linearGradient id="ib31"><stop offset="0" stop-color="#d3ff18"/><stop offset=".3527" stop-color="#fffc0e"/><stop offset=".8795" stop-color="#ffc100"/><stop offset="1" stop-color="#ffb700"/></linearGradient><linearGradient id="ib32"><stop offset="0" stop-color="#d5ff19"/><stop offset=".3348" stop-color="#fffc0f"/><stop offset=".8616" stop-color="#ffc100"/><stop offset="1" stop-color="#ffb500"/></linearGradient><linearGradient id="ib33"><stop offset="0" stop-color="#d6ff1a"/><stop offset=".3214" stop-color="#fffc11"/><stop offset=".8438" stop-color="#ffc101"/><stop offset="1" stop-color="#ffb400"/></linearGradient><linearGradient id="ib34"><stop offset="0" stop-color="#d8ff1b"/><stop offset=".308" stop-color="#fffc12"/><stop offset=".8304" stop-color="#ffc102"/><stop offset="1" stop-color="#ffb200"/></linearGradient><linearGradient id="ib35"><stop offset="0" stop-color="#daff1c"/><stop offset=".2946" stop-color="#fffc13"/><stop offset=".817" stop-color="#ffc103"/><stop offset="1" stop-color="#ffb100"/></linearGradient><linearGradient id="ib36"><stop offset="0" stop-color="#dcff1d"/><stop offset=".2768" stop-color="#fffc15"/><stop offset=".7946" stop-color="#ffc105"/><stop offset="1" stop-color="#ffb000"/></linearGradient><linearGradient id="ib37"><stop offset="0" stop-color="#deff1e"/><stop offset=".2634" stop-color="#fffc16"/><stop offset=".7812" stop-color="#ffc106"/><stop offset="1" stop-color="#ffae00"/></linearGradient><linearGradient id="ib38"><stop offset="0" stop-color="#dfff1f"/><stop offset=".25" stop-color="#fffc18"/><stop offset=".7634" stop-color="#ffc107"/><stop offset="1" stop-color="#ffad01"/></linearGradient><linearGradient id="ib39"><stop offset="0" stop-color="#e1ff20"/><stop offset=".2321" stop-color="#fffc19"/><stop offset=".7455" stop-color="#ffc108"/><stop offset="1" stop-color="#ffab02"/></linearGradient><linearGradient id="ib40"><stop offset="0" stop-color="#e3ff21"/><stop offset=".2188" stop-color="#fffc1b"/><stop offset=".7277" stop-color="#ffc109"/><stop offset="1" stop-color="#ffaa02"/></linearGradient>
<clipPath id="inr"><rect x="1678.4" y="512" width="222.9" height="164"/></clipPath>
<clipPath id="inb"><path d="M1676.4 527.92L1903.3 660.47V700H1676.4z"/></clipPath>
<linearGradient id="rr" x1="0" y1="0" x2="0" y2="1"><stop offset="0" stop-color="#ff1010"/><stop offset="0.5" stop-color="#f00808"/><stop offset="1" stop-color="#a00000"/></linearGradient>
<linearGradient id="gg" x1="0" y1="0" x2="0" y2="1"><stop offset="0" stop-color="#088808"/><stop offset="0.5" stop-color="#0a800a"/><stop offset="1" stop-color="#065006"/></linearGradient>
<linearGradient id="bb" x1="0" y1="0" x2="0" y2="1"><stop offset="0" stop-color="#1010ff"/><stop offset="0.5" stop-color="#0808f0"/><stop offset="1" stop-color="#0000a0"/></linearGradient>
<linearGradient id="th" x1="0" y1="0" x2="0" y2="1"><stop offset="0" stop-color="#2c2c2c"/><stop offset="0.49" stop-color="#262626"/><stop offset="0.51" stop-color="#161616"/><stop offset="1" stop-color="#0e0e0e"/></linearGradient>
<linearGradient id="rh" x1="0" y1="0" x2="0" y2="1"><stop offset="0" stop-color="#323232"/><stop offset="0.5" stop-color="#282828"/><stop offset="1" stop-color="#1e1e1e"/></linearGradient>
<linearGradient id="bs" x1="0" y1="0" x2="0" y2="1"><stop offset="0" stop-color="#1e1e1e"/><stop offset="0.04" stop-color="#242424"/><stop offset="0.08" stop-color="#474747"/><stop offset="0.5" stop-color="#383838"/><stop offset="1" stop-color="#2a2a2a"/></linearGradient>
<linearGradient id="bsh"><stop offset="0" stop-color="#242424"/><stop offset="1" stop-color="#242424" stop-opacity="0"/></linearGradient>
<linearGradient id="b0" x1="0" y1="0" x2="0" y2="1"><stop offset="0" stop-color="#8a8a8a"/><stop offset="0.1" stop-color="#707070"/><stop offset="1" stop-color="#5a5a5a"/></linearGradient>
<linearGradient id="b1" x1="0" y1="0" x2="0" y2="1"><stop offset="0" stop-color="#7c7c7c"/><stop offset="0.08" stop-color="#6c6c6c"/><stop offset="1" stop-color="#565656"/></linearGradient>
<linearGradient id="nb" x1="0" y1="0" x2="0" y2="1"><stop offset="0" stop-color="#bcbcbc"/><stop offset="0.1" stop-color="#a2a2a2"/><stop offset="1" stop-color="#727272"/></linearGradient>
<linearGradient id="sb" x1="0" y1="0" x2="0" y2="1"><stop offset="0" stop-color="#8c8c8c"/><stop offset="1" stop-color="#5c5c5c"/></linearGradient>
</defs>
<rect x="0" y="0" width="1920" height="1058" fill="#333"/>
<rect x="0" y="17" width="1920" height="49" fill="#222"/>
<rect x="0" y="0" width="1920" height="17" fill="#00b6c4"/>
<rect x="0" y="16" width="1920" height="1" fill="#00c6d6"/>
<rect x="0" y="17" width="1920" height="1.2" fill="#281c1c"/>
<circle cx="7.5" cy="8.5" r="5.6" fill="#111"/>
<g fill="none" stroke-width=".8"><circle cx="7.5" cy="8.5" r="5.1" stroke="#d33" stroke-dasharray="8 24.04"/><circle cx="7.5" cy="8.5" r="5.1" stroke="#3b3" stroke-dasharray="8 24.04" stroke-dashoffset="-8"/><circle cx="7.5" cy="8.5" r="5.1" stroke="#36d" stroke-dasharray="8 24.04" stroke-dashoffset="-16"/><circle cx="7.5" cy="8.5" r="5.1" stroke="#cc3" stroke-dasharray="8 24.04" stroke-dashoffset="-24"/></g>
<text x="4.02" y="10.3" font-size="4.6" fill="#fff" font-weight="bold" textLength="7.08" lengthAdjust="spacingAndGlyphs">CM</text>
<text x="17.36" y="11.8" font-size="9" fill="#0a1a1c" textLength="257.48" lengthAdjust="spacingAndGlyphs">CalMAN 2019 CalMAN Ultimate for Business 287 Days Remaining</text>
<line x1="1829" y1="7.8" x2="1837" y2="7.8" stroke="#10282c" stroke-width="1.2"/>
<path d="M1863.6 5.7h5.200v5.200h-5.200zM1865.4 5.700v-1.700h5.400v5.400h-2" fill="none" stroke="#10282c" stroke-width="1.1"/>
<path d="M1897.4 3.900l7.800 7.300M1905.2 3.900l-7.800 7.300" stroke="#10282c" stroke-width="1.1" fill="none"/>
<rect x="142" y="26.2" width="1778" height="4.6" fill="#1c2018"/>
<rect x="142" y="26.9" width="1778" height="3.2" fill="url(#rb)"/>
<path d="M0 17h137v19q0 4-4 4H4q-4 0-4-4z" fill="#111"/>
<path d="M1 17h135.5v18.5q0 3.5-3.5 3.5H4q-3 0-3-3.500z" fill="url(#cb)"/>
<text x="8.75" y="36" font-size="22.5" fill="#fff" font-weight="bold" textLength="100.24" lengthAdjust="spacingAndGlyphs">CalMAN</text>
<circle cx="124.2" cy="28.4" r="7.3" fill="url(#cbd)"/>
<path d="M120.7 26.6h7l-3.5 3.800z" fill="#fff"/>
<path d="M0 44h145q4 0 4 4v1010H0z" fill="#555"/>
<rect x="149.6" y="66" width="1.4" height="992" fill="#2a2a2a"/>
<circle cx="13.800" cy="53.6" r="7" fill="url(#lb)"/>
<circle cx="13.6" cy="53.2" r="2.300" fill="url(#lbk)"/>
<circle cx="135.6" cy="53.6" r="7.2" fill="url(#lb)"/>
<path d="M137.6 49.8v6.800l-4-3.400z" fill="#fff"/>
<text x="6.18" y="75.9" font-size="10" fill="#eee" textLength="48.12" lengthAdjust="spacingAndGlyphs">SDR Toolkit</text>
<rect x="7" y="79" width="136" height="188" fill="url(#tb)"/>
<rect x="7" y="79" width="1.2" height="188" fill="#1a1a1a"/>
<rect x="141.8" y="79" width="1.2" height="188" fill="#1a1a1a"/>
<rect x="30.7" y="196" width="68.5" height="11" fill="#f4f4f4"/>
<text x="21.7" y="93.4" font-size="9" fill="#fff" font-weight="bold" textLength="34.76" lengthAdjust="spacingAndGlyphs">Welcome</text>
<text x="31.4" y="105.4" font-size="9" fill="#fff" textLength="34.63" lengthAdjust="spacingAndGlyphs">Welcome</text>
<text x="31.01" y="116" font-size="9" fill="#fff" textLength="29.5" lengthAdjust="spacingAndGlyphs">Options</text>
<text x="21.51" y="127.4" font-size="9" fill="#fff" font-weight="bold" textLength="30.77" lengthAdjust="spacingAndGlyphs">Analysis</text>
<text x="30.75" y="139.2" font-size="9" fill="#fff" textLength="57.46" lengthAdjust="spacingAndGlyphs">Dynamic Range</text>
<text x="31" y="149.9" font-size="9" fill="#fff" textLength="54" lengthAdjust="spacingAndGlyphs">Grayscale - 2pt</text>
<text x="30.99" y="161" font-size="9" fill="#fff" textLength="62.17" lengthAdjust="spacingAndGlyphs">Grayscale - Multi</text>
<text x="30.99" y="172.3" font-size="9" fill="#fff" textLength="47.04" lengthAdjust="spacingAndGlyphs">Color Gamut</text>
<text x="31.13" y="182.5" font-size="9" fill="#fff" textLength="26.22" lengthAdjust="spacingAndGlyphs">3D LUT</text>
<text x="31" y="194" font-size="9" fill="#fff" textLength="49.41" lengthAdjust="spacingAndGlyphs">ColorChecker</text>
<text x="31.04" y="204.9" font-size="9" fill="#444" textLength="67.74" lengthAdjust="spacingAndGlyphs">Saturation Sweeps</text>
<text x="30.75" y="216" font-size="9" fill="#fff" textLength="70.41" lengthAdjust="spacingAndGlyphs">Luminance Sweeps</text>
<text x="31.02" y="227.1" font-size="9" fill="#fff" textLength="66.59" lengthAdjust="spacingAndGlyphs">Screen Uniformity</text>
<text x="31.03" y="238.4" font-size="9" fill="#fff" textLength="64.66" lengthAdjust="spacingAndGlyphs">Screen Angularity</text>
<text x="31.04" y="249.1" font-size="9" fill="#fff" textLength="56.35" lengthAdjust="spacingAndGlyphs">Screen Stability</text>
<text x="31.03" y="260.2" font-size="9" fill="#fff" textLength="73.89" lengthAdjust="spacingAndGlyphs">Spectral Power Dist.</text>
<path d="M16.5 89.500l-2.500 2.500h2.500zM16.5 123.5l-2.500 2.500h2.500z" fill="#666"/>
<path d="M151 66V47q0-3 3-3h61q3 0 3 3v19z" fill="url(#ht)" stroke="#4e4e4e" stroke-width="1"/>
<line x1="193" y1="45" x2="193" y2="66" stroke="#555" stroke-width="1.5"/>
<text x="153.66" y="58.6" font-size="9.3" fill="#eee" textLength="36.36" lengthAdjust="spacingAndGlyphs">History 1</text>
<circle cx="205.4" cy="56.2" r="7" fill="#404040"/>
<path d="M203.2 56.2h4.400M205.4 54v4.400" stroke="#777" stroke-width=".9"/>
<path d="M1551 66V47q0-3 3-3h101.5q3 0 3 3v19z" fill="url(#tt)"/>
<path d="M1551 66V47q0-2.500 2.500-3h1.700v22z" fill="#10e010"/>
<path d="M1662.5 66V47q0-3 3-3h91.5q3 0 3 3v19z" fill="url(#tt)"/>
<path d="M1662.5 66V47q0-2.500 2.500-3h1.700v22z" fill="#f0e000"/>
<path d="M1764 66V47q0-3 3-3h102q3 0 3 3v19z" fill="url(#tt)"/>
<path d="M1764 66V47q0-2.500 2.500-3h1.700v22z" fill="#f0e000"/>
<line x1="1631.5" y1="46" x2="1631.5" y2="66" stroke="#4a4a4a" stroke-width="1"/>
<text x="1556.44" y="52.5" font-size="8.6" fill="#fff" textLength="50.53" lengthAdjust="spacingAndGlyphs">X-Rite i1Pro 2</text>
<text x="1555.91" y="62.8" font-size="8.6" fill="#fff" textLength="43.28" lengthAdjust="spacingAndGlyphs">Direct View</text>
<text x="1668.64" y="52.5" font-size="8.6" fill="#fff" textLength="25.51" lengthAdjust="spacingAndGlyphs">Source</text>
<text x="1770.14" y="52.5" font-size="8.6" fill="#fff" textLength="80.36" lengthAdjust="spacingAndGlyphs">Direct Display Control</text>
<circle cx="1616.5" cy="55.4" r="6.800" fill="#585858"/>
<path d="M1613.3 54h6.400l-3.200 3.600z" fill="#fff"/>
<circle cx="1747.5" cy="55.4" r="6.800" fill="#585858"/>
<path d="M1744.3 54h6.400l-3.200 3.600z" fill="#fff"/>
<circle cx="1859.8" cy="55.4" r="6.800" fill="#585858"/>
<path d="M1856.6 54h6.400l-3.200 3.600z" fill="#fff"/>
<circle cx="1646.8" cy="54.8" r="10" fill="#0000f0" stroke="#dde" stroke-width=".8"/>
<text x="1640.68" y="57.6" font-size="7.6" fill="#fff" font-weight="bold" textLength="12.31" lengthAdjust="spacingAndGlyphs">236</text>
<rect x="1874.3" y="43.6" width="24.6" height="21.2" fill="url(#gb)" rx="3.2" stroke="#b4b4b4" stroke-width="0.9"/>
<rect x="1900.4" y="43.6" width="24.6" height="21.2" fill="url(#gb)" rx="3.2" stroke="#b4b4b4" stroke-width="0.9"/>
<circle cx="1886.9" cy="54.1" r="7.200" fill="url(#gc)"/><circle cx="1910.3" cy="54.1" r="7.200" fill="url(#gc)"/>
<path d="M1886.12 50.48L1886.22 49.05L1887.58 49.05L1887.68 50.48L1888.91 50.99L1889.99 50.05L1890.95 51.01L1890.01 52.09L1890.52 53.32L1891.95 53.42L1891.95 54.78L1890.52 54.88L1890.01 56.11L1890.95 57.19L1889.99 58.15L1888.91 57.21L1887.68 57.72L1887.58 59.15L1886.22 59.15L1886.12 57.72L1884.89 57.21L1883.81 58.15L1882.85 57.19L1883.79 56.11L1883.28 54.88L1881.85 54.78L1881.85 53.42L1883.28 53.32L1883.79 52.09L1882.85 51.01L1883.81 50.05L1884.89 50.99ZM1885.00 54.10a1.90 1.90 0 1 0 3.80 0a1.90 1.90 0 1 0 -3.80 0z" fill="#f4f4f4" fill-rule="evenodd"/>
<path d="M1907.6 54.1l4.600-4.200v8.200z" fill="#fff"/>
<text x="157.29" y="124.8" font-size="47" fill="#f2f2f2" textLength="355.46" lengthAdjust="spacingAndGlyphs">Saturation Sweeps</text>
<text x="742.32" y="115" font-size="22.5" fill="#f2f2f2" textLength="66.54" lengthAdjust="spacingAndGlyphs">Levels:</text>
<rect x="815.5" y="92" width="359.5" height="28" fill="url(#dd1)" stroke="#2c2c2c" stroke-width="1"/>
<g clip-path="url(#lvc)">
<text x="820.18" y="115.7" font-size="18.5" fill="#f2f2f2" textLength="95.73" lengthAdjust="spacingAndGlyphs">20% Sweeps</text>
</g>
<path d="M1159.3 104.2h9.400l-4.700 5.400z" fill="#000"/>
<text x="280.85" y="185.9" font-size="22.6" fill="#f2f2f2" textLength="115.99" lengthAdjust="spacingAndGlyphs">dE Formula:</text>
<rect x="404.5" y="163" width="142" height="29" fill="url(#dd1)" stroke="#2c2c2c" stroke-width="1"/>
<text x="408.64" y="185.9" font-size="18.5" fill="#f2f2f2" textLength="38.26" lengthAdjust="spacingAndGlyphs">2000</text>
<path d="M531.3 175h9.800l-4.900 6z" fill="#000"/>
<text x="299.26" y="223.4" font-size="16" fill="#e4e4e4" textLength="85.27" lengthAdjust="spacingAndGlyphs">DeltaE 2000</text>
<rect x="195.5" y="229" width="331.1" height="446.2" fill="#232323"/>
<line x1="239.64" y1="229" x2="239.64" y2="675.2" stroke="#9a9a9a" stroke-width="1.3"/>
<line x1="283.78" y1="229" x2="283.78" y2="675.2" stroke="#9a9a9a" stroke-width="1.3"/>
<line x1="327.92" y1="229" x2="327.92" y2="675.2" stroke="#9a9a9a" stroke-width="1.3"/>
<line x1="372.06" y1="229" x2="372.06" y2="675.2" stroke="#9a9a9a" stroke-width="1.3"/>
<line x1="416.2" y1="229" x2="416.2" y2="675.2" stroke="#9a9a9a" stroke-width="1.3"/>
<line x1="460.34" y1="229" x2="460.34" y2="675.2" stroke="#9a9a9a" stroke-width="1.3"/>
<line x1="504.48" y1="229" x2="504.48" y2="675.2" stroke="#9a9a9a" stroke-width="1.3"/>
<path d="M195.5 229V675.2H526.6V229H189.5" fill="none" stroke="#a8a8a8" stroke-width="1.600"/>
<line x1="189.5" y1="229.3" x2="195.5" y2="229.3" stroke="#a8a8a8" stroke-width="1.4"/>
<line x1="189.5" y1="304.2" x2="195.5" y2="304.2" stroke="#a8a8a8" stroke-width="1.4"/>
<line x1="189.5" y1="378.4" x2="195.5" y2="378.4" stroke="#a8a8a8" stroke-width="1.4"/>
<line x1="189.5" y1="452" x2="195.5" y2="452" stroke="#a8a8a8" stroke-width="1.4"/>
<line x1="189.5" y1="526" x2="195.5" y2="526" stroke="#a8a8a8" stroke-width="1.4"/>
<line x1="189.5" y1="602" x2="195.5" y2="602" stroke="#a8a8a8" stroke-width="1.4"/>
<line x1="189.5" y1="675.2" x2="195.5" y2="675.2" stroke="#a8a8a8" stroke-width="1.4"/>
<line x1="195.5" y1="675.2" x2="195.5" y2="680.2" stroke="#a8a8a8" stroke-width="1.4"/>
<text x="191" y="700.2" font-size="16.2" fill="#e4e4e4">0</text>
<line x1="239.64" y1="675.2" x2="239.64" y2="680.2" stroke="#a8a8a8" stroke-width="1.4"/>
<text x="235.1" y="700.2" font-size="16.2" fill="#e4e4e4">2</text>
<line x1="283.78" y1="675.2" x2="283.78" y2="680.2" stroke="#a8a8a8" stroke-width="1.4"/>
<text x="279.32" y="700.2" font-size="16.2" fill="#e4e4e4">4</text>
<line x1="327.92" y1="675.2" x2="327.92" y2="680.2" stroke="#a8a8a8" stroke-width="1.4"/>
<text x="323.34" y="700.2" font-size="16.2" fill="#e4e4e4">6</text>
<line x1="372.06" y1="675.2" x2="372.06" y2="680.2" stroke="#a8a8a8" stroke-width="1.4"/>
<text x="367.56" y="700.2" font-size="16.2" fill="#e4e4e4">8</text>
<line x1="416.2" y1="675.2" x2="416.2" y2="680.2" stroke="#a8a8a8" stroke-width="1.4"/>
<text x="406.88" y="700.2" font-size="16.2" fill="#e4e4e4" textLength="18.02" lengthAdjust="spacingAndGlyphs">10</text>
<line x1="460.34" y1="675.2" x2="460.34" y2="680.2" stroke="#a8a8a8" stroke-width="1.4"/>
<text x="451.01" y="700.2" font-size="16.2" fill="#e4e4e4" textLength="18.2" lengthAdjust="spacingAndGlyphs">12</text>
<line x1="504.48" y1="675.2" x2="504.48" y2="680.2" stroke="#a8a8a8" stroke-width="1.4"/>
<text x="495.18" y="700.2" font-size="16.2" fill="#e4e4e4" textLength="17.84" lengthAdjust="spacingAndGlyphs">14</text>
<text x="155.76" y="272.7" font-size="16.2" fill="#e4e4e4" textLength="38.73" lengthAdjust="spacingAndGlyphs">100%</text>
<text x="165.11" y="347.4" font-size="16.2" fill="#e4e4e4" textLength="29.42" lengthAdjust="spacingAndGlyphs">80%</text>
<text x="164.96" y="422.1" font-size="16.2" fill="#e4e4e4" textLength="29.58" lengthAdjust="spacingAndGlyphs">60%</text>
<text x="165.41" y="496.3" font-size="16.2" fill="#e4e4e4" textLength="29.12" lengthAdjust="spacingAndGlyphs">40%</text>
<text x="164.96" y="570.5" font-size="16.2" fill="#e4e4e4" textLength="29.58" lengthAdjust="spacingAndGlyphs">20%</text>
<text x="168.53" y="645.7" font-size="16.2" fill="#e4e4e4" textLength="26.07" lengthAdjust="spacingAndGlyphs">100</text>
<rect x="196.1" y="237.6" width="2.2" height="5" fill="#e02020"/>
<rect x="195.7" y="245.07" width="13.3" height="5.8" fill="url(#bg0)" stroke="#050505" stroke-width="1.3"/>
<rect x="195.7" y="252.94" width="21.4" height="5.8" fill="url(#bg1)" stroke="#050505" stroke-width="1.3"/>
<rect x="195.7" y="260.81" width="16.9" height="5.8" fill="url(#bg2)" stroke="#050505" stroke-width="1.3"/>
<rect x="196.1" y="269.08" width="2.2" height="5" fill="#d828d8"/>
<rect x="195.7" y="276.55" width="19.4" height="5.8" fill="url(#bg3)" stroke="#050505" stroke-width="1.3"/>
<rect x="195.7" y="311.5" width="5.1" height="5.8" fill="url(#bg4)" stroke="#050505" stroke-width="1.3"/>
<rect x="195.7" y="319.37" width="13.3" height="5.8" fill="url(#bg5)" stroke="#050505" stroke-width="1.3"/>
<rect x="195.7" y="327.24" width="8.3" height="5.8" fill="url(#bg6)" stroke="#050505" stroke-width="1.3"/>
<rect x="195.7" y="335.11" width="19.9" height="5.8" fill="url(#bg7)" stroke="#050505" stroke-width="1.3"/>
<rect x="195.7" y="342.98" width="5.1" height="5.8" fill="url(#bg8)" stroke="#050505" stroke-width="1.3"/>
<rect x="195.7" y="350.85" width="23" height="5.8" fill="url(#bg9)" stroke="#050505" stroke-width="1.3"/>
<rect x="196.3" y="385.6" width="0.8" height="6" fill="#111"/>
<rect x="195.7" y="393.57" width="15.6" height="5.8" fill="url(#bg10)" stroke="#050505" stroke-width="1.3"/>
<rect x="195.7" y="401.44" width="9.7" height="5.8" fill="url(#bg11)" stroke="#050505" stroke-width="1.3"/>
<rect x="195.7" y="409.31" width="23.1" height="5.8" fill="url(#bg12)" stroke="#050505" stroke-width="1.3"/>
<rect x="196.3" y="417.08" width="0.8" height="6" fill="#111"/>
<rect x="195.7" y="425.05" width="22.3" height="5.8" fill="url(#bg13)" stroke="#050505" stroke-width="1.3"/>
<rect x="195.7" y="460.9" width="3.6" height="5.8" fill="url(#bg14)" stroke="#050505" stroke-width="1.3"/>
<rect x="195.7" y="468.77" width="16.9" height="5.8" fill="url(#bg15)" stroke="#050505" stroke-width="1.3"/>
<rect x="195.7" y="476.64" width="14.2" height="5.8" fill="url(#bg16)" stroke="#050505" stroke-width="1.3"/>
<rect x="195.7" y="484.51" width="24.3" height="5.8" fill="url(#bg17)" stroke="#050505" stroke-width="1.3"/>
<rect x="195.7" y="492.38" width="14.2" height="5.8" fill="url(#bg18)" stroke="#050505" stroke-width="1.3"/>
<rect x="195.7" y="500.25" width="25.2" height="5.8" fill="url(#bg19)" stroke="#050505" stroke-width="1.3"/>
<rect x="195.7" y="535" width="16.9" height="5.8" fill="url(#bg20)" stroke="#050505" stroke-width="1.3"/>
<rect x="195.7" y="542.87" width="25.9" height="5.8" fill="url(#bg21)" stroke="#050505" stroke-width="1.3"/>
<rect x="195.7" y="550.74" width="27.4" height="5.8" fill="url(#bg22)" stroke="#050505" stroke-width="1.3"/>
<rect x="195.7" y="558.61" width="38.6" height="5.8" fill="url(#bg23)" stroke="#050505" stroke-width="1.3"/>
<rect x="195.7" y="566.48" width="13.2" height="5.8" fill="url(#bg24)" stroke="#050505" stroke-width="1.3"/>
<rect x="195.7" y="574.35" width="42" height="5.8" fill="url(#bg25)" stroke="#050505" stroke-width="1.3"/>
<rect x="195.7" y="655.9" width="68.7" height="5.8" fill="url(#wbar)" stroke="#050505" stroke-width="1.3"/>
<rect x="583.1" y="166.5" width="153" height="326.5" fill="#232323"/>
<line x1="583.1" y1="221.5" x2="736.1" y2="221.5" stroke="#9a9a9a" stroke-width="1.3"/>
<line x1="583.1" y1="276" x2="736.1" y2="276" stroke="#9a9a9a" stroke-width="1.3"/>
<line x1="583.1" y1="331.5" x2="736.1" y2="331.5" stroke="#9a9a9a" stroke-width="1.3"/>
<line x1="583.1" y1="385.3" x2="736.1" y2="385.3" stroke="#9a9a9a" stroke-width="1.3"/>
<line x1="583.1" y1="440.3" x2="736.1" y2="440.3" stroke="#9a9a9a" stroke-width="1.3"/>
<path d="M583.1 166.5H736.1V493H583.1V166.5z" fill="none" stroke="#a8a8a8" stroke-width="1.600"/>
<line x1="578.1" y1="166.5" x2="583.1" y2="166.5" stroke="#a8a8a8" stroke-width="1.4"/>
<text x="559.18" y="173.9" font-size="16.2" fill="#e4e4e4" textLength="18.11" lengthAdjust="spacingAndGlyphs">15</text>
<line x1="578.1" y1="221.5" x2="583.1" y2="221.5" stroke="#a8a8a8" stroke-width="1.4"/>
<text x="559.18" y="228.9" font-size="16.2" fill="#e4e4e4" textLength="18.02" lengthAdjust="spacingAndGlyphs">10</text>
<line x1="578.1" y1="276" x2="583.1" y2="276" stroke="#a8a8a8" stroke-width="1.4"/>
<text x="567.6" y="283.4" font-size="16.2" fill="#e4e4e4">5</text>
<line x1="578.1" y1="331.5" x2="583.1" y2="331.5" stroke="#a8a8a8" stroke-width="1.4"/>
<text x="567.7" y="338.9" font-size="16.2" fill="#e4e4e4">0</text>
<line x1="578.1" y1="385.3" x2="583.1" y2="385.3" stroke="#a8a8a8" stroke-width="1.4"/>
<text x="562.75" y="392.7" font-size="16.2" fill="#e4e4e4" textLength="14.49" lengthAdjust="spacingAndGlyphs">-5</text>
<line x1="578.1" y1="440.3" x2="583.1" y2="440.3" stroke="#a8a8a8" stroke-width="1.4"/>
<text x="554.37" y="447.7" font-size="16.2" fill="#e4e4e4" textLength="22.79" lengthAdjust="spacingAndGlyphs">-10</text>
<line x1="578.1" y1="493" x2="583.1" y2="493" stroke="#a8a8a8" stroke-width="1.4"/>
<text x="554.37" y="500.4" font-size="16.2" fill="#e4e4e4" textLength="22.87" lengthAdjust="spacingAndGlyphs">-15</text>
<line x1="583.1" y1="493" x2="583.1" y2="499" stroke="#a8a8a8" stroke-width="1.4"/>
<line x1="736.1" y1="493" x2="736.1" y2="499" stroke="#a8a8a8" stroke-width="1.4"/>
<text x="639.6" y="511.8" font-size="16.2" fill="#e4e4e4" textLength="39.36" lengthAdjust="spacingAndGlyphs">100%</text>
<text x="622.66" y="161" font-size="16.4" fill="#e4e4e4" textLength="44.92" lengthAdjust="spacingAndGlyphs">DeltaL</text>
<rect x="792.2" y="166.5" width="153.7" height="326.5" fill="#232323"/>
<line x1="792.2" y1="221.5" x2="945.9" y2="221.5" stroke="#9a9a9a" stroke-width="1.3"/>
<line x1="792.2" y1="276" x2="945.9" y2="276" stroke="#9a9a9a" stroke-width="1.3"/>
<line x1="792.2" y1="331.5" x2="945.9" y2="331.5" stroke="#9a9a9a" stroke-width="1.3"/>
<line x1="792.2" y1="385.3" x2="945.9" y2="385.3" stroke="#9a9a9a" stroke-width="1.3"/>
<line x1="792.2" y1="440.3" x2="945.9" y2="440.3" stroke="#9a9a9a" stroke-width="1.3"/>
<path d="M792.2 166.5H945.9V493H792.2V166.5z" fill="none" stroke="#a8a8a8" stroke-width="1.600"/>
<line x1="787.2" y1="166.5" x2="792.2" y2="166.5" stroke="#a8a8a8" stroke-width="1.4"/>
<text x="768.28" y="173.9" font-size="16.2" fill="#e4e4e4" textLength="18.11" lengthAdjust="spacingAndGlyphs">15</text>
<line x1="787.2" y1="221.5" x2="792.2" y2="221.5" stroke="#a8a8a8" stroke-width="1.4"/>
<text x="768.28" y="228.9" font-size="16.2" fill="#e4e4e4" textLength="18.02" lengthAdjust="spacingAndGlyphs">10</text>
<line x1="787.2" y1="276" x2="792.2" y2="276" stroke="#a8a8a8" stroke-width="1.4"/>
<text x="776.7" y="283.4" font-size="16.2" fill="#e4e4e4">5</text>
<line x1="787.2" y1="331.5" x2="792.2" y2="331.5" stroke="#a8a8a8" stroke-width="1.4"/>
<text x="776.8" y="338.9" font-size="16.2" fill="#e4e4e4">0</text>
<line x1="787.2" y1="385.3" x2="792.2" y2="385.3" stroke="#a8a8a8" stroke-width="1.4"/>
<text x="771.85" y="392.7" font-size="16.2" fill="#e4e4e4" textLength="14.49" lengthAdjust="spacingAndGlyphs">-5</text>
<line x1="787.2" y1="440.3" x2="792.2" y2="440.3" stroke="#a8a8a8" stroke-width="1.4"/>
<text x="763.47" y="447.7" font-size="16.2" fill="#e4e4e4" textLength="22.79" lengthAdjust="spacingAndGlyphs">-10</text>
<line x1="787.2" y1="493" x2="792.2" y2="493" stroke="#a8a8a8" stroke-width="1.4"/>
<text x="763.47" y="500.4" font-size="16.2" fill="#e4e4e4" textLength="22.87" lengthAdjust="spacingAndGlyphs">-15</text>
<line x1="792.2" y1="493" x2="792.2" y2="499" stroke="#a8a8a8" stroke-width="1.4"/>
<line x1="945.9" y1="493" x2="945.9" y2="499" stroke="#a8a8a8" stroke-width="1.4"/>
<text x="849.05" y="511.8" font-size="16.2" fill="#e4e4e4" textLength="39.36" lengthAdjust="spacingAndGlyphs">100%</text>
<text x="830.02" y="161" font-size="16.4" fill="#e4e4e4" textLength="48.87" lengthAdjust="spacingAndGlyphs">DeltaC</text>
<rect x="1001.6" y="166.5" width="153.7" height="326.5" fill="#232323"/>
<line x1="1001.6" y1="221.5" x2="1155.3" y2="221.5" stroke="#9a9a9a" stroke-width="1.3"/>
<line x1="1001.6" y1="276" x2="1155.3" y2="276" stroke="#9a9a9a" stroke-width="1.3"/>
<line x1="1001.6" y1="331.5" x2="1155.3" y2="331.5" stroke="#9a9a9a" stroke-width="1.3"/>
<line x1="1001.6" y1="385.3" x2="1155.3" y2="385.3" stroke="#9a9a9a" stroke-width="1.3"/>
<line x1="1001.6" y1="440.3" x2="1155.3" y2="440.3" stroke="#9a9a9a" stroke-width="1.3"/>
<path d="M1001.6 166.5H1155.3V493H1001.6V166.5z" fill="none" stroke="#a8a8a8" stroke-width="1.600"/>
<line x1="996.6" y1="166.5" x2="1001.6" y2="166.5" stroke="#a8a8a8" stroke-width="1.4"/>
<text x="977.68" y="173.9" font-size="16.2" fill="#e4e4e4" textLength="18.11" lengthAdjust="spacingAndGlyphs">15</text>
<line x1="996.6" y1="221.5" x2="1001.6" y2="221.5" stroke="#a8a8a8" stroke-width="1.4"/>
<text x="977.68" y="228.9" font-size="16.2" fill="#e4e4e4" textLength="18.02" lengthAdjust="spacingAndGlyphs">10</text>
<line x1="996.6" y1="276" x2="1001.6" y2="276" stroke="#a8a8a8" stroke-width="1.4"/>
<text x="986.1" y="283.4" font-size="16.2" fill="#e4e4e4">5</text>
<line x1="996.6" y1="331.5" x2="1001.6" y2="331.5" stroke="#a8a8a8" stroke-width="1.4"/>
<text x="986.2" y="338.9" font-size="16.2" fill="#e4e4e4">0</text>
<line x1="996.6" y1="385.3" x2="1001.6" y2="385.3" stroke="#a8a8a8" stroke-width="1.4"/>
<text x="981.25" y="392.7" font-size="16.2" fill="#e4e4e4" textLength="14.49" lengthAdjust="spacingAndGlyphs">-5</text>
<line x1="996.6" y1="440.3" x2="1001.6" y2="440.3" stroke="#a8a8a8" stroke-width="1.4"/>
<text x="972.87" y="447.7" font-size="16.2" fill="#e4e4e4" textLength="22.79" lengthAdjust="spacingAndGlyphs">-10</text>
<line x1="996.6" y1="493" x2="1001.6" y2="493" stroke="#a8a8a8" stroke-width="1.4"/>
<text x="972.87" y="500.4" font-size="16.2" fill="#e4e4e4" textLength="22.87" lengthAdjust="spacingAndGlyphs">-15</text>
<line x1="1001.6" y1="493" x2="1001.6" y2="499" stroke="#a8a8a8" stroke-width="1.4"/>
<line x1="1155.3" y1="493" x2="1155.3" y2="499" stroke="#a8a8a8" stroke-width="1.4"/>
<text x="1058.45" y="511.8" font-size="16.2" fill="#e4e4e4" textLength="39.36" lengthAdjust="spacingAndGlyphs">100%</text>
<text x="1038.69" y="161" font-size="16.4" fill="#e4e4e4" textLength="50.07" lengthAdjust="spacingAndGlyphs">DeltaH</text>
<rect x="598" y="328.3" width="122.5" height="1.8" fill="#050505"/>
<rect x="808.5" y="323.8" width="121" height="5.8" fill="url(#ybar)" stroke="#050505" stroke-width="1.3"/>
<rect x="1018" y="314.8" width="120.5" height="14.8" fill="url(#ybar)" stroke="#050505" stroke-width="1.3"/>
<rect x="547.7" y="524" width="628.5" height="187.7" fill="#000"/>
<rect x="570.5" y="532.8" width="104.5" height="151" fill="url(#sw0)" stroke="#f6f6f6" stroke-width="1.6"/>
<text x="609.51" y="702.7" font-size="14" fill="#fff" textLength="25.82" lengthAdjust="spacingAndGlyphs">20%</text>
<rect x="693" y="532.8" width="104.5" height="151" fill="url(#sw1)" stroke="#f6f6f6" stroke-width="1.6"/>
<text x="732.4" y="702.7" font-size="14" fill="#fff" textLength="25.42" lengthAdjust="spacingAndGlyphs">40%</text>
<rect x="815.5" y="532.8" width="104.5" height="151" fill="url(#sw2)" stroke="#f6f6f6" stroke-width="1.6"/>
<text x="854.51" y="702.7" font-size="14" fill="#fff" textLength="25.82" lengthAdjust="spacingAndGlyphs">60%</text>
<rect x="938.3" y="532.8" width="104.5" height="151" fill="url(#sw3)" stroke="#f6f6f6" stroke-width="1.6"/>
<text x="977.44" y="702.7" font-size="14" fill="#fff" textLength="25.68" lengthAdjust="spacingAndGlyphs">80%</text>
<rect x="1061.3" y="532.8" width="104.5" height="151" fill="url(#sw4)" stroke="#f6f6f6" stroke-width="1.6"/>
<text x="1096.48" y="702.7" font-size="14" fill="#fff" textLength="33.09" lengthAdjust="spacingAndGlyphs">100%</text>
<text transform="translate(562 586) rotate(-90)" font-size="14" fill="#fff" textLength="41" lengthAdjust="spacingAndGlyphs">Actual</text>
<text transform="translate(562 671) rotate(-90)" font-size="14" fill="#fff" textLength="39.5" lengthAdjust="spacingAndGlyphs">Target</text>
<rect x="1182" y="82" width="739" height="647" fill="#3a3a3a"/>
<rect x="1183" y="83" width="737" height="645" fill="#1a1a1a"/>
<rect x="1190" y="90" width="722" height="630" fill="#3c3c3c"/>
<rect x="1191" y="91" width="721" height="629" fill="#323232"/>
<text x="1505.94" y="111.7" font-size="16.4" fill="#e4e4e4" textLength="89.75" lengthAdjust="spacingAndGlyphs">CIE 1976 u'v'</text>
<rect x="1230" y="117" width="678" height="570" fill="#232323"/>
<g clip-path="url(#pr)"><g clip-path="url(#hs)"><rect x="1264" y="128" width="56" height="2" fill="url(#hd0)"/><rect x="1254" y="130" width="90" height="2" fill="url(#hd1)"/><rect x="1249" y="132" width="115" height="2" fill="url(#hd2)"/><rect x="1245" y="134" width="136" height="2" fill="url(#hd3)"/><rect x="1242" y="136" width="157" height="2" fill="url(#hd4)"/><rect x="1240" y="138" width="175" height="2" fill="url(#hd5)"/><rect x="1238" y="140" width="194" height="2" fill="url(#hd6)"/><rect x="1237" y="142" width="211" height="2" fill="url(#hd7)"/><rect x="1236" y="144" width="228" height="2" fill="url(#hd8)"/><rect x="1234" y="146" width="246" height="2" fill="url(#hd9)"/><rect x="1234" y="148" width="262" height="2" fill="url(#hd10)"/><rect x="1233" y="150" width="279" height="2" fill="url(#hd11)"/><rect x="1232" y="152" width="295" height="2" fill="url(#hd12)"/><rect x="1232" y="154" width="311" height="2" fill="url(#hd13)"/><rect x="1231" y="156" width="328" height="2" fill="url(#hd14)"/><rect x="1231" y="158" width="344" height="2" fill="url(#hd15)"/><rect x="1231" y="160" width="360" height="2" fill="url(#hd16)"/><rect x="1231" y="162" width="376" height="2" fill="url(#hd17)"/><rect x="1231" y="164" width="392" height="2" fill="url(#hd18)"/><rect x="1231" y="166" width="408" height="2" fill="url(#hd19)"/><rect x="1231" y="168" width="424" height="2" fill="url(#hd20)"/><rect x="1231" y="170" width="440" height="2" fill="url(#hd21)"/><rect x="1231" y="172" width="456" height="2" fill="url(#hd22)"/><rect x="1231" y="174" width="471" height="2" fill="url(#hd23)"/><rect x="1231" y="176" width="487" height="2" fill="url(#hd24)"/><rect x="1231" y="178" width="503" height="2" fill="url(#hd25)"/><rect x="1231" y="180" width="519" height="2" fill="url(#hd26)"/><rect x="1231" y="182" width="535" height="2" fill="url(#hd27)"/><rect x="1231" y="184" width="551" height="2" fill="url(#hd28)"/><rect x="1231" y="186" width="567" height="2" fill="url(#hd29)"/><rect x="1231" y="188" width="583" height="2" fill="url(#hd30)"/><rect x="1231" y="190" width="599" height="2" fill="url(#hd31)"/><rect x="1231" y="192" width="615" height="2" fill="url(#hd32)"/><rect x="1231" y="194" width="631" height="2" fill="url(#hd33)"/><rect x="1231" y="196" width="647" height="2" fill="url(#hd34)"/><rect x="1232" y="198" width="662" height="2" fill="url(#hd35)"/><rect x="1232" y="200" width="676" height="2" fill="url(#hd36)"/><rect x="1232" y="202" width="676" height="2" fill="url(#hd37)"/><rect x="1233" y="204" width="675" height="2" fill="url(#hd38)"/><rect x="1233" y="206" width="675" height="2" fill="url(#hd39)"/><rect x="1234" y="208" width="674" height="2" fill="url(#hd40)"/><rect x="1234" y="210" width="674" height="2" fill="url(#hd41)"/><rect x="1234" y="212" width="674" height="2" fill="url(#hd42)"/><rect x="1235" y="214" width="673" height="2" fill="url(#hd43)"/><rect x="1235" y="216" width="673" height="2" fill="url(#hd44)"/><rect x="1236" y="218" width="672" height="2" fill="url(#hd45)"/><rect x="1236" y="220" width="672" height="2" fill="url(#hd46)"/><rect x="1237" y="222" width="671" height="2" fill="url(#hd47)"/><rect x="1237" y="224" width="671" height="2" fill="url(#hd48)"/><rect x="1238" y="226" width="670" height="2" fill="url(#hd49)"/><rect x="1238" y="228" width="670" height="2" fill="url(#hd50)"/><rect x="1239" y="230" width="669" height="2" fill="url(#hd51)"/><rect x="1239" y="232" width="669" height="2" fill="url(#hd52)"/><rect x="1240" y="234" width="668" height="2" fill="url(#hd53)"/><rect x="1240" y="236" width="667" height="2" fill="url(#hd54)"/><rect x="1241" y="238" width="664" height="2" fill="url(#hd55)"/><rect x="1241" y="240" width="662" height="2" fill="url(#hd56)"/><rect x="1242" y="242" width="660" height="2" fill="url(#hd57)"/><rect x="1243" y="244" width="657" height="2" fill="url(#hd58)"/><rect x="1243" y="246" width="655" height="2" fill="url(#hd59)"/><rect x="1244" y="248" width="652" height="2" fill="url(#hd60)"/><rect x="1244" y="250" width="650" height="2" fill="url(#hd61)"/><rect x="1245" y="252" width="648" height="2" fill="url(#hd62)"/><rect x="1246" y="254" width="645" height="2" fill="url(#hd63)"/><rect x="1246" y="256" width="643" height="2" fill="url(#hd64)"/><rect x="1247" y="258" width="640" height="2" fill="url(#hd65)"/><rect x="1248" y="260" width="638" height="2" fill="url(#hd66)"/><rect x="1248" y="262" width="636" height="2" fill="url(#hd67)"/><rect x="1249" y="264" width="633" height="2" fill="url(#hd68)"/><rect x="1250" y="266" width="630" height="2" fill="url(#hd69)"/><rect x="1250" y="268" width="628" height="2" fill="url(#hd70)"/><rect x="1251" y="270" width="626" height="2" fill="url(#hd71)"/><rect x="1252" y="272" width="623" height="2" fill="url(#hd72)"/><rect x="1252" y="274" width="621" height="2" fill="url(#hd73)"/><rect x="1253" y="276" width="618" height="2" fill="url(#hd74)"/><rect x="1254" y="278" width="616" height="2" fill="url(#hd75)"/><rect x="1254" y="280" width="614" height="2" fill="url(#hd76)"/><rect x="1255" y="282" width="611" height="2" fill="url(#hd77)"/><rect x="1256" y="284" width="608" height="2" fill="url(#hd78)"/><rect x="1256" y="286" width="606" height="2" fill="url(#hd79)"/><rect x="1257" y="288" width="604" height="2" fill="url(#hd80)"/><rect x="1258" y="290" width="601" height="2" fill="url(#hd81)"/><rect x="1259" y="292" width="598" height="2" fill="url(#hd82)"/><rect x="1259" y="294" width="596" height="2" fill="url(#hd83)"/><rect x="1260" y="296" width="594" height="2" fill="url(#hd84)"/><rect x="1261" y="298" width="591" height="2" fill="url(#hd85)"/><rect x="1262" y="300" width="588" height="2" fill="url(#hd86)"/><rect x="1262" y="302" width="586" height="2" fill="url(#hd87)"/><rect x="1263" y="304" width="583" height="2" fill="url(#hd88)"/><rect x="1264" y="306" width="581" height="2" fill="url(#hd89)"/><rect x="1265" y="308" width="578" height="2" fill="url(#hd90)"/><rect x="1265" y="310" width="576" height="2" fill="url(#hd91)"/><rect x="1266" y="312" width="573" height="2" fill="url(#hd92)"/><rect x="1267" y="314" width="571" height="2" fill="url(#hd93)"/><rect x="1268" y="316" width="568" height="2" fill="url(#hd94)"/><rect x="1269" y="318" width="565" height="2" fill="url(#hd95)"/><rect x="1269" y="320" width="563" height="2" fill="url(#hd96)"/><rect x="1270" y="322" width="560" height="2" fill="url(#hd97)"/><rect x="1271" y="324" width="558" height="2" fill="url(#hd98)"/><rect x="1272" y="326" width="555" height="2" fill="url(#hd99)"/><rect x="1273" y="328" width="552" height="2" fill="url(#hd100)"/><rect x="1273" y="330" width="550" height="2" fill="url(#hd101)"/><rect x="1274" y="332" width="548" height="2" fill="url(#hd102)"/><rect x="1275" y="334" width="545" height="2" fill="url(#hd103)"/><rect x="1276" y="336" width="542" height="2" fill="url(#hd104)"/><rect x="1277" y="338" width="539" height="2" fill="url(#hd105)"/><rect x="1278" y="340" width="536" height="2" fill="url(#hd106)"/><rect x="1279" y="342" width="534" height="2" fill="url(#hd107)"/><rect x="1279" y="344" width="532" height="2" fill="url(#hd108)"/><rect x="1280" y="346" width="529" height="2" fill="url(#hd109)"/><rect x="1281" y="348" width="526" height="2" fill="url(#hd110)"/><rect x="1282" y="350" width="524" height="2" fill="url(#hd111)"/><rect x="1283" y="352" width="521" height="2" fill="url(#hd112)"/><rect x="1284" y="354" width="518" height="2" fill="url(#hd113)"/><rect x="1285" y="356" width="515" height="2" fill="url(#hd114)"/><rect x="1286" y="358" width="512" height="2" fill="url(#hd115)"/><rect x="1287" y="360" width="510" height="2" fill="url(#hd116)"/><rect x="1288" y="362" width="507" height="2" fill="url(#hd117)"/><rect x="1288" y="364" width="505" height="2" fill="url(#hd118)"/><rect x="1289" y="366" width="502" height="2" fill="url(#hd119)"/><rect x="1290" y="368" width="500" height="2" fill="url(#hd120)"/><rect x="1291" y="370" width="497" height="2" fill="url(#hd121)"/><rect x="1292" y="372" width="494" height="2" fill="url(#hd122)"/><rect x="1293" y="374" width="491" height="2" fill="url(#hd123)"/><rect x="1294" y="376" width="488" height="2" fill="url(#hd124)"/><rect x="1295" y="378" width="486" height="2" fill="url(#hd125)"/><rect x="1296" y="380" width="483" height="2" fill="url(#hd126)"/><rect x="1297" y="382" width="480" height="2" fill="url(#hd127)"/><rect x="1298" y="384" width="477" height="2" fill="url(#hd128)"/><rect x="1299" y="386" width="475" height="2" fill="url(#hd129)"/><rect x="1300" y="388" width="472" height="2" fill="url(#hd130)"/><rect x="1301" y="390" width="469" height="2" fill="url(#hd131)"/><rect x="1302" y="392" width="466" height="2" fill="url(#hd132)"/><rect x="1303" y="394" width="463" height="2" fill="url(#hd133)"/><rect x="1304" y="396" width="461" height="2" fill="url(#hd134)"/><rect x="1305" y="398" width="458" height="2" fill="url(#hd135)"/><rect x="1306" y="400" width="455" height="2" fill="url(#hd136)"/><rect x="1307" y="402" width="452" height="2" fill="url(#hd137)"/><rect x="1308" y="404" width="450" height="2" fill="url(#hd138)"/><rect x="1309" y="406" width="447" height="2" fill="url(#hd139)"/><rect x="1310" y="408" width="444" height="2" fill="url(#hd140)"/><rect x="1311" y="410" width="441" height="2" fill="url(#hd141)"/><rect x="1312" y="412" width="438" height="2" fill="url(#hd142)"/><rect x="1314" y="414" width="435" height="2" fill="url(#hd143)"/><rect x="1315" y="416" width="432" height="2" fill="url(#hd144)"/><rect x="1316" y="418" width="429" height="2" fill="url(#hd145)"/><rect x="1317" y="420" width="426" height="2" fill="url(#hd146)"/><rect x="1318" y="422" width="423" height="2" fill="url(#hd147)"/><rect x="1319" y="424" width="421" height="2" fill="url(#hd148)"/><rect x="1320" y="426" width="418" height="2" fill="url(#hd149)"/><rect x="1321" y="428" width="415" height="2" fill="url(#hd150)"/><rect x="1322" y="430" width="412" height="2" fill="url(#hd151)"/><rect x="1323" y="432" width="410" height="2" fill="url(#hd152)"/><rect x="1324" y="434" width="407" height="2" fill="url(#hd153)"/><rect x="1325" y="436" width="404" height="2" fill="url(#hd154)"/><rect x="1326" y="438" width="401" height="2" fill="url(#hd155)"/><rect x="1328" y="440" width="397" height="2" fill="url(#hd156)"/><rect x="1329" y="442" width="395" height="2" fill="url(#hd157)"/><rect x="1330" y="444" width="392" height="2" fill="url(#hd158)"/><rect x="1331" y="446" width="389" height="2" fill="url(#hd159)"/><rect x="1332" y="448" width="386" height="2" fill="url(#hd160)"/><rect x="1333" y="450" width="384" height="2" fill="url(#hd161)"/><rect x="1334" y="452" width="381" height="2" fill="url(#hd162)"/><rect x="1335" y="454" width="378" height="2" fill="url(#hd163)"/><rect x="1336" y="456" width="375" height="2" fill="url(#hd164)"/><rect x="1338" y="458" width="371" height="2" fill="url(#hd165)"/><rect x="1339" y="460" width="369" height="2" fill="url(#hd166)"/><rect x="1340" y="462" width="366" height="2" fill="url(#hd167)"/><rect x="1341" y="464" width="363" height="2" fill="url(#hd168)"/><rect x="1342" y="466" width="360" height="2" fill="url(#hd169)"/><rect x="1343" y="468" width="358" height="2" fill="url(#hd170)"/><rect x="1344" y="470" width="355" height="2" fill="url(#hd171)"/><rect x="1346" y="472" width="351" height="2" fill="url(#hd172)"/><rect x="1347" y="474" width="348" height="2" fill="url(#hd173)"/><rect x="1348" y="476" width="345" height="2" fill="url(#hd174)"/><rect x="1349" y="478" width="343" height="2" fill="url(#hd175)"/><rect x="1350" y="480" width="340" height="2" fill="url(#hd176)"/><rect x="1352" y="482" width="336" height="2" fill="url(#hd177)"/><rect x="1353" y="484" width="333" height="2" fill="url(#hd178)"/><rect x="1354" y="486" width="331" height="2" fill="url(#hd179)"/><rect x="1355" y="488" width="328" height="2" fill="url(#hd180)"/><rect x="1356" y="490" width="325" height="2" fill="url(#hd181)"/><rect x="1358" y="492" width="321" height="2" fill="url(#hd182)"/><rect x="1359" y="494" width="318" height="2" fill="url(#hd183)"/><rect x="1360" y="496" width="316" height="2" fill="url(#hd184)"/><rect x="1361" y="498" width="313" height="2" fill="url(#hd185)"/><rect x="1362" y="500" width="310" height="2" fill="url(#hd186)"/><rect x="1364" y="502" width="306" height="2" fill="url(#hd187)"/><rect x="1365" y="504" width="304" height="2" fill="url(#hd188)"/><rect x="1366" y="506" width="301" height="2" fill="url(#hd189)"/><rect x="1368" y="508" width="297" height="2" fill="url(#hd190)"/><rect x="1369" y="510" width="294" height="2" fill="url(#hd191)"/><rect x="1370" y="512" width="291" height="2" fill="url(#hd192)"/><rect x="1371" y="514" width="289" height="2" fill="url(#hd193)"/><rect x="1373" y="516" width="285" height="2" fill="url(#hd194)"/><rect x="1374" y="518" width="282" height="2" fill="url(#hd195)"/><rect x="1375" y="520" width="279" height="2" fill="url(#hd196)"/><rect x="1377" y="522" width="276" height="2" fill="url(#hd197)"/><rect x="1378" y="524" width="273" height="2" fill="url(#hd198)"/><rect x="1379" y="526" width="270" height="2" fill="url(#hd199)"/><rect x="1381" y="528" width="266" height="2" fill="url(#hd200)"/><rect x="1382" y="530" width="263" height="2" fill="url(#hd201)"/><rect x="1383" y="532" width="261" height="2" fill="url(#hd202)"/><rect x="1385" y="534" width="257" height="2" fill="url(#hd203)"/><rect x="1386" y="536" width="254" height="2" fill="url(#hd204)"/><rect x="1387" y="538" width="251" height="2" fill="url(#hd205)"/><rect x="1389" y="540" width="248" height="2" fill="url(#hd206)"/><rect x="1390" y="542" width="245" height="2" fill="url(#hd207)"/><rect x="1392" y="544" width="241" height="2" fill="url(#hd208)"/><rect x="1393" y="546" width="238" height="2" fill="url(#hd209)"/><rect x="1395" y="548" width="234" height="2" fill="url(#hd210)"/><rect x="1396" y="550" width="232" height="2" fill="url(#hd211)"/><rect x="1397" y="552" width="229" height="2" fill="url(#hd212)"/><rect x="1399" y="554" width="225" height="2" fill="url(#hd213)"/><rect x="1400" y="556" width="222" height="2" fill="url(#hd214)"/><rect x="1402" y="558" width="219" height="2" fill="url(#hd215)"/><rect x="1403" y="560" width="216" height="2" fill="url(#hd216)"/><rect x="1405" y="562" width="212" height="2" fill="url(#hd217)"/><rect x="1406" y="564" width="209" height="2" fill="url(#hd218)"/><rect x="1408" y="566" width="205" height="2" fill="url(#hd219)"/><rect x="1409" y="568" width="203" height="2" fill="url(#hd220)"/><rect x="1411" y="570" width="199" height="2" fill="url(#hd221)"/><rect x="1413" y="572" width="195" height="2" fill="url(#hd222)"/><rect x="1414" y="574" width="192" height="2" fill="url(#hd223)"/><rect x="1416" y="576" width="189" height="2" fill="url(#hd224)"/><rect x="1417" y="578" width="186" height="2" fill="url(#hd225)"/><rect x="1419" y="580" width="182" height="2" fill="url(#hd226)"/><rect x="1421" y="582" width="178" height="2" fill="url(#hd227)"/><rect x="1422" y="584" width="175" height="2" fill="url(#hd228)"/><rect x="1424" y="586" width="172" height="2" fill="url(#hd229)"/><rect x="1426" y="588" width="168" height="2" fill="url(#hd230)"/><rect x="1428" y="590" width="164" height="2" fill="url(#hd231)"/><rect x="1429" y="592" width="161" height="2" fill="url(#hd232)"/><rect x="1431" y="594" width="158" height="2" fill="url(#hd233)"/><rect x="1433" y="596" width="154" height="2" fill="url(#hd234)"/><rect x="1435" y="598" width="150" height="2" fill="url(#hd235)"/><rect x="1437" y="600" width="146" height="2" fill="url(#hd236)"/><rect x="1439" y="602" width="142" height="2" fill="url(#hd237)"/><rect x="1441" y="604" width="139" height="2" fill="url(#hd238)"/><rect x="1443" y="606" width="135" height="2" fill="url(#hd239)"/><rect x="1445" y="608" width="131" height="2" fill="url(#hd240)"/><rect x="1447" y="610" width="127" height="2" fill="url(#hd241)"/><rect x="1449" y="612" width="124" height="2" fill="url(#hd242)"/><rect x="1451" y="614" width="120" height="2" fill="url(#hd243)"/><rect x="1453" y="616" width="116" height="2" fill="url(#hd244)"/><rect x="1455" y="618" width="112" height="2" fill="url(#hd245)"/><rect x="1457" y="620" width="108" height="2" fill="url(#hd246)"/><rect x="1459" y="622" width="105" height="2" fill="url(#hd247)"/><rect x="1461" y="624" width="101" height="2" fill="url(#hd248)"/><rect x="1463" y="626" width="97" height="2" fill="url(#hd249)"/><rect x="1466" y="628" width="92" height="2" fill="url(#hd250)"/><rect x="1468" y="630" width="89" height="2" fill="url(#hd251)"/><rect x="1470" y="632" width="85" height="2" fill="url(#hd252)"/><rect x="1472" y="634" width="81" height="2" fill="url(#hd253)"/><rect x="1474" y="636" width="77" height="2" fill="url(#hd254)"/><rect x="1477" y="638" width="72" height="2" fill="url(#hd255)"/><rect x="1479" y="640" width="69" height="2" fill="url(#hd256)"/><rect x="1481" y="642" width="65" height="2" fill="url(#hd257)"/><rect x="1483" y="644" width="61" height="2" fill="url(#hd258)"/><rect x="1486" y="646" width="56" height="2" fill="url(#hd259)"/><rect x="1488" y="648" width="53" height="2" fill="url(#hd260)"/><rect x="1490" y="650" width="49" height="2" fill="url(#hd261)"/><rect x="1492" y="652" width="45" height="2" fill="url(#hd262)"/><rect x="1494" y="654" width="41" height="2" fill="url(#hd263)"/><rect x="1496" y="656" width="37" height="2" fill="url(#hd264)"/><rect x="1499" y="658" width="33" height="2" fill="url(#hd265)"/><rect x="1501" y="660" width="29" height="2" fill="url(#hd266)"/><rect x="1503" y="662" width="25" height="2" fill="url(#hd267)"/><rect x="1505" y="664" width="21" height="2" fill="url(#hd268)"/><rect x="1508" y="666" width="17" height="2" fill="url(#hd269)"/><rect x="1510" y="668" width="13" height="2" fill="url(#hd270)"/><rect x="1513" y="670" width="8" height="2" fill="url(#hd271)"/></g><g clip-path="url(#tri)"><rect x="1369" y="150" width="3" height="2" fill="url(#hb0)"/><rect x="1369" y="152" width="23" height="2" fill="url(#hb1)"/><rect x="1369" y="154" width="42" height="2" fill="url(#hb2)"/><rect x="1370" y="156" width="61" height="2" fill="url(#hb3)"/><rect x="1370" y="158" width="80" height="2" fill="url(#hb4)"/><rect x="1370" y="160" width="100" height="2" fill="url(#hb5)"/><rect x="1371" y="162" width="118" height="2" fill="url(#hb6)"/><rect x="1371" y="164" width="138" height="2" fill="url(#hb7)"/><rect x="1371" y="166" width="158" height="2" fill="url(#hb8)"/><rect x="1371" y="168" width="177" height="2" fill="url(#hb9)"/><rect x="1372" y="170" width="196" height="2" fill="url(#hb10)"/><rect x="1372" y="172" width="215" height="2" fill="url(#hb11)"/><rect x="1372" y="174" width="235" height="2" fill="url(#hb12)"/><rect x="1373" y="176" width="253" height="2" fill="url(#hb13)"/><rect x="1373" y="178" width="273" height="2" fill="url(#hb14)"/><rect x="1373" y="180" width="292" height="2" fill="url(#hb15)"/><rect x="1373" y="182" width="312" height="2" fill="url(#hb16)"/><rect x="1374" y="184" width="331" height="2" fill="url(#hb17)"/><rect x="1374" y="186" width="350" height="2" fill="url(#hb18)"/><rect x="1374" y="188" width="366" height="2" fill="url(#hb19)"/><rect x="1375" y="190" width="364" height="2" fill="url(#hb20)"/><rect x="1375" y="192" width="362" height="2" fill="url(#hb21)"/><rect x="1375" y="194" width="361" height="2" fill="url(#hb22)"/><rect x="1376" y="196" width="358" height="2" fill="url(#hb23)"/><rect x="1376" y="198" width="356" height="2" fill="url(#hb24)"/><rect x="1376" y="200" width="354" height="2" fill="url(#hb25)"/><rect x="1376" y="202" width="352" height="2" fill="url(#hb26)"/><rect x="1377" y="204" width="350" height="2" fill="url(#hb27)"/><rect x="1377" y="206" width="348" height="2" fill="url(#hb28)"/><rect x="1377" y="208" width="346" height="2" fill="url(#hb29)"/><rect x="1378" y="210" width="343" height="2" fill="url(#hb30)"/><rect x="1378" y="212" width="341" height="2" fill="url(#hb31)"/><rect x="1378" y="214" width="340" height="2" fill="url(#hb32)"/><rect x="1379" y="216" width="337" height="2" fill="url(#hb33)"/><rect x="1379" y="218" width="335" height="2" fill="url(#hb34)"/><rect x="1379" y="220" width="333" height="2" fill="url(#hb35)"/><rect x="1379" y="222" width="331" height="2" fill="url(#hb36)"/><rect x="1380" y="224" width="329" height="2" fill="url(#hb37)"/><rect x="1380" y="226" width="327" height="2" fill="url(#hb38)"/><rect x="1380" y="228" width="325" height="2" fill="url(#hb39)"/><rect x="1381" y="230" width="322" height="2" fill="url(#hb40)"/><rect x="1381" y="232" width="320" height="2" fill="url(#hb41)"/><rect x="1381" y="234" width="319" height="2" fill="url(#hb42)"/><rect x="1381" y="236" width="317" height="2" fill="url(#hb43)"/><rect x="1382" y="238" width="314" height="2" fill="url(#hb44)"/><rect x="1382" y="240" width="312" height="2" fill="url(#hb45)"/><rect x="1382" y="242" width="311" height="2" fill="url(#hb46)"/><rect x="1383" y="244" width="308" height="2" fill="url(#hb47)"/><rect x="1383" y="246" width="306" height="2" fill="url(#hb48)"/><rect x="1383" y="248" width="304" height="2" fill="url(#hb49)"/><rect x="1384" y="250" width="301" height="2" fill="url(#hb50)"/><rect x="1384" y="252" width="300" height="2" fill="url(#hb51)"/><rect x="1384" y="254" width="298" height="2" fill="url(#hb52)"/><rect x="1384" y="256" width="296" height="2" fill="url(#hb53)"/><rect x="1385" y="258" width="293" height="2" fill="url(#hb54)"/><rect x="1385" y="260" width="291" height="2" fill="url(#hb55)"/><rect x="1385" y="262" width="290" height="2" fill="url(#hb56)"/><rect x="1386" y="264" width="287" height="2" fill="url(#hb57)"/><rect x="1386" y="266" width="285" height="2" fill="url(#hb58)"/><rect x="1386" y="268" width="283" height="2" fill="url(#hb59)"/><rect x="1387" y="270" width="280" height="2" fill="url(#hb60)"/><rect x="1387" y="272" width="279" height="2" fill="url(#hb61)"/><rect x="1387" y="274" width="277" height="2" fill="url(#hb62)"/><rect x="1387" y="276" width="275" height="2" fill="url(#hb63)"/><rect x="1388" y="278" width="272" height="2" fill="url(#hb64)"/><rect x="1388" y="280" width="270" height="2" fill="url(#hb65)"/><rect x="1388" y="282" width="269" height="2" fill="url(#hb66)"/><rect x="1389" y="284" width="266" height="2" fill="url(#hb67)"/><rect x="1389" y="286" width="264" height="2" fill="url(#hb68)"/><rect x="1389" y="288" width="262" height="2" fill="url(#hb69)"/><rect x="1389" y="290" width="260" height="2" fill="url(#hb70)"/><rect x="1390" y="292" width="258" height="2" fill="url(#hb71)"/><rect x="1390" y="294" width="256" height="2" fill="url(#hb72)"/><rect x="1390" y="296" width="254" height="2" fill="url(#hb73)"/><rect x="1391" y="298" width="251" height="2" fill="url(#hb74)"/><rect x="1391" y="300" width="250" height="2" fill="url(#hb75)"/><rect x="1391" y="302" width="248" height="2" fill="url(#hb76)"/><rect x="1392" y="304" width="245" height="2" fill="url(#hb77)"/><rect x="1392" y="306" width="243" height="2" fill="url(#hb78)"/><rect x="1392" y="308" width="241" height="2" fill="url(#hb79)"/><rect x="1392" y="310" width="240" height="2" fill="url(#hb80)"/><rect x="1393" y="312" width="237" height="2" fill="url(#hb81)"/><rect x="1393" y="314" width="235" height="2" fill="url(#hb82)"/><rect x="1393" y="316" width="233" height="2" fill="url(#hb83)"/><rect x="1394" y="318" width="230" height="2" fill="url(#hb84)"/><rect x="1394" y="320" width="229" height="2" fill="url(#hb85)"/><rect x="1394" y="322" width="227" height="2" fill="url(#hb86)"/><rect x="1395" y="324" width="224" height="2" fill="url(#hb87)"/><rect x="1395" y="326" width="222" height="2" fill="url(#hb88)"/><rect x="1395" y="328" width="220" height="2" fill="url(#hb89)"/><rect x="1395" y="330" width="219" height="2" fill="url(#hb90)"/><rect x="1396" y="332" width="216" height="2" fill="url(#hb91)"/><rect x="1396" y="334" width="214" height="2" fill="url(#hb92)"/><rect x="1396" y="336" width="212" height="2" fill="url(#hb93)"/><rect x="1397" y="338" width="209" height="2" fill="url(#hb94)"/><rect x="1397" y="340" width="208" height="2" fill="url(#hb95)"/><rect x="1397" y="342" width="206" height="2" fill="url(#hb96)"/><rect x="1397" y="344" width="204" height="2" fill="url(#hb97)"/><rect x="1398" y="346" width="201" height="2" fill="url(#hb98)"/><rect x="1398" y="348" width="199" height="2" fill="url(#hb99)"/><rect x="1398" y="350" width="198" height="2" fill="url(#hb100)"/><rect x="1399" y="352" width="195" height="2" fill="url(#hb101)"/><rect x="1399" y="354" width="193" height="2" fill="url(#hb102)"/><rect x="1399" y="356" width="191" height="2" fill="url(#hb103)"/><rect x="1400" y="358" width="189" height="2" fill="url(#hb104)"/><rect x="1400" y="360" width="187" height="2" fill="url(#hb105)"/><rect x="1400" y="362" width="185" height="2" fill="url(#hb106)"/><rect x="1400" y="364" width="183" height="2" fill="url(#hb107)"/><rect x="1401" y="366" width="180" height="2" fill="url(#hb108)"/><rect x="1401" y="368" width="179" height="2" fill="url(#hb109)"/><rect x="1401" y="370" width="177" height="2" fill="url(#hb110)"/><rect x="1402" y="372" width="174" height="2" fill="url(#hb111)"/><rect x="1402" y="374" width="172" height="2" fill="url(#hb112)"/><rect x="1402" y="376" width="170" height="2" fill="url(#hb113)"/><rect x="1403" y="378" width="168" height="2" fill="url(#hb114)"/><rect x="1403" y="380" width="166" height="2" fill="url(#hb115)"/><rect x="1403" y="382" width="164" height="2" fill="url(#hb116)"/><rect x="1403" y="384" width="162" height="2" fill="url(#hb117)"/><rect x="1404" y="386" width="159" height="2" fill="url(#hb118)"/><rect x="1404" y="388" width="158" height="2" fill="url(#hb119)"/><rect x="1404" y="390" width="156" height="2" fill="url(#hb120)"/><rect x="1405" y="392" width="153" height="2" fill="url(#hb121)"/><rect x="1405" y="394" width="151" height="2" fill="url(#hb122)"/><rect x="1405" y="396" width="149" height="2" fill="url(#hb123)"/><rect x="1406" y="398" width="147" height="2" fill="url(#hb124)"/><rect x="1406" y="400" width="145" height="2" fill="url(#hb125)"/><rect x="1406" y="402" width="143" height="2" fill="url(#hb126)"/><rect x="1406" y="404" width="141" height="2" fill="url(#hb127)"/><rect x="1407" y="406" width="138" height="2" fill="url(#hb128)"/><rect x="1407" y="408" width="137" height="2" fill="url(#hb129)"/><rect x="1407" y="410" width="135" height="2" fill="url(#hb130)"/><rect x="1408" y="412" width="132" height="2" fill="url(#hb131)"/><rect x="1408" y="414" width="130" height="2" fill="url(#hb132)"/><rect x="1408" y="416" width="129" height="2" fill="url(#hb133)"/><rect x="1408" y="418" width="127" height="2" fill="url(#hb134)"/><rect x="1409" y="420" width="124" height="2" fill="url(#hb135)"/><rect x="1409" y="422" width="122" height="2" fill="url(#hb136)"/><rect x="1409" y="424" width="120" height="2" fill="url(#hb137)"/><rect x="1410" y="426" width="118" height="2" fill="url(#hb138)"/><rect x="1410" y="428" width="116" height="2" fill="url(#hb139)"/><rect x="1410" y="430" width="114" height="2" fill="url(#hb140)"/><rect x="1411" y="432" width="111" height="2" fill="url(#hb141)"/><rect x="1411" y="434" width="109" height="2" fill="url(#hb142)"/><rect x="1411" y="436" width="108" height="2" fill="url(#hb143)"/><rect x="1411" y="438" width="106" height="2" fill="url(#hb144)"/><rect x="1412" y="440" width="103" height="2" fill="url(#hb145)"/><rect x="1412" y="442" width="101" height="2" fill="url(#hb146)"/><rect x="1412" y="444" width="99" height="2" fill="url(#hb147)"/><rect x="1413" y="446" width="97" height="2" fill="url(#hb148)"/><rect x="1413" y="448" width="95" height="2" fill="url(#hb149)"/><rect x="1413" y="450" width="93" height="2" fill="url(#hb150)"/><rect x="1414" y="452" width="90" height="2" fill="url(#hb151)"/><rect x="1414" y="454" width="88" height="2" fill="url(#hb152)"/><rect x="1414" y="456" width="87" height="2" fill="url(#hb153)"/><rect x="1414" y="458" width="85" height="2" fill="url(#hb154)"/><rect x="1415" y="460" width="82" height="2" fill="url(#hb155)"/><rect x="1415" y="462" width="80" height="2" fill="url(#hb156)"/><rect x="1415" y="464" width="78" height="2" fill="url(#hb157)"/><rect x="1416" y="466" width="76" height="2" fill="url(#hb158)"/><rect x="1416" y="468" width="74" height="2" fill="url(#hb159)"/><rect x="1416" y="470" width="72" height="2" fill="url(#hb160)"/><rect x="1416" y="472" width="70" height="2" fill="url(#hb161)"/><rect x="1417" y="474" width="68" height="2" fill="url(#hb162)"/><rect x="1417" y="476" width="66" height="2" fill="url(#hb163)"/><rect x="1417" y="478" width="64" height="2" fill="url(#hb164)"/><rect x="1418" y="480" width="61" height="2" fill="url(#hb165)"/><rect x="1418" y="482" width="59" height="2" fill="url(#hb166)"/><rect x="1418" y="484" width="58" height="2" fill="url(#hb167)"/><rect x="1419" y="486" width="55" height="2" fill="url(#hb168)"/><rect x="1419" y="488" width="53" height="2" fill="url(#hb169)"/><rect x="1419" y="490" width="51" height="2" fill="url(#hb170)"/><rect x="1419" y="492" width="49" height="2" fill="url(#hb171)"/><rect x="1420" y="494" width="47" height="2" fill="url(#hb172)"/><rect x="1420" y="496" width="45" height="2" fill="url(#hb173)"/><rect x="1420" y="498" width="43" height="2" fill="url(#hb174)"/><rect x="1421" y="500" width="40" height="2" fill="url(#hb175)"/><rect x="1421" y="502" width="38" height="2" fill="url(#hb176)"/><rect x="1421" y="504" width="37" height="2" fill="url(#hb177)"/><rect x="1422" y="506" width="34" height="2" fill="url(#hb178)"/><rect x="1422" y="508" width="32" height="2" fill="url(#hb179)"/><rect x="1422" y="510" width="30" height="2" fill="url(#hb180)"/><rect x="1422" y="512" width="28" height="2" fill="url(#hb181)"/><rect x="1423" y="514" width="26" height="2" fill="url(#hb182)"/><rect x="1423" y="516" width="24" height="2" fill="url(#hb183)"/><rect x="1423" y="518" width="22" height="2" fill="url(#hb184)"/><rect x="1424" y="520" width="19" height="2" fill="url(#hb185)"/><rect x="1424" y="522" width="17" height="2" fill="url(#hb186)"/><rect x="1424" y="524" width="16" height="2" fill="url(#hb187)"/><rect x="1424" y="526" width="14" height="2" fill="url(#hb188)"/><rect x="1425" y="528" width="11" height="2" fill="url(#hb189)"/><rect x="1425" y="530" width="9" height="2" fill="url(#hb190)"/><rect x="1425" y="532" width="7" height="2" fill="url(#hb191)"/><rect x="1426" y="534" width="5" height="2" fill="url(#hb192)"/></g></g>
<path d="M1230 117.2H1908.2V687H1230z" fill="none" stroke="#a8a8a8" stroke-width="1.800"/>
<line x1="1224" y1="687" x2="1230" y2="687" stroke="#a8a8a8" stroke-width="1.5"/>
<text x="1213.7" y="693.4" font-size="16.2" fill="#e4e4e4">0</text>
<line x1="1224" y1="639.63" x2="1230" y2="639.63" stroke="#a8a8a8" stroke-width="1.5"/>
<text x="1192.45" y="646.03" font-size="16.2" fill="#e4e4e4" textLength="30.81" lengthAdjust="spacingAndGlyphs">0.05</text>
<line x1="1224" y1="592.27" x2="1230" y2="592.27" stroke="#a8a8a8" stroke-width="1.5"/>
<text x="1200.83" y="598.67" font-size="16.2" fill="#e4e4e4" textLength="22.5" lengthAdjust="spacingAndGlyphs">0.1</text>
<line x1="1224" y1="544.9" x2="1230" y2="544.9" stroke="#a8a8a8" stroke-width="1.5"/>
<text x="1192.45" y="551.3" font-size="16.2" fill="#e4e4e4" textLength="30.81" lengthAdjust="spacingAndGlyphs">0.15</text>
<line x1="1224" y1="497.54" x2="1230" y2="497.54" stroke="#a8a8a8" stroke-width="1.5"/>
<text x="1200.83" y="503.94" font-size="16.2" fill="#e4e4e4" textLength="22.5" lengthAdjust="spacingAndGlyphs">0.2</text>
<line x1="1224" y1="450.18" x2="1230" y2="450.18" stroke="#a8a8a8" stroke-width="1.5"/>
<text x="1192.45" y="456.57" font-size="16.2" fill="#e4e4e4" textLength="30.81" lengthAdjust="spacingAndGlyphs">0.25</text>
<line x1="1224" y1="402.81" x2="1230" y2="402.81" stroke="#a8a8a8" stroke-width="1.5"/>
<text x="1200.84" y="409.21" font-size="16.2" fill="#e4e4e4" textLength="22.41" lengthAdjust="spacingAndGlyphs">0.3</text>
<line x1="1224" y1="355.44" x2="1230" y2="355.44" stroke="#a8a8a8" stroke-width="1.5"/>
<text x="1192.45" y="361.84" font-size="16.2" fill="#e4e4e4" textLength="30.81" lengthAdjust="spacingAndGlyphs">0.35</text>
<line x1="1224" y1="308.08" x2="1230" y2="308.08" stroke="#a8a8a8" stroke-width="1.5"/>
<text x="1200.84" y="314.48" font-size="16.2" fill="#e4e4e4" textLength="22.16" lengthAdjust="spacingAndGlyphs">0.4</text>
<line x1="1224" y1="260.72" x2="1230" y2="260.72" stroke="#a8a8a8" stroke-width="1.5"/>
<text x="1192.45" y="267.12" font-size="16.2" fill="#e4e4e4" textLength="30.81" lengthAdjust="spacingAndGlyphs">0.45</text>
<line x1="1224" y1="213.35" x2="1230" y2="213.35" stroke="#a8a8a8" stroke-width="1.5"/>
<text x="1200.84" y="219.75" font-size="16.2" fill="#e4e4e4" textLength="22.41" lengthAdjust="spacingAndGlyphs">0.5</text>
<line x1="1224" y1="165.99" x2="1230" y2="165.99" stroke="#a8a8a8" stroke-width="1.5"/>
<text x="1192.45" y="172.39" font-size="16.2" fill="#e4e4e4" textLength="30.81" lengthAdjust="spacingAndGlyphs">0.55</text>
<line x1="1230" y1="687" x2="1230" y2="693.5" stroke="#a8a8a8" stroke-width="1.5"/>
<text x="1225.25" y="711.3" font-size="16.2" fill="#e4e4e4">0</text>
<line x1="1286.45" y1="687" x2="1286.45" y2="693.5" stroke="#a8a8a8" stroke-width="1.5"/>
<text x="1271.1" y="711.3" font-size="16.2" fill="#e4e4e4" textLength="30.81" lengthAdjust="spacingAndGlyphs">0.05</text>
<line x1="1342.9" y1="687" x2="1342.9" y2="693.5" stroke="#a8a8a8" stroke-width="1.5"/>
<text x="1331.73" y="711.3" font-size="16.2" fill="#e4e4e4" textLength="22.5" lengthAdjust="spacingAndGlyphs">0.1</text>
<line x1="1399.35" y1="687" x2="1399.35" y2="693.5" stroke="#a8a8a8" stroke-width="1.5"/>
<text x="1384" y="711.3" font-size="16.2" fill="#e4e4e4" textLength="30.81" lengthAdjust="spacingAndGlyphs">0.15</text>
<line x1="1455.8" y1="687" x2="1455.8" y2="693.5" stroke="#a8a8a8" stroke-width="1.5"/>
<text x="1444.63" y="711.3" font-size="16.2" fill="#e4e4e4" textLength="22.5" lengthAdjust="spacingAndGlyphs">0.2</text>
<line x1="1512.25" y1="687" x2="1512.25" y2="693.5" stroke="#a8a8a8" stroke-width="1.5"/>
<text x="1496.9" y="711.3" font-size="16.2" fill="#e4e4e4" textLength="30.81" lengthAdjust="spacingAndGlyphs">0.25</text>
<line x1="1568.7" y1="687" x2="1568.7" y2="693.5" stroke="#a8a8a8" stroke-width="1.5"/>
<text x="1557.54" y="711.3" font-size="16.2" fill="#e4e4e4" textLength="22.41" lengthAdjust="spacingAndGlyphs">0.3</text>
<line x1="1625.15" y1="687" x2="1625.15" y2="693.5" stroke="#a8a8a8" stroke-width="1.5"/>
<text x="1609.8" y="711.3" font-size="16.2" fill="#e4e4e4" textLength="30.81" lengthAdjust="spacingAndGlyphs">0.35</text>
<line x1="1681.6" y1="687" x2="1681.6" y2="693.5" stroke="#a8a8a8" stroke-width="1.5"/>
<text x="1670.44" y="711.3" font-size="16.2" fill="#e4e4e4" textLength="22.16" lengthAdjust="spacingAndGlyphs">0.4</text>
<line x1="1738.05" y1="687" x2="1738.05" y2="693.5" stroke="#a8a8a8" stroke-width="1.5"/>
<text x="1722.7" y="711.3" font-size="16.2" fill="#e4e4e4" textLength="30.81" lengthAdjust="spacingAndGlyphs">0.45</text>
<line x1="1794.5" y1="687" x2="1794.5" y2="693.5" stroke="#a8a8a8" stroke-width="1.5"/>
<text x="1783.34" y="711.3" font-size="16.2" fill="#e4e4e4" textLength="22.41" lengthAdjust="spacingAndGlyphs">0.5</text>
<line x1="1850.95" y1="687" x2="1850.95" y2="693.5" stroke="#a8a8a8" stroke-width="1.5"/>
<text x="1835.6" y="711.3" font-size="16.2" fill="#e4e4e4" textLength="30.81" lengthAdjust="spacingAndGlyphs">0.55</text>
<path d="M1497.5 223.95h15v16.500h-15zM1553.6 212.65h15v16.500h-15zM1605.5 205.15h15v16.500h-15zM1663.3 193.95h15v16.500h-15zM1730.9 181.45h15v16.500h-15zM1423.6 208.25h15v16.500h-15zM1404.4 189.35h15v16.500h-15zM1388.6 172.05h15v16.500h-15zM1376.1 157.85h15v16.500h-15zM1363 143.75h15v16.500h-15zM1442.2 268.35h15v16.500h-15zM1439.4 311.05h15v16.500h-15zM1435.2 362.85h15v16.500h-15zM1429.2 428.85h15v16.500h-15zM1420.7 527.85h15v16.500h-15zM1432.2 235.85h15v16.500h-15zM1419 237.25h15v16.500h-15zM1404.9 240.75h15v16.500h-15zM1391.4 242.95h15v16.500h-15zM1378.6 246.45h15v16.500h-15zM1463.7 252.25h15v16.500h-15zM1483.6 274.25h15v16.500h-15zM1504.2 298.05h15v16.500h-15zM1531.7 328.15h15v16.500h-15zM1566.5 364.25h15v16.500h-15zM1447.8 213.15h15v16.500h-15zM1449.1 194.75h15v16.500h-15zM1450.5 180.55h15v16.500h-15zM1450.5 166.85h15v16.500h-15zM1452.3 153.25h15v16.500h-15z" fill="none" stroke="#fff" stroke-width="1.500"/>
<g stroke="#0a0a0a" stroke-width="1.300"><ellipse cx="1501.9" cy="232.2" rx="4.100" ry="4.700" fill="#c38989"/><ellipse cx="1559.7" cy="222.8" rx="4.100" ry="4.700" fill="#c36666"/><ellipse cx="1611.3" cy="213.4" rx="4.100" ry="4.700" fill="#c34b4b"/><ellipse cx="1669.1" cy="202.2" rx="4.100" ry="4.700" fill="#c33232"/><ellipse cx="1737" cy="189.7" rx="4.100" ry="4.700" fill="#c30000"/><ellipse cx="1428.1" cy="216.2" rx="4.100" ry="4.700" fill="#9cc39c"/><ellipse cx="1409.2" cy="196.2" rx="4.100" ry="4.700" fill="#7cc37c"/><ellipse cx="1393.5" cy="178.9" rx="4.100" ry="4.700" fill="#5fc35f"/><ellipse cx="1381.9" cy="164.7" rx="4.100" ry="4.700" fill="#41c341"/><ellipse cx="1368.8" cy="152" rx="4.100" ry="4.700" fill="#00c300"/><ellipse cx="1448.3" cy="276.6" rx="4.100" ry="4.700" fill="#9c9cc3"/><ellipse cx="1444" cy="318.8" rx="4.100" ry="4.700" fill="#7c7cc3"/><ellipse cx="1439.5" cy="371.1" rx="4.100" ry="4.700" fill="#6060c3"/><ellipse cx="1435.2" cy="435.8" rx="4.100" ry="4.700" fill="#4141c3"/><ellipse cx="1425.4" cy="530.2" rx="4.100" ry="4.700" fill="#0000c3"/><ellipse cx="1436.4" cy="243.4" rx="4.100" ry="4.700" fill="#acc3c3"/><ellipse cx="1423.8" cy="244.8" rx="4.100" ry="4.700" fill="#94c3c3"/><ellipse cx="1409.3" cy="247.9" rx="4.100" ry="4.700" fill="#78c3c3"/><ellipse cx="1397.5" cy="249.5" rx="4.100" ry="4.700" fill="#56c3c3"/><ellipse cx="1383.3" cy="252.6" rx="4.100" ry="4.700" fill="#00c3c3"/><ellipse cx="1469.9" cy="260.5" rx="4.100" ry="4.700" fill="#c3a7c3"/><ellipse cx="1488.7" cy="281.1" rx="4.100" ry="4.700" fill="#c38bc3"/><ellipse cx="1511.4" cy="306.6" rx="4.100" ry="4.700" fill="#c36fc3"/><ellipse cx="1537.8" cy="334.8" rx="4.100" ry="4.700" fill="#c34ec3"/><ellipse cx="1572.2" cy="372.5" rx="4.100" ry="4.700" fill="#c303c3"/><ellipse cx="1452.7" cy="221.1" rx="4.100" ry="4.700" fill="#c3c3a7"/><ellipse cx="1453.9" cy="202.3" rx="4.100" ry="4.700" fill="#c3c38b"/><ellipse cx="1455.6" cy="186.4" rx="4.100" ry="4.700" fill="#c3c36f"/><ellipse cx="1455.6" cy="174.2" rx="4.100" ry="4.700" fill="#c3c34d"/><ellipse cx="1456.7" cy="161.5" rx="4.100" ry="4.700" fill="#c3c300"/></g>
<rect x="1445.4" y="234.2" width="14" height="15" fill="none" stroke="#000" stroke-width="1.8"/>
<ellipse cx="1451.4" cy="240.1" rx="4.100" ry="4.500" fill="#fff" stroke="#0a0a0a" stroke-width="1.300"/>
<rect x="1674" y="508.3" width="230.5" height="172" fill="#2c2c2c"/>
<rect x="1677.4" y="511" width="225" height="166" fill="#8a8a8a"/>
<g clip-path="url(#inr)"><rect x="1678" y="512" width="224" height="4" fill="url(#id0)"/><rect x="1678" y="516" width="224" height="4" fill="url(#id1)"/><rect x="1678" y="520" width="224" height="4" fill="url(#id2)"/><rect x="1678" y="524" width="224" height="4" fill="url(#id3)"/><rect x="1678" y="528" width="224" height="4" fill="url(#id4)"/><rect x="1678" y="532" width="224" height="4" fill="url(#id5)"/><rect x="1678" y="536" width="224" height="4" fill="url(#id6)"/><rect x="1678" y="540" width="224" height="4" fill="url(#id7)"/><rect x="1678" y="544" width="224" height="4" fill="url(#id8)"/><rect x="1678" y="548" width="224" height="4" fill="url(#id9)"/><rect x="1678" y="552" width="224" height="4" fill="url(#id10)"/><rect x="1678" y="556" width="224" height="4" fill="url(#id11)"/><rect x="1678" y="560" width="224" height="4" fill="url(#id12)"/><rect x="1678" y="564" width="224" height="4" fill="url(#id13)"/><rect x="1678" y="568" width="224" height="4" fill="url(#id14)"/><rect x="1678" y="572" width="224" height="4" fill="url(#id15)"/><rect x="1678" y="576" width="224" height="4" fill="url(#id16)"/><rect x="1678" y="580" width="224" height="4" fill="url(#id17)"/><rect x="1678" y="584" width="224" height="4" fill="url(#id18)"/><rect x="1678" y="588" width="224" height="4" fill="url(#id19)"/><rect x="1678" y="592" width="224" height="4" fill="url(#id20)"/><rect x="1678" y="596" width="224" height="4" fill="url(#id21)"/><rect x="1678" y="600" width="224" height="4" fill="url(#id22)"/><rect x="1678" y="604" width="224" height="4" fill="url(#id23)"/><rect x="1678" y="608" width="224" height="4" fill="url(#id24)"/><rect x="1678" y="612" width="224" height="4" fill="url(#id25)"/><rect x="1678" y="616" width="224" height="4" fill="url(#id26)"/><rect x="1678" y="620" width="224" height="4" fill="url(#id27)"/><rect x="1678" y="624" width="224" height="4" fill="url(#id28)"/><rect x="1678" y="628" width="224" height="4" fill="url(#id29)"/><rect x="1678" y="632" width="224" height="4" fill="url(#id30)"/><rect x="1678" y="636" width="224" height="4" fill="url(#id31)"/><rect x="1678" y="640" width="224" height="4" fill="url(#id32)"/><rect x="1678" y="644" width="224" height="4" fill="url(#id33)"/><rect x="1678" y="648" width="224" height="4" fill="url(#id34)"/><rect x="1678" y="652" width="224" height="4" fill="url(#id35)"/><rect x="1678" y="656" width="224" height="4" fill="url(#id36)"/><rect x="1678" y="660" width="224" height="4" fill="url(#id37)"/><rect x="1678" y="664" width="224" height="4" fill="url(#id38)"/><rect x="1678" y="668" width="224" height="4" fill="url(#id39)"/><rect x="1678" y="672" width="224" height="4" fill="url(#id40)"/><g clip-path="url(#inb)"><rect x="1678" y="512" width="224" height="4" fill="url(#ib0)"/><rect x="1678" y="516" width="224" height="4" fill="url(#ib1)"/><rect x="1678" y="520" width="224" height="4" fill="url(#ib2)"/><rect x="1678" y="524" width="224" height="4" fill="url(#ib3)"/><rect x="1678" y="528" width="224" height="4" fill="url(#ib4)"/><rect x="1678" y="532" width="224" height="4" fill="url(#ib5)"/><rect x="1678" y="536" width="224" height="4" fill="url(#ib6)"/><rect x="1678" y="540" width="224" height="4" fill="url(#ib7)"/><rect x="1678" y="544" width="224" height="4" fill="url(#ib8)"/><rect x="1678" y="548" width="224" height="4" fill="url(#ib9)"/><rect x="1678" y="552" width="224" height="4" fill="url(#ib10)"/><rect x="1678" y="556" width="224" height="4" fill="url(#ib11)"/><rect x="1678" y="560" width="224" height="4" fill="url(#ib12)"/><rect x="1678" y="564" width="224" height="4" fill="url(#ib13)"/><rect x="1678" y="568" width="224" height="4" fill="url(#ib14)"/><rect x="1678" y="572" width="224" height="4" fill="url(#ib15)"/><rect x="1678" y="576" width="224" height="4" fill="url(#ib16)"/><rect x="1678" y="580" width="224" height="4" fill="url(#ib17)"/><rect x="1678" y="584" width="224" height="4" fill="url(#ib18)"/><rect x="1678" y="588" width="224" height="4" fill="url(#ib19)"/><rect x="1678" y="592" width="224" height="4" fill="url(#ib20)"/><rect x="1678" y="596" width="224" height="4" fill="url(#ib21)"/><rect x="1678" y="600" width="224" height="4" fill="url(#ib22)"/><rect x="1678" y="604" width="224" height="4" fill="url(#ib23)"/><rect x="1678" y="608" width="224" height="4" fill="url(#ib24)"/><rect x="1678" y="612" width="224" height="4" fill="url(#ib25)"/><rect x="1678" y="616" width="224" height="4" fill="url(#ib26)"/><rect x="1678" y="620" width="224" height="4" fill="url(#ib27)"/><rect x="1678" y="624" width="224" height="4" fill="url(#ib28)"/><rect x="1678" y="628" width="224" height="4" fill="url(#ib29)"/><rect x="1678" y="632" width="224" height="4" fill="url(#ib30)"/><rect x="1678" y="636" width="224" height="4" fill="url(#ib31)"/><rect x="1678" y="640" width="224" height="4" fill="url(#ib32)"/><rect x="1678" y="644" width="224" height="4" fill="url(#ib33)"/><rect x="1678" y="648" width="224" height="4" fill="url(#ib34)"/><rect x="1678" y="652" width="224" height="4" fill="url(#ib35)"/><rect x="1678" y="656" width="224" height="4" fill="url(#ib36)"/><rect x="1678" y="660" width="224" height="4" fill="url(#ib37)"/><rect x="1678" y="664" width="224" height="4" fill="url(#ib38)"/><rect x="1678" y="668" width="224" height="4" fill="url(#ib39)"/><rect x="1678" y="672" width="224" height="4" fill="url(#ib40)"/></g></g>
<rect x="1781.3" y="585.5" width="14" height="15.5" fill="none" stroke="#fff" stroke-width="1.5"/>
<ellipse cx="1775.5" cy="584.2" rx="4.100" ry="4.700" fill="#c2c200" stroke="#0a0a0a" stroke-width="1.300"/>
<text x="203.9" y="764.3" font-size="32.5" fill="#f2f2f2" textLength="247.74" lengthAdjust="spacingAndGlyphs">Avg dE2000: 0.85</text>
<text x="197.64" y="811.7" font-size="32.5" fill="#f2f2f2" textLength="259.42" lengthAdjust="spacingAndGlyphs">Max dE2000: 3.14</text>
<text x="164.5" y="866.4" font-size="31.5" fill="#f2f2f2" textLength="235.01" lengthAdjust="spacingAndGlyphs">Current Reading</text>
<text x="165.84" y="908.3" font-size="27" fill="#f2f2f2" textLength="108.5" lengthAdjust="spacingAndGlyphs">x: 0.4163</text>
<text x="332" y="908.3" font-size="27" fill="#f2f2f2" textLength="109.04" lengthAdjust="spacingAndGlyphs">y: 0.5083</text>
<text x="165.84" y="955.6" font-size="27" fill="#f2f2f2" textLength="102.57" lengthAdjust="spacingAndGlyphs">fL: 47.93</text>
<text x="164.99" y="994.2" font-size="27" fill="#f2f2f2" textLength="169.8" lengthAdjust="spacingAndGlyphs">cd/m²: 164.23</text>
<text x="600.43" y="766.8" font-size="16.4" fill="#e4e4e4" textLength="88.43" lengthAdjust="spacingAndGlyphs">RGB Balance</text>
<rect x="516.6" y="773.1" width="277.3" height="209" fill="#232323"/>
<line x1="516.6" y1="825.5" x2="793.9" y2="825.5" stroke="#9a9a9a" stroke-width="1.3"/>
<line x1="516.6" y1="877.6" x2="793.9" y2="877.6" stroke="#9a9a9a" stroke-width="1.3"/>
<line x1="516.6" y1="929.7" x2="793.9" y2="929.7" stroke="#9a9a9a" stroke-width="1.3"/>
<path d="M516.6 773.1H793.9V982.1H516.6z" fill="none" stroke="#a8a8a8" stroke-width="1.600"/>
<line x1="516.6" y1="774.6" x2="793.9" y2="774.6" stroke="#8a8a8a" stroke-width="1"/>
<line x1="511.6" y1="773.1" x2="516.6" y2="773.1" stroke="#a8a8a8" stroke-width="1.4"/>
<text x="501.01" y="779.5" font-size="16.2" fill="#e4e4e4">4</text>
<line x1="511.6" y1="825.5" x2="516.6" y2="825.5" stroke="#a8a8a8" stroke-width="1.4"/>
<text x="501.34" y="831.9" font-size="16.2" fill="#e4e4e4">2</text>
<line x1="511.6" y1="877.6" x2="516.6" y2="877.6" stroke="#a8a8a8" stroke-width="1.4"/>
<text x="501.18" y="884" font-size="16.2" fill="#e4e4e4">0</text>
<line x1="511.6" y1="929.7" x2="516.6" y2="929.7" stroke="#a8a8a8" stroke-width="1.4"/>
<text x="495.74" y="936.1" font-size="16.2" fill="#e4e4e4" textLength="14.58" lengthAdjust="spacingAndGlyphs">-2</text>
<line x1="511.6" y1="982.1" x2="516.6" y2="982.1" stroke="#a8a8a8" stroke-width="1.4"/>
<text x="495.76" y="988.5" font-size="16.2" fill="#e4e4e4" textLength="14.23" lengthAdjust="spacingAndGlyphs">-4</text>
<line x1="516.6" y1="982.1" x2="516.6" y2="988.1" stroke="#a8a8a8" stroke-width="1.4"/>
<line x1="793.9" y1="982.1" x2="793.9" y2="988.1" stroke="#a8a8a8" stroke-width="1.4"/>
<text x="634.7" y="999.8" font-size="16.2" fill="#e4e4e4" textLength="39.36" lengthAdjust="spacingAndGlyphs">100%</text>
<rect x="544.3" y="877.6" width="71.5" height="58.4" fill="url(#rr)" stroke="#050505" stroke-width="1.3"/>
<rect x="617.8" y="833.3" width="71.8" height="44.3" fill="url(#gg)" stroke="#050505" stroke-width="1.3"/>
<rect x="691" y="877.6" width="72.5" height="57" fill="url(#bb)" stroke="#050505" stroke-width="1.3"/>
<rect x="817" y="737.5" width="765" height="32.5" fill="url(#th)"/>
<rect x="817" y="737" width="20.5" height="33" fill="#000"/>
<text x="1013.1" y="760.2" font-size="16.6" fill="#fff" font-family="'DejaVu Sans','Liberation Sans',sans-serif" textLength="44.35" lengthAdjust="spacingAndGlyphs">20%</text>
<text x="1128.01" y="760.2" font-size="16.6" fill="#fff" font-family="'DejaVu Sans','Liberation Sans',sans-serif" textLength="43.83" lengthAdjust="spacingAndGlyphs">40%</text>
<text x="1242.41" y="760.2" font-size="16.6" fill="#fff" font-family="'DejaVu Sans','Liberation Sans',sans-serif" textLength="44.24" lengthAdjust="spacingAndGlyphs">60%</text>
<text x="1357.21" y="760.2" font-size="16.6" fill="#fff" font-family="'DejaVu Sans','Liberation Sans',sans-serif" textLength="44.24" lengthAdjust="spacingAndGlyphs">80%</text>
<text x="1471.2" y="760.2" font-size="16.6" fill="#fff" font-family="'DejaVu Sans','Liberation Sans',sans-serif" textLength="57.18" lengthAdjust="spacingAndGlyphs">100%</text>
<rect x="817" y="769.5" width="765" height="30" fill="#434343"/>
<rect x="817" y="769.5" width="20.5" height="30" fill="url(#rh)"/>
<line x1="817" y1="770" x2="837.5" y2="770" stroke="#111" stroke-width="1"/>
<text x="844.48" y="792" font-size="19.2" fill="#fff" font-family="'DejaVu Sans','Liberation Sans',sans-serif" textLength="85.46" lengthAdjust="spacingAndGlyphs">x: CIE31</text>
<text x="1013.12" y="792" font-size="19.2" fill="#fff" font-family="'DejaVu Sans','Liberation Sans',sans-serif" textLength="74.36" lengthAdjust="spacingAndGlyphs">0.3323</text>
<text x="1127.52" y="792" font-size="19.2" fill="#fff" font-family="'DejaVu Sans','Liberation Sans',sans-serif" textLength="74.14" lengthAdjust="spacingAndGlyphs">0.3538</text>
<text x="1242.31" y="792" font-size="19.2" fill="#fff" font-family="'DejaVu Sans','Liberation Sans',sans-serif" textLength="74.8" lengthAdjust="spacingAndGlyphs">0.3762</text>
<text x="1357.12" y="792" font-size="19.2" fill="#fff" font-family="'DejaVu Sans','Liberation Sans',sans-serif" textLength="74.03" lengthAdjust="spacingAndGlyphs">0.3936</text>
<text x="1471.92" y="792" font-size="19.2" fill="#fff" font-family="'DejaVu Sans','Liberation Sans',sans-serif" textLength="74.36" lengthAdjust="spacingAndGlyphs">0.4163</text>
<rect x="817" y="799.35" width="765" height="30" fill="#838383"/>
<rect x="817" y="799.35" width="20.5" height="30" fill="url(#rh)"/>
<line x1="817" y1="799.85" x2="837.5" y2="799.85" stroke="#111" stroke-width="1"/>
<text x="844.37" y="821.85" font-size="19.2" fill="#fff" font-family="'DejaVu Sans','Liberation Sans',sans-serif" textLength="86.07" lengthAdjust="spacingAndGlyphs">y: CIE31</text>
<text x="1013.12" y="821.85" font-size="19.2" fill="#fff" font-family="'DejaVu Sans','Liberation Sans',sans-serif" textLength="74.14" lengthAdjust="spacingAndGlyphs">0.3679</text>
<text x="1127.51" y="821.85" font-size="19.2" fill="#fff" font-family="'DejaVu Sans','Liberation Sans',sans-serif" textLength="74.8" lengthAdjust="spacingAndGlyphs">0.4032</text>
<text x="1242.31" y="821.85" font-size="19.2" fill="#fff" font-family="'DejaVu Sans','Liberation Sans',sans-serif" textLength="74.69" lengthAdjust="spacingAndGlyphs">0.4401</text>
<text x="1357.12" y="821.85" font-size="19.2" fill="#fff" font-family="'DejaVu Sans','Liberation Sans',sans-serif" textLength="74.14" lengthAdjust="spacingAndGlyphs">0.4708</text>
<text x="1471.92" y="821.85" font-size="19.2" fill="#fff" font-family="'DejaVu Sans','Liberation Sans',sans-serif" textLength="74.36" lengthAdjust="spacingAndGlyphs">0.5083</text>
<rect x="817" y="829.2" width="765" height="30" fill="#434343"/>
<rect x="817" y="829.2" width="20.5" height="30" fill="url(#rh)"/>
<line x1="817" y1="829.7" x2="837.5" y2="829.7" stroke="#111" stroke-width="1"/>
<text x="845.09" y="851.7" font-size="19.2" fill="#fff" font-family="'DejaVu Sans','Liberation Sans',sans-serif">Y</text>
<text x="1012.26" y="851.7" font-size="19.2" fill="#fff" font-family="'DejaVu Sans','Liberation Sans',sans-serif" textLength="101.96" lengthAdjust="spacingAndGlyphs">173.6316</text>
<text x="1126.65" y="851.7" font-size="19.2" fill="#fff" font-family="'DejaVu Sans','Liberation Sans',sans-serif" textLength="102.41" lengthAdjust="spacingAndGlyphs">170.7397</text>
<text x="1241.45" y="851.7" font-size="19.2" fill="#fff" font-family="'DejaVu Sans','Liberation Sans',sans-serif" textLength="102.07" lengthAdjust="spacingAndGlyphs">168.2158</text>
<text x="1356.24" y="851.7" font-size="19.2" fill="#fff" font-family="'DejaVu Sans','Liberation Sans',sans-serif" textLength="102.74" lengthAdjust="spacingAndGlyphs">166.0702</text>
<text x="1471.04" y="851.7" font-size="19.2" fill="#fff" font-family="'DejaVu Sans','Liberation Sans',sans-serif" textLength="102.74" lengthAdjust="spacingAndGlyphs">164.2332</text>
<rect x="817" y="859.05" width="765" height="30" fill="#838383"/>
<rect x="817" y="859.05" width="20.5" height="30" fill="url(#rh)"/>
<line x1="817" y1="859.55" x2="837.5" y2="859.55" stroke="#111" stroke-width="1"/>
<text x="845.11" y="881.55" font-size="19.2" fill="#fff" font-family="'DejaVu Sans','Liberation Sans',sans-serif" textLength="152.86" lengthAdjust="spacingAndGlyphs">Target x:CIE31</text>
<text x="1013.13" y="881.55" font-size="19.2" fill="#fff" font-family="'DejaVu Sans','Liberation Sans',sans-serif" textLength="73.81" lengthAdjust="spacingAndGlyphs">0.3344</text>
<text x="1127.53" y="881.55" font-size="19.2" fill="#fff" font-family="'DejaVu Sans','Liberation Sans',sans-serif" textLength="73.81" lengthAdjust="spacingAndGlyphs">0.3564</text>
<text x="1242.32" y="881.55" font-size="19.2" fill="#fff" font-family="'DejaVu Sans','Liberation Sans',sans-serif" textLength="74.36" lengthAdjust="spacingAndGlyphs">0.3773</text>
<text x="1357.12" y="881.55" font-size="19.2" fill="#fff" font-family="'DejaVu Sans','Liberation Sans',sans-serif" textLength="74.14" lengthAdjust="spacingAndGlyphs">0.3969</text>
<text x="1471.92" y="881.55" font-size="19.2" fill="#fff" font-family="'DejaVu Sans','Liberation Sans',sans-serif" textLength="74.36" lengthAdjust="spacingAndGlyphs">0.4193</text>
<rect x="817" y="888.9" width="765" height="30" fill="#434343"/>
<rect x="817" y="888.9" width="20.5" height="30" fill="url(#rh)"/>
<line x1="817" y1="889.4" x2="837.5" y2="889.4" stroke="#111" stroke-width="1"/>
<text x="845.11" y="911.4" font-size="19.2" fill="#fff" font-family="'DejaVu Sans','Liberation Sans',sans-serif" textLength="153.83" lengthAdjust="spacingAndGlyphs">Target y:CIE31</text>
<text x="1013.12" y="911.4" font-size="19.2" fill="#fff" font-family="'DejaVu Sans','Liberation Sans',sans-serif" textLength="74.14" lengthAdjust="spacingAndGlyphs">0.3648</text>
<text x="1127.52" y="911.4" font-size="19.2" fill="#fff" font-family="'DejaVu Sans','Liberation Sans',sans-serif" textLength="74.36" lengthAdjust="spacingAndGlyphs">0.4013</text>
<text x="1242.32" y="911.4" font-size="19.2" fill="#fff" font-family="'DejaVu Sans','Liberation Sans',sans-serif" textLength="74.14" lengthAdjust="spacingAndGlyphs">0.4358</text>
<text x="1357.11" y="911.4" font-size="19.2" fill="#fff" font-family="'DejaVu Sans','Liberation Sans',sans-serif" textLength="74.8" lengthAdjust="spacingAndGlyphs">0.4682</text>
<text x="1471.92" y="911.4" font-size="19.2" fill="#fff" font-family="'DejaVu Sans','Liberation Sans',sans-serif" textLength="74.36" lengthAdjust="spacingAndGlyphs">0.5053</text>
<rect x="817" y="918.75" width="765" height="30" fill="#838383"/>
<rect x="817" y="918.75" width="20.5" height="30" fill="url(#rh)"/>
<line x1="817" y1="919.25" x2="837.5" y2="919.25" stroke="#111" stroke-width="1"/>
<text x="845.11" y="941.25" font-size="19.2" fill="#fff" font-family="'DejaVu Sans','Liberation Sans',sans-serif" textLength="86.84" lengthAdjust="spacingAndGlyphs">Target Y</text>
<text x="1012.25" y="941.25" font-size="19.2" fill="#fff" font-family="'DejaVu Sans','Liberation Sans',sans-serif" textLength="102.41" lengthAdjust="spacingAndGlyphs">171.7457</text>
<text x="1126.65" y="941.25" font-size="19.2" fill="#fff" font-family="'DejaVu Sans','Liberation Sans',sans-serif" textLength="102.07" lengthAdjust="spacingAndGlyphs">168.7310</text>
<text x="1241.45" y="941.25" font-size="19.2" fill="#fff" font-family="'DejaVu Sans','Liberation Sans',sans-serif" textLength="102.41" lengthAdjust="spacingAndGlyphs">166.4147</text>
<text x="1356.25" y="941.25" font-size="19.2" fill="#fff" font-family="'DejaVu Sans','Liberation Sans',sans-serif" textLength="102.07" lengthAdjust="spacingAndGlyphs">164.5969</text>
<text x="1471.06" y="941.25" font-size="19.2" fill="#fff" font-family="'DejaVu Sans','Liberation Sans',sans-serif" textLength="101.74" lengthAdjust="spacingAndGlyphs">162.8394</text>
<rect x="817" y="948.6" width="765" height="30" fill="#434343"/>
<rect x="817" y="948.6" width="20.5" height="30" fill="url(#rh)"/>
<line x1="817" y1="949.1" x2="837.5" y2="949.1" stroke="#111" stroke-width="1"/>
<text x="844.89" y="971.1" font-size="19.2" fill="#fff" font-family="'DejaVu Sans','Liberation Sans',sans-serif" textLength="89.98" lengthAdjust="spacingAndGlyphs">ΔE 2000</text>
<text x="1012.24" y="971.1" font-size="19.2" fill="#fff" font-family="'DejaVu Sans','Liberation Sans',sans-serif" textLength="75.37" lengthAdjust="spacingAndGlyphs">1.9407</text>
<text x="1126.65" y="971.1" font-size="19.2" fill="#fff" font-family="'DejaVu Sans','Liberation Sans',sans-serif" textLength="75.03" lengthAdjust="spacingAndGlyphs">1.1660</text>
<text x="1242.32" y="971.1" font-size="19.2" fill="#fff" font-family="'DejaVu Sans','Liberation Sans',sans-serif" textLength="74.36" lengthAdjust="spacingAndGlyphs">0.9923</text>
<text x="1356.25" y="971.1" font-size="19.2" fill="#fff" font-family="'DejaVu Sans','Liberation Sans',sans-serif" textLength="75.03" lengthAdjust="spacingAndGlyphs">1.0220</text>
<text x="1471.92" y="971.1" font-size="19.2" fill="#fff" font-family="'DejaVu Sans','Liberation Sans',sans-serif" textLength="74.36" lengthAdjust="spacingAndGlyphs">0.8583</text>
<rect x="817" y="978.45" width="765" height="30" fill="#838383"/>
<rect x="817" y="978.45" width="20.5" height="30" fill="url(#rh)"/>
<line x1="817" y1="978.95" x2="837.5" y2="978.95" stroke="#111" stroke-width="1"/>
<text x="843.77" y="1000.95" font-size="19.2" fill="#fff" font-family="'DejaVu Sans','Liberation Sans',sans-serif" textLength="62.02" lengthAdjust="spacingAndGlyphs">dEITP</text>
<text x="1013.01" y="1000.95" font-size="19.2" fill="#fff" font-family="'DejaVu Sans','Liberation Sans',sans-serif" textLength="74.69" lengthAdjust="spacingAndGlyphs">2.3365</text>
<text x="1127.4" y="1000.95" font-size="19.2" fill="#fff" font-family="'DejaVu Sans','Liberation Sans',sans-serif" textLength="74.8" lengthAdjust="spacingAndGlyphs">2.1161</text>
<text x="1242.2" y="1000.95" font-size="19.2" fill="#fff" font-family="'DejaVu Sans','Liberation Sans',sans-serif" textLength="74.8" lengthAdjust="spacingAndGlyphs">2.3071</text>
<text x="1357.01" y="1000.95" font-size="19.2" fill="#fff" font-family="'DejaVu Sans','Liberation Sans',sans-serif" textLength="74.25" lengthAdjust="spacingAndGlyphs">2.2649</text>
<text x="1471.8" y="1000.95" font-size="19.2" fill="#fff" font-family="'DejaVu Sans','Liberation Sans',sans-serif" textLength="74.91" lengthAdjust="spacingAndGlyphs">2.1302</text>
<rect x="150" y="1009.5" width="1770" height="48.5" fill="url(#bs)"/>
<rect x="757" y="1011.5" width="110" height="46.5" fill="url(#bsh)"/>
<rect x="151.3" y="1012" width="33.2" height="47" fill="url(#b0)" rx="3" stroke="#8a8a8a" stroke-width="0.8"/>
<circle cx="167.5" cy="1017.8" r="4.400" fill="#7a7a7a"/><path d="M164.6 1019.4l2.900-3.400 2.900 3.400z" fill="#1a1a1a"/>
<rect x="155" y="1031.3" width="26.2" height="22.4" fill="#ff0" rx="2"/>
<rect x="189.3" y="1012.3" width="112.3" height="47" fill="url(#b1)" rx="3.5" stroke="#8c8c8c" stroke-width="0.9"/>
<rect x="193.5" y="1015.5" width="104.5" height="26.5" fill="#c3c3a6" rx="2.5" stroke="#8a8a70" stroke-width="0.8"/>
<text x="237.61" y="1053.5" font-size="8" fill="#1c1c1c" textLength="15.68" lengthAdjust="spacingAndGlyphs">20%</text>
<rect x="303.3" y="1012.3" width="112.3" height="47" fill="url(#b1)" rx="3.5" stroke="#8c8c8c" stroke-width="0.9"/>
<rect x="307.5" y="1015.5" width="104.5" height="26.5" fill="#c2c28a" rx="2.5" stroke="#8a8a70" stroke-width="0.8"/>
<text x="351.85" y="1053.5" font-size="8" fill="#1c1c1c" textLength="15.44" lengthAdjust="spacingAndGlyphs">40%</text>
<rect x="417.3" y="1012.3" width="112.3" height="47" fill="url(#b1)" rx="3.5" stroke="#8c8c8c" stroke-width="0.9"/>
<rect x="421.5" y="1015.5" width="104.5" height="26.5" fill="#c2c26e" rx="2.5" stroke="#8a8a70" stroke-width="0.8"/>
<text x="465.61" y="1053.5" font-size="8" fill="#1c1c1c" textLength="15.68" lengthAdjust="spacingAndGlyphs">60%</text>
<rect x="531.3" y="1012.3" width="112.3" height="47" fill="url(#b1)" rx="3.5" stroke="#8c8c8c" stroke-width="0.9"/>
<rect x="535.5" y="1015.5" width="104.5" height="26.5" fill="#c1c14f" rx="2.5" stroke="#8a8a70" stroke-width="0.8"/>
<text x="579.69" y="1053.5" font-size="8" fill="#1c1c1c" textLength="15.6" lengthAdjust="spacingAndGlyphs">80%</text>
<rect x="645.3" y="1012.3" width="112.3" height="47" fill="#2e2e2e" rx="3.5" stroke="#1c1c1c" stroke-width="1.4"/>
<rect x="649.5" y="1015.5" width="104.5" height="26.5" fill="#c3c300" rx="2.5" stroke="#1a1a1a" stroke-width="0.8"/>
<text x="691.02" y="1053.5" font-size="8" fill="#fff" font-weight="bold" textLength="20.67" lengthAdjust="spacingAndGlyphs">100%</text>
<rect x="1715" y="1018" width="33.3" height="16" fill="url(#sb)" rx="2" stroke="#4a4a4a" stroke-width="0.8"/>
<circle cx="1731.5" cy="1028.5" r="5.500" fill="#777"/>
<rect x="1748.8" y="1018" width="33.3" height="16" fill="url(#sb)" rx="2" stroke="#4a4a4a" stroke-width="0.8"/>
<circle cx="1765.3" cy="1028.5" r="5.500" fill="#777"/>
<rect x="1782.6" y="1018" width="33.3" height="16" fill="url(#sb)" rx="2" stroke="#4a4a4a" stroke-width="0.8"/>
<circle cx="1799.1" cy="1028.5" r="5.500" fill="#777"/>
<rect x="1816.4" y="1018" width="33.3" height="16" fill="url(#sb)" rx="2" stroke="#4a4a4a" stroke-width="0.8"/>
<circle cx="1832.9" cy="1028.5" r="5.500" fill="#777"/>
<rect x="1850.2" y="1018" width="33.3" height="16" fill="url(#sb)" rx="2" stroke="#4a4a4a" stroke-width="0.8"/>
<circle cx="1866.7" cy="1028.5" r="5.500" fill="#777"/>
<circle cx="1902" cy="1027.5" r="6" fill="#3a3a3a"/>
<rect x="1678" y="1026" width="35" height="34" fill="url(#sb)" rx="3" stroke="#999" stroke-width="0.8"/>
<rect x="1685" y="1033" width="20.5" height="20" fill="none" rx="3" stroke="#1a1a1a" stroke-width="2"/>
<rect x="1690.5" y="1038" width="10" height="10" fill="#000"/>
<rect x="1715.5" y="1035.3" width="100.3" height="24" fill="url(#nb)" rx="3" stroke="#c4c4c4" stroke-width="0.8"/>
<rect x="1816.8" y="1035.3" width="102.5" height="24" fill="url(#nb)" rx="3" stroke="#c4c4c4" stroke-width="0.8"/>
<circle cx="1737.8" cy="1046.1" r="7" fill="#9a9a9a"/><circle cx="1897.1" cy="1046.1" r="7" fill="#9a9a9a"/>
<path d="M1737.3 1042.8l-3 3.300 3 3.300M1741 1042.8l-3 3.300 3 3.300M1893.8 1042.8l3 3.300-3 3.300M1897.5 1042.8l3 3.300-3 3.300" fill="none" stroke="#333" stroke-width="1"/>
<text x="1756.83" y="1051.5" font-size="16" fill="#2a2a2a" textLength="38.16" lengthAdjust="spacingAndGlyphs">Back</text>
<text x="1836.57" y="1051.5" font-size="16" fill="#2a2a2a" textLength="39.35" lengthAdjust="spacingAndGlyphs">Next</text>
<g fill="none" stroke-linejoin="round" stroke-linecap="round">
<path d="M1631.7 996.7L1669.2 1005.8L1670 1025.8L1640.8 1028.3L1697.5 1032L1656.7 1045L1634.2 1033.3Z" stroke="#d8d8d8" stroke-opacity=".8" stroke-width="5"/>
<path d="M1631.7 996.7L1669.2 1005.8L1670 1025.8L1640.8 1028.3L1697.5 1032L1656.7 1045L1634.2 1033.3Z" stroke="#842c34" stroke-opacity=".9" stroke-width="3.200"/>
<path d="M1641.7 1009.2L1653.3 1024.2L1674.2 995.4" stroke="#d8d8d8" stroke-opacity=".85" stroke-width="4.600"/>
<path d="M1641.7 1009.2L1653.3 1024.2L1674.2 995.4" stroke="#3a3436" stroke-width="2.800"/>
</g>
<text x="1676" y="1024.4" fill="#c03044" fill-opacity=".62" font-weight="bold" textLength="146" stroke="#e8e8e8" stroke-opacity=".8" stroke-width="1.100" stroke-linejoin="round" font-size="25" lengthAdjust="spacingAndGlyphs">NOTEBOOK</text>
<text x="1823" y="1024.4" fill="#1c1c1c" fill-opacity=".6" textLength="88" stroke="#e8e8e8" stroke-opacity=".8" stroke-width="1.100" stroke-linejoin="round" font-size="25" lengthAdjust="spacingAndGlyphs">CHECK</text>
</svg>
</body></html>
